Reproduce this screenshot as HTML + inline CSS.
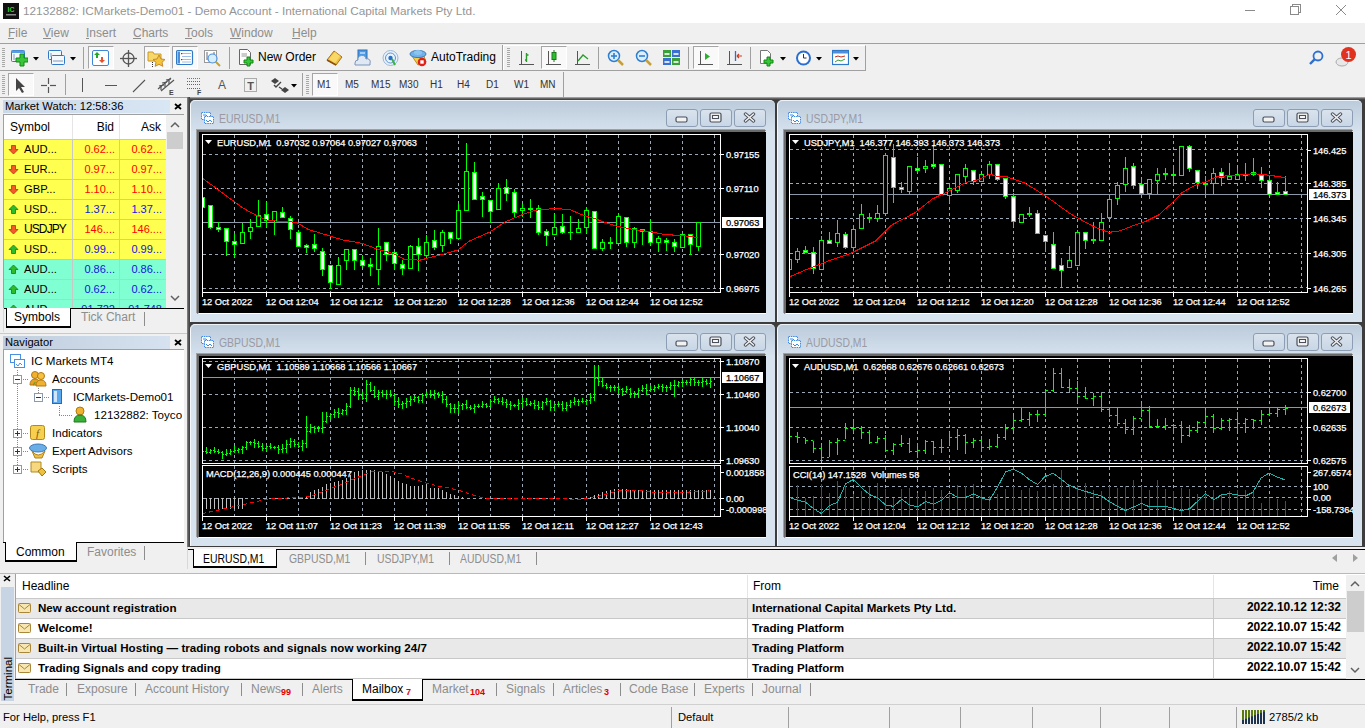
<!DOCTYPE html><html><head><meta charset="utf-8"><style>
html,body{margin:0;padding:0;width:1365px;height:728px;overflow:hidden;background:#f0f0f0;position:relative;font-family:"Liberation Sans",sans-serif}
div{position:absolute;box-sizing:border-box}
.t{white-space:pre}
</style></head><body><div style="left:0px;top:0px;width:1365px;height:23px;background:#fff"></div><svg style="position:absolute;left:3px;top:3px;" width="16" height="16" viewBox="0 0 16 16"><rect width="16" height="16" fill="#111"/><text x="8" y="9" font-size="7" font-family="Liberation Sans" font-weight="bold" fill="#2fd12f" text-anchor="middle">IC</text><rect x="3" y="11" width="10" height="1.5" fill="#888"/></svg><div class="t" style="left:23px;top:2px;height:18px;line-height:18px;font-size:11.8px;color:#959595;font-weight:normal;">12132882: ICMarkets-Demo01 - Demo Account - International Capital Markets Pty Ltd.</div><svg style="position:absolute;left:1240px;top:0px;" width="120" height="22" viewBox="0 0 120 22"><g stroke="#8a8a8a" stroke-width="1" fill="none" shape-rendering="crispEdges"><line x1="5" y1="10.5" x2="15" y2="10.5"/><rect x="50.5" y="6.5" width="8" height="8"/><polyline points="52.5,6.5 52.5,4.5 60.5,4.5 60.5,12.5 58.5,12.5"/></g><g stroke="#8a8a8a" stroke-width="1" fill="none"><line x1="96" y1="5" x2="106" y2="15"/><line x1="106" y1="5" x2="96" y2="15"/></g></svg><div style="left:0px;top:23px;width:1365px;height:20px;background:#f0f0f0"></div><div style="left:0px;top:43px;width:1365px;height:1px;background:#a0a0a0"></div><div class="t" style="left:8px;top:24px;height:18px;line-height:18px;font-size:12px;color:#8d8d8d;font-weight:normal;">File</div><div style="left:8px;top:38px;width:6px;height:1px;background:#8d8d8d"></div><div class="t" style="left:43px;top:24px;height:18px;line-height:18px;font-size:12px;color:#8d8d8d;font-weight:normal;">View</div><div style="left:43px;top:38px;width:8px;height:1px;background:#8d8d8d"></div><div class="t" style="left:86px;top:24px;height:18px;line-height:18px;font-size:12px;color:#8d8d8d;font-weight:normal;">Insert</div><div style="left:86px;top:38px;width:3px;height:1px;background:#8d8d8d"></div><div class="t" style="left:133px;top:24px;height:18px;line-height:18px;font-size:12px;color:#8d8d8d;font-weight:normal;">Charts</div><div style="left:133px;top:38px;width:8px;height:1px;background:#8d8d8d"></div><div class="t" style="left:185px;top:24px;height:18px;line-height:18px;font-size:12px;color:#8d8d8d;font-weight:normal;">Tools</div><div style="left:185px;top:38px;width:7px;height:1px;background:#8d8d8d"></div><div class="t" style="left:230px;top:24px;height:18px;line-height:18px;font-size:12px;color:#8d8d8d;font-weight:normal;">Window</div><div style="left:230px;top:38px;width:11px;height:1px;background:#8d8d8d"></div><div class="t" style="left:292px;top:24px;height:18px;line-height:18px;font-size:12px;color:#8d8d8d;font-weight:normal;">Help</div><div style="left:292px;top:38px;width:8px;height:1px;background:#8d8d8d"></div><div style="left:0px;top:44px;width:1365px;height:26px;background:#f0f0f0"></div><div style="left:0px;top:70px;width:866px;height:1px;background:#a0a0a0"></div><div style="left:0px;top:71px;width:1365px;height:26px;background:#f0f0f0"></div><div style="left:0px;top:97px;width:188px;height:1px;background:#a0a0a0"></div><div style="left:503px;top:45px;width:1px;height:25px;background:#fff;box-shadow:-1px 0 0 #a0a0a0"></div><div style="left:504px;top:45px;width:362px;height:25px;border-top:1px solid #fff;border-right:1px solid #a0a0a0"></div><div style="left:563px;top:72px;width:1px;height:25px;background:#a0a0a0"></div><svg style="position:absolute;left:2px;top:48px;" width="3" height="20" viewBox="0 0 3 20"><rect x="0" y="0" width="3" height="1" fill="#a8a8a8"/><rect x="0" y="2" width="3" height="1" fill="#a8a8a8"/><rect x="0" y="4" width="3" height="1" fill="#a8a8a8"/><rect x="0" y="6" width="3" height="1" fill="#a8a8a8"/><rect x="0" y="8" width="3" height="1" fill="#a8a8a8"/><rect x="0" y="10" width="3" height="1" fill="#a8a8a8"/><rect x="0" y="12" width="3" height="1" fill="#a8a8a8"/><rect x="0" y="14" width="3" height="1" fill="#a8a8a8"/><rect x="0" y="16" width="3" height="1" fill="#a8a8a8"/><rect x="0" y="18" width="3" height="1" fill="#a8a8a8"/></svg><svg style="position:absolute;left:10px;top:49px;" width="18" height="18" viewBox="0 0 18 18"><rect x="1.5" y="1.5" width="13" height="11" rx="1" fill="#f4f8fd" stroke="#2f78c8"/><rect x="1.5" y="1.5" width="13" height="2.5" fill="#5b9be0"/><line x1="4" y1="5" x2="4" y2="11" stroke="#7a9ab8"/><path d="M10 5h4v4h4v4h-4v4h-4v-4h-4v-4h4z" fill="#39c53a" stroke="#0e8a10" stroke-width="1"/></svg><svg style="position:absolute;left:33px;top:57px;" width="6" height="4" viewBox="0 0 6 4"><polygon points="0,0 6,0 3,3.5" fill="#000"/></svg><svg style="position:absolute;left:47px;top:49px;" width="18" height="18" viewBox="0 0 18 18"><rect x="1.5" y="1.5" width="13" height="9" rx="1" fill="#f4f8fd" stroke="#2f78c8"/><rect x="4.5" y="6.5" width="13" height="9" rx="1" fill="#f4f8fd" stroke="#2f78c8"/><line x1="6" y1="12" x2="16" y2="12" stroke="#7a9ab8"/><line x1="4" y1="4" x2="4" y2="8" stroke="#7a9ab8"/></svg><svg style="position:absolute;left:70px;top:57px;" width="6" height="4" viewBox="0 0 6 4"><polygon points="0,0 6,0 3,3.5" fill="#000"/></svg><div style="left:83px;top:47px;width:1px;height:22px;background:#a0a0a0"></div><div style="left:88px;top:46px;width:26px;height:23px;background:#f9f9f9;border-top:1px solid #a5a5a5;border-left:1px solid #a5a5a5;border-right:1px solid #fff;border-bottom:1px solid #fff"></div><svg style="position:absolute;left:92px;top:49px;" width="18" height="18" viewBox="0 0 18 18"><rect x="0.5" y="1.5" width="16" height="15" rx="1.5" fill="#fff" stroke="#3f86d6"/><path d="M5 3l3 3h-2v3h-2v-3h-2z" fill="#22a822"/><path d="M10 14l3-3h-2v-3h-2v3h-2z" fill="#e8502a"/></svg><svg style="position:absolute;left:120px;top:49px;" width="18" height="18" viewBox="0 0 18 18"><circle cx="8.5" cy="9.5" r="5.5" fill="none" stroke="#555" stroke-width="1.3"/><line x1="8.5" y1="1" x2="8.5" y2="18" stroke="#555" stroke-width="1.3"/><line x1="0" y1="9.5" x2="17" y2="9.5" stroke="#555" stroke-width="1.3"/></svg><div style="left:144px;top:46px;width:26px;height:23px;background:#f9f9f9;border-top:1px solid #a5a5a5;border-left:1px solid #a5a5a5;border-right:1px solid #fff;border-bottom:1px solid #fff"></div><svg style="position:absolute;left:147px;top:49px;" width="19" height="19" viewBox="0 0 19 19"><path d="M1 3h5l1 2h7v7h-13z" fill="#f7d66a" stroke="#c89a2a"/><path d="M12 6l2 4 4 .5-3 2.8 .8 4-3.8-2-3.8 2 .8-4-3-2.8 4-.5z" fill="#f3c63a" stroke="#c8882a"/><rect x="5" y="13" width="1" height="1" fill="#333"/><rect x="5" y="15" width="1" height="1" fill="#333"/><rect x="5" y="17" width="1" height="1" fill="#333"/></svg><div style="left:172px;top:46px;width:26px;height:23px;background:#f9f9f9;border-top:1px solid #a5a5a5;border-left:1px solid #a5a5a5;border-right:1px solid #fff;border-bottom:1px solid #fff"></div><svg style="position:absolute;left:176px;top:49px;" width="18" height="18" viewBox="0 0 18 18"><rect x="0.5" y="1.5" width="16" height="14" rx="1.5" fill="#fff" stroke="#2f78c8" stroke-width="1.2"/><rect x="1.5" y="2.5" width="2.5" height="12" fill="#4d8fd8"/><g stroke="#9cc0e8"><line x1="6" y1="4.5" x2="15" y2="4.5"/><line x1="6" y1="7.5" x2="15" y2="7.5"/><line x1="6" y1="10.5" x2="15" y2="10.5"/><line x1="6" y1="13" x2="15" y2="13"/></g><rect x="5" y="4" width="1.2" height="1.2" fill="#e00"/><rect x="5" y="10" width="1.2" height="1.2" fill="#e00"/></svg><svg style="position:absolute;left:203px;top:49px;" width="18" height="18" viewBox="0 0 18 18"><rect x="1.5" y="1.5" width="12" height="12" fill="#fff" stroke="#999"/><path d="M4 3v8M11 3v8" stroke="#667" /><circle cx="9.5" cy="9.5" r="4.5" fill="#d8ecfb" stroke="#4a90d9" stroke-width="1.2"/><line x1="12.5" y1="12.5" x2="17" y2="17" stroke="#c8a030" stroke-width="2"/></svg><div style="left:229px;top:47px;width:1px;height:22px;background:#a0a0a0"></div><svg style="position:absolute;left:238px;top:48px;" width="18" height="19" viewBox="0 0 18 19"><path d="M1.5 1.5h8l3 3v12h-11z" fill="#fff" stroke="#666"/><line x1="3.5" y1="6" x2="9" y2="6" stroke="#999"/><line x1="3.5" y1="8" x2="9" y2="8" stroke="#999"/><path d="M9 9h3v3h3v3h-3v3h-3v-3h-3v-3h3z" fill="#39c53a" stroke="#0e8a10"/></svg><div class="t" style="left:258px;top:48px;height:18px;line-height:18px;font-size:12px;color:#000;font-weight:normal;">New Order</div><svg style="position:absolute;left:326px;top:49px;" width="18" height="18" viewBox="0 0 18 18"><path d="M1 11l7-9 8 6-6 8z" fill="#f0c040" stroke="#a8701a"/><path d="M3 10l6-7 5 4-5 7z" fill="#f7d868"/><path d="M1 11l9 5" stroke="#8a5010" stroke-width="1.5"/></svg><svg style="position:absolute;left:354px;top:49px;" width="18" height="18" viewBox="0 0 18 18"><rect x="4" y="1" width="9" height="11" fill="#4a9be8" stroke="#2a6fb8"/><line x1="6" y1="4" x2="11" y2="4" stroke="#fff"/><path d="M1 14a3 3 0 0 1 3-3a4 4 0 0 1 8-1a3 3 0 0 1 4 4v2h-15z" fill="#dfe8f3" stroke="#7a96b8"/></svg><svg style="position:absolute;left:382px;top:49px;" width="18" height="18" viewBox="0 0 18 18"><circle cx="8.5" cy="9" r="7.5" fill="#eaf2fb" stroke="#9ab8d8"/><circle cx="8.5" cy="9" r="5" fill="none" stroke="#5a94d4"/><circle cx="8.5" cy="9" r="2.2" fill="#2a70c8"/><path d="M10 10l3 6" stroke="#3cb03c" stroke-width="2"/></svg><svg style="position:absolute;left:409px;top:48px;" width="18" height="19" viewBox="0 0 18 19"><path d="M3 8l6 9 8-3-2-6z" fill="#f2cf4a" stroke="#b8901a"/><ellipse cx="9" cy="6" rx="8" ry="3.6" fill="#6fb2ea" stroke="#3a7ab8"/><ellipse cx="9" cy="4.5" rx="4" ry="2.5" fill="#8cc4f0"/><circle cx="13" cy="14" r="4.3" fill="#e0201a"/><rect x="11.3" y="12.3" width="3.4" height="3.4" fill="#fff"/></svg><div class="t" style="left:431px;top:48px;height:18px;line-height:18px;font-size:12px;color:#000;font-weight:normal;">AutoTrading</div><svg style="position:absolute;left:507px;top:48px;" width="3" height="20" viewBox="0 0 3 20"><rect x="0" y="0" width="3" height="1" fill="#a8a8a8"/><rect x="0" y="2" width="3" height="1" fill="#a8a8a8"/><rect x="0" y="4" width="3" height="1" fill="#a8a8a8"/><rect x="0" y="6" width="3" height="1" fill="#a8a8a8"/><rect x="0" y="8" width="3" height="1" fill="#a8a8a8"/><rect x="0" y="10" width="3" height="1" fill="#a8a8a8"/><rect x="0" y="12" width="3" height="1" fill="#a8a8a8"/><rect x="0" y="14" width="3" height="1" fill="#a8a8a8"/><rect x="0" y="16" width="3" height="1" fill="#a8a8a8"/><rect x="0" y="18" width="3" height="1" fill="#a8a8a8"/></svg><svg style="position:absolute;left:518px;top:49px;" width="18" height="18" viewBox="0 0 18 18"><g stroke="#555" fill="none"><line x1="3.5" y1="2" x2="3.5" y2="16"/><line x1="1" y1="15.5" x2="16" y2="15.5"/></g><path d="M8.5 4v9M7 11h1.5M8.5 6h2" stroke="#2a9a2a" stroke-width="1.4" fill="none"/></svg><div style="left:541px;top:46px;width:26px;height:23px;background:#f9f9f9;border-top:1px solid #a5a5a5;border-left:1px solid #a5a5a5;border-right:1px solid #fff;border-bottom:1px solid #fff"></div><svg style="position:absolute;left:545px;top:49px;" width="18" height="18" viewBox="0 0 18 18"><g stroke="#555" fill="none"><line x1="3.5" y1="2" x2="3.5" y2="16"/><line x1="1" y1="15.5" x2="16" y2="15.5"/></g><line x1="9" y1="1" x2="9" y2="13" stroke="#1a7a1a"/><rect x="7" y="3.5" width="4" height="7" fill="#2cc02c" stroke="#1a7a1a"/></svg><svg style="position:absolute;left:574px;top:49px;" width="18" height="18" viewBox="0 0 18 18"><g stroke="#555" fill="none"><line x1="3.5" y1="2" x2="3.5" y2="16"/><line x1="1" y1="15.5" x2="16" y2="15.5"/></g><path d="M4 12l5-6 5 4" stroke="#2a9a2a" stroke-width="1.3" fill="none"/></svg><div style="left:598px;top:47px;width:1px;height:22px;background:#a0a0a0"></div><svg style="position:absolute;left:607px;top:49px;" width="18" height="18" viewBox="0 0 18 18"><circle cx="7" cy="7" r="5.5" fill="#dcefff" stroke="#2f7fd0" stroke-width="1.5"/><line x1="11" y1="11" x2="16" y2="16" stroke="#c8a030" stroke-width="2.5"/><line x1="4" y1="7" x2="10" y2="7" stroke="#2f7fd0" stroke-width="1.6"/><line x1="7" y1="4" x2="7" y2="10" stroke="#2f7fd0" stroke-width="1.6"/></svg><svg style="position:absolute;left:635px;top:49px;" width="18" height="18" viewBox="0 0 18 18"><circle cx="7" cy="7" r="5.5" fill="#dcefff" stroke="#2f7fd0" stroke-width="1.5"/><line x1="11" y1="11" x2="16" y2="16" stroke="#c8a030" stroke-width="2.5"/><line x1="4" y1="7" x2="10" y2="7" stroke="#2f7fd0" stroke-width="1.6"/></svg><svg style="position:absolute;left:662px;top:49px;" width="19" height="18" viewBox="0 0 19 18"><rect x="1" y="1" width="8" height="7" fill="#3aa03a"/><rect x="10" y="1" width="8" height="7" fill="#3a70d0"/><rect x="1" y="9" width="8" height="7" fill="#3a70d0"/><rect x="10" y="9" width="8" height="7" fill="#3aa03a"/><g fill="#fff" opacity=".8"><rect x="2.5" y="4" width="5" height="2"/><rect x="11.5" y="4" width="5" height="2"/><rect x="2.5" y="12" width="5" height="2"/><rect x="11.5" y="12" width="5" height="2"/></g></svg><div style="left:688px;top:47px;width:1px;height:22px;background:#a0a0a0"></div><div style="left:693px;top:46px;width:26px;height:23px;background:#f9f9f9;border-top:1px solid #a5a5a5;border-left:1px solid #a5a5a5;border-right:1px solid #fff;border-bottom:1px solid #fff"></div><svg style="position:absolute;left:697px;top:49px;" width="18" height="18" viewBox="0 0 18 18"><g stroke="#555" fill="none"><line x1="3.5" y1="2" x2="3.5" y2="16"/><line x1="1" y1="15.5" x2="16" y2="15.5"/></g><path d="M8 4v7l5-3.5z" fill="#2cb02c"/></svg><svg style="position:absolute;left:726px;top:49px;" width="18" height="18" viewBox="0 0 18 18"><g stroke="#555" fill="none"><line x1="3.5" y1="2" x2="3.5" y2="16"/><line x1="1" y1="15.5" x2="16" y2="15.5"/></g><line x1="9.5" y1="2" x2="9.5" y2="12" stroke="#2a6fc8" stroke-width="1.3"/><path d="M11 7h5M11 7l2-2M11 7l2 2" stroke="#d03a1a" stroke-width="1.2" fill="none"/></svg><div style="left:750px;top:47px;width:1px;height:22px;background:#a0a0a0"></div><svg style="position:absolute;left:759px;top:49px;" width="17" height="19" viewBox="0 0 17 19"><path d="M1.5 1.5h7l3 3v10h-10z" fill="#fff" stroke="#777"/><path d="M8 8h3v3h3v3h-3v3h-3v-3h-3v-3h3z" fill="#39c53a" stroke="#0e8a10"/></svg><svg style="position:absolute;left:780px;top:57px;" width="6" height="4" viewBox="0 0 6 4"><polygon points="0,0 6,0 3,3.5" fill="#000"/></svg><svg style="position:absolute;left:795px;top:49px;" width="18" height="18" viewBox="0 0 18 18"><circle cx="8.5" cy="9" r="7.5" fill="#2a6fd0"/><circle cx="8.5" cy="9" r="5.5" fill="#fff"/><path d="M8.5 5v4h3" stroke="#333" fill="none"/></svg><svg style="position:absolute;left:816px;top:57px;" width="6" height="4" viewBox="0 0 6 4"><polygon points="0,0 6,0 3,3.5" fill="#000"/></svg><svg style="position:absolute;left:832px;top:49px;" width="17" height="17" viewBox="0 0 17 17"><rect x="0.5" y="1.5" width="16" height="14" fill="#fff" stroke="#2f78c8" stroke-width="1.2"/><rect x="1" y="2" width="15" height="2.5" fill="#4d8fd8"/><path d="M3 8l3-1 3 1 4-1" stroke="#c03020" fill="none"/><path d="M3 13l3-2 3 1 4-2" stroke="#30a030" fill="none"/></svg><svg style="position:absolute;left:853px;top:57px;" width="6" height="4" viewBox="0 0 6 4"><polygon points="0,0 6,0 3,3.5" fill="#000"/></svg><svg style="position:absolute;left:1308px;top:50px;" width="17" height="17" viewBox="0 0 17 17"><circle cx="10" cy="6" r="4.5" fill="none" stroke="#2f6fd0" stroke-width="1.8"/><line x1="6.8" y1="9.2" x2="2" y2="14" stroke="#2f6fd0" stroke-width="2.4"/></svg><svg style="position:absolute;left:1334px;top:45px;" width="24" height="23" viewBox="0 0 24 23"><ellipse cx="8" cy="17" rx="6" ry="4" fill="#e8e8e8" stroke="#aaa"/><circle cx="14.5" cy="9.5" r="7.5" fill="#e0321e"/><text x="14.5" y="13.5" font-size="11" font-family="Liberation Sans" fill="#fff" text-anchor="middle">1</text></svg><svg style="position:absolute;left:2px;top:75px;" width="3" height="19" viewBox="0 0 3 19"><rect x="0" y="0" width="3" height="1" fill="#a8a8a8"/><rect x="0" y="2" width="3" height="1" fill="#a8a8a8"/><rect x="0" y="4" width="3" height="1" fill="#a8a8a8"/><rect x="0" y="6" width="3" height="1" fill="#a8a8a8"/><rect x="0" y="8" width="3" height="1" fill="#a8a8a8"/><rect x="0" y="10" width="3" height="1" fill="#a8a8a8"/><rect x="0" y="12" width="3" height="1" fill="#a8a8a8"/><rect x="0" y="14" width="3" height="1" fill="#a8a8a8"/><rect x="0" y="16" width="3" height="1" fill="#a8a8a8"/><rect x="0" y="18" width="3" height="1" fill="#a8a8a8"/></svg><div style="left:8px;top:73px;width:26px;height:23px;background:#f9f9f9;border-top:1px solid #a5a5a5;border-left:1px solid #a5a5a5;border-right:1px solid #fff;border-bottom:1px solid #fff"></div><svg style="position:absolute;left:14px;top:77px;" width="14" height="17" viewBox="0 0 14 17"><path d="M2 1v13l3-3 3 5 2-1-3-5h4z" fill="#444"/></svg><svg style="position:absolute;left:40px;top:77px;" width="17" height="17" viewBox="0 0 17 17"><g stroke="#555" stroke-width="1.2"><line x1="8.5" y1="1" x2="8.5" y2="7"/><line x1="8.5" y1="10" x2="8.5" y2="16"/><line x1="1" y1="8.5" x2="7" y2="8.5"/><line x1="10" y1="8.5" x2="16" y2="8.5"/></g></svg><div style="left:65px;top:74px;width:1px;height:21px;background:#a0a0a0"></div><div style="left:82px;top:78px;width:1px;height:14px;background:#555"></div><div style="left:105px;top:85px;width:12px;height:1px;background:#555"></div><svg style="position:absolute;left:132px;top:79px;" width="14" height="14" viewBox="0 0 14 14"><line x1="13" y1="1" x2="1" y2="13" stroke="#555" stroke-width="1.1"/></svg><svg style="position:absolute;left:157px;top:76px;" width="19" height="20" viewBox="0 0 19 20"><g stroke="#555" stroke-width="1.2" fill="none"><path d="M1 13l13-11"/><path d="M4 15l13-11"/><path d="M4 9v5M8 6v5M12 3v5"/><path d="M2 10l5-1M5 7l5-1M9 4l5-1"/></g><text x="12" y="19" font-size="7" font-weight="bold" font-family="Liberation Sans" fill="#444">E</text></svg><svg style="position:absolute;left:187px;top:77px;" width="18" height="19" viewBox="0 0 18 19"><g fill="#666"><rect x="0" y="1" width="13" height="1" style="opacity:.9"/><rect x="0" y="4" width="13" height="1"/><rect x="0" y="7" width="13" height="1"/><rect x="0" y="11" width="13" height="1"/></g><g fill="#f0f0f0"><rect x="1" y="0" width="1" height="13"/><rect x="3" y="0" width="1" height="13"/><rect x="5" y="0" width="1" height="13"/><rect x="7" y="0" width="1" height="13"/><rect x="9" y="0" width="1" height="13"/><rect x="11" y="0" width="1" height="13"/></g><text x="10" y="18" font-size="7" font-weight="bold" font-family="Liberation Sans" fill="#444">F</text></svg><div class="t" style="left:218px;top:77px;height:17px;line-height:17px;font-size:12px;color:#555;font-weight:normal;">A</div><svg style="position:absolute;left:243px;top:77px;" width="16" height="17" viewBox="0 0 16 17"><rect x="1.5" y="1.5" width="12" height="13" fill="none" stroke="#666" stroke-dasharray="1,1"/><text x="7.5" y="12.5" font-size="11" font-weight="bold" font-family="Liberation Sans" fill="#555" text-anchor="middle">T</text></svg><svg style="position:absolute;left:271px;top:78px;" width="19" height="16" viewBox="0 0 19 16"><path d="M4 0l4 3-4 3-4-3z" fill="#444"/><path d="M14 9l4 3-4 3-4-3z" fill="#444"/><path d="M3 7l2 2 5-5" stroke="#444" stroke-width="1.4" fill="none"/><path d="M8 9l3 2" stroke="#444" stroke-width="1.4"/></svg><svg style="position:absolute;left:291px;top:84px;" width="6" height="4" viewBox="0 0 6 4"><polygon points="0,0 6,0 3,3.5" fill="#000"/></svg><div style="left:302px;top:73px;width:1px;height:23px;background:#a0a0a0"></div><svg style="position:absolute;left:306px;top:75px;" width="3" height="19" viewBox="0 0 3 19"><rect x="0" y="0" width="3" height="1" fill="#a8a8a8"/><rect x="0" y="2" width="3" height="1" fill="#a8a8a8"/><rect x="0" y="4" width="3" height="1" fill="#a8a8a8"/><rect x="0" y="6" width="3" height="1" fill="#a8a8a8"/><rect x="0" y="8" width="3" height="1" fill="#a8a8a8"/><rect x="0" y="10" width="3" height="1" fill="#a8a8a8"/><rect x="0" y="12" width="3" height="1" fill="#a8a8a8"/><rect x="0" y="14" width="3" height="1" fill="#a8a8a8"/><rect x="0" y="16" width="3" height="1" fill="#a8a8a8"/><rect x="0" y="18" width="3" height="1" fill="#a8a8a8"/></svg><div style="left:312px;top:73px;width:26px;height:23px;background:#f9f9f9;border-top:1px solid #a5a5a5;border-left:1px solid #a5a5a5;border-right:1px solid #fff;border-bottom:1px solid #fff"></div><div class="t" style="left:317px;top:76px;height:17px;line-height:17px;font-size:10px;color:#333;font-weight:normal;">M1</div><div class="t" style="left:345px;top:76px;height:17px;line-height:17px;font-size:10px;color:#333;font-weight:normal;">M5</div><div class="t" style="left:371px;top:76px;height:17px;line-height:17px;font-size:10px;color:#333;font-weight:normal;">M15</div><div class="t" style="left:399px;top:76px;height:17px;line-height:17px;font-size:10px;color:#333;font-weight:normal;">M30</div><div class="t" style="left:430px;top:76px;height:17px;line-height:17px;font-size:10px;color:#333;font-weight:normal;">H1</div><div class="t" style="left:457px;top:76px;height:17px;line-height:17px;font-size:10px;color:#333;font-weight:normal;">H4</div><div class="t" style="left:486px;top:76px;height:17px;line-height:17px;font-size:10px;color:#333;font-weight:normal;">D1</div><div class="t" style="left:514px;top:76px;height:17px;line-height:17px;font-size:10px;color:#333;font-weight:normal;">W1</div><div class="t" style="left:540px;top:76px;height:17px;line-height:17px;font-size:10px;color:#333;font-weight:normal;">MN</div><div style="left:0px;top:98px;width:187px;height:471px;background:#f0f0f0"></div><div style="left:187px;top:98px;width:1px;height:471px;background:#d8d8d8"></div><div style="left:3px;top:100px;width:167px;height:13px;background:linear-gradient(90deg,#cbd8e8,#d9e6f4)"></div><div class="t" style="left:5px;top:99px;height:15px;line-height:15px;font-size:11.2px;color:#000;font-weight:normal;">Market Watch: 12:58:36</div><svg style="position:absolute;left:174px;top:103px;" width="8" height="7" viewBox="0 0 8 7"><path d="M1 1l6 5M7 1l-6 5" stroke="#000" stroke-width="1.8"/></svg><div style="left:3px;top:114px;width:181px;height:194px;background:#fff;border-top:1px solid #a0a0a0;border-left:1px solid #a0a0a0"></div><div style="left:4px;top:115px;width:162px;height:24px;background:#fff"></div><div style="left:72px;top:115px;width:1px;height:24px;background:#e5e5e5"></div><div style="left:119px;top:115px;width:1px;height:24px;background:#e5e5e5"></div><div class="t" style="left:10px;top:119px;height:16px;line-height:16px;font-size:12px;color:#000;font-weight:normal;">Symbol</div><div class="t" style="right:1251px;top:119px;height:16px;line-height:16px;font-size:12px;color:#000;font-weight:normal;text-align:right;">Bid</div><div class="t" style="right:1204px;top:119px;height:16px;line-height:16px;font-size:12px;color:#000;font-weight:normal;text-align:right;">Ask</div><div style="left:4px;top:139px;width:162px;height:20px;background:#ffff50;overflow:hidden"><div style="left:0px;top:0px;width:162px;height:1px;background:#c8c8c8"></div><div style="left:68px;top:0px;width:1px;height:20px;background:#c8c8c8"></div><div style="left:115px;top:0px;width:1px;height:20px;background:#c8c8c8"></div><svg style="position:absolute;left:4px;top:5px;" width="11" height="11" viewBox="0 0 11 11"><path d="M5.5 10l4.5-4.5h-2.5v-4h-4v4h-2.5z" fill="#f25a2a" stroke="#b8300a" stroke-width=".8"/></svg><div class="t" style="left:20px;top:1px;height:18px;line-height:18px;font-size:11.2px;color:#000;font-weight:normal;">AUD...</div></div><div style="left:73px;top:140px;width:46px;height:19px;overflow:hidden"><div class="t" style="right:4px;top:0px;height:18px;line-height:18px;font-size:11px;color:#ff0000">0.62...</div></div><div style="left:120px;top:140px;width:46px;height:19px;overflow:hidden"><div class="t" style="right:4px;top:0px;height:18px;line-height:18px;font-size:11px;color:#ff0000">0.62...</div></div><div style="left:4px;top:159px;width:162px;height:20px;background:#ffff50;overflow:hidden"><div style="left:0px;top:0px;width:162px;height:1px;background:#c8c8c8"></div><div style="left:68px;top:0px;width:1px;height:20px;background:#c8c8c8"></div><div style="left:115px;top:0px;width:1px;height:20px;background:#c8c8c8"></div><svg style="position:absolute;left:4px;top:5px;" width="11" height="11" viewBox="0 0 11 11"><path d="M5.5 10l4.5-4.5h-2.5v-4h-4v4h-2.5z" fill="#f25a2a" stroke="#b8300a" stroke-width=".8"/></svg><div class="t" style="left:20px;top:1px;height:18px;line-height:18px;font-size:11.2px;color:#000;font-weight:normal;">EUR...</div></div><div style="left:73px;top:160px;width:46px;height:19px;overflow:hidden"><div class="t" style="right:4px;top:0px;height:18px;line-height:18px;font-size:11px;color:#ff0000">0.97...</div></div><div style="left:120px;top:160px;width:46px;height:19px;overflow:hidden"><div class="t" style="right:4px;top:0px;height:18px;line-height:18px;font-size:11px;color:#ff0000">0.97...</div></div><div style="left:4px;top:179px;width:162px;height:20px;background:#ffff50;overflow:hidden"><div style="left:0px;top:0px;width:162px;height:1px;background:#c8c8c8"></div><div style="left:68px;top:0px;width:1px;height:20px;background:#c8c8c8"></div><div style="left:115px;top:0px;width:1px;height:20px;background:#c8c8c8"></div><svg style="position:absolute;left:4px;top:5px;" width="11" height="11" viewBox="0 0 11 11"><path d="M5.5 10l4.5-4.5h-2.5v-4h-4v4h-2.5z" fill="#f25a2a" stroke="#b8300a" stroke-width=".8"/></svg><div class="t" style="left:20px;top:1px;height:18px;line-height:18px;font-size:11.2px;color:#000;font-weight:normal;">GBP...</div></div><div style="left:73px;top:180px;width:46px;height:19px;overflow:hidden"><div class="t" style="right:4px;top:0px;height:18px;line-height:18px;font-size:11px;color:#ff0000">1.10...</div></div><div style="left:120px;top:180px;width:46px;height:19px;overflow:hidden"><div class="t" style="right:4px;top:0px;height:18px;line-height:18px;font-size:11px;color:#ff0000">1.10...</div></div><div style="left:4px;top:199px;width:162px;height:20px;background:#ffff50;overflow:hidden"><div style="left:0px;top:0px;width:162px;height:1px;background:#c8c8c8"></div><div style="left:68px;top:0px;width:1px;height:20px;background:#c8c8c8"></div><div style="left:115px;top:0px;width:1px;height:20px;background:#c8c8c8"></div><svg style="position:absolute;left:4px;top:5px;" width="11" height="11" viewBox="0 0 11 11"><path d="M5.5 1l4.5 4.5h-2.5v4h-4v-4h-2.5z" fill="#2dbb2d" stroke="#137a13" stroke-width=".8"/></svg><div class="t" style="left:20px;top:1px;height:18px;line-height:18px;font-size:11.2px;color:#000;font-weight:normal;">USD...</div></div><div style="left:73px;top:200px;width:46px;height:19px;overflow:hidden"><div class="t" style="right:4px;top:0px;height:18px;line-height:18px;font-size:11px;color:#1414e0">1.37...</div></div><div style="left:120px;top:200px;width:46px;height:19px;overflow:hidden"><div class="t" style="right:4px;top:0px;height:18px;line-height:18px;font-size:11px;color:#1414e0">1.37...</div></div><div style="left:4px;top:219px;width:162px;height:20px;background:#ffff50;overflow:hidden"><div style="left:0px;top:0px;width:162px;height:1px;background:#c8c8c8"></div><div style="left:68px;top:0px;width:1px;height:20px;background:#c8c8c8"></div><div style="left:115px;top:0px;width:1px;height:20px;background:#c8c8c8"></div><svg style="position:absolute;left:4px;top:5px;" width="11" height="11" viewBox="0 0 11 11"><path d="M5.5 10l4.5-4.5h-2.5v-4h-4v4h-2.5z" fill="#f25a2a" stroke="#b8300a" stroke-width=".8"/></svg><div class="t" style="left:20px;top:1px;height:18px;line-height:18px;font-size:12px;color:#000;font-weight:normal;letter-spacing:-0.9px;">USDJPY</div></div><div style="left:73px;top:220px;width:46px;height:19px;overflow:hidden"><div class="t" style="right:4px;top:0px;height:18px;line-height:18px;font-size:11px;color:#ff0000">146....</div></div><div style="left:120px;top:220px;width:46px;height:19px;overflow:hidden"><div class="t" style="right:4px;top:0px;height:18px;line-height:18px;font-size:11px;color:#ff0000">146....</div></div><div style="left:4px;top:239px;width:162px;height:20px;background:#ffff50;overflow:hidden"><div style="left:0px;top:0px;width:162px;height:1px;background:#c8c8c8"></div><div style="left:68px;top:0px;width:1px;height:20px;background:#c8c8c8"></div><div style="left:115px;top:0px;width:1px;height:20px;background:#c8c8c8"></div><svg style="position:absolute;left:4px;top:5px;" width="11" height="11" viewBox="0 0 11 11"><path d="M5.5 1l4.5 4.5h-2.5v4h-4v-4h-2.5z" fill="#2dbb2d" stroke="#137a13" stroke-width=".8"/></svg><div class="t" style="left:20px;top:1px;height:18px;line-height:18px;font-size:11.2px;color:#000;font-weight:normal;">USD...</div></div><div style="left:73px;top:240px;width:46px;height:19px;overflow:hidden"><div class="t" style="right:4px;top:0px;height:18px;line-height:18px;font-size:11px;color:#1414e0">0.99...</div></div><div style="left:120px;top:240px;width:46px;height:19px;overflow:hidden"><div class="t" style="right:4px;top:0px;height:18px;line-height:18px;font-size:11px;color:#1414e0">0.99...</div></div><div style="left:4px;top:259px;width:162px;height:20px;background:#80ffd2;overflow:hidden"><div style="left:0px;top:0px;width:162px;height:1px;background:#c8c8c8"></div><div style="left:68px;top:0px;width:1px;height:20px;background:#c8c8c8"></div><div style="left:115px;top:0px;width:1px;height:20px;background:#c8c8c8"></div><svg style="position:absolute;left:4px;top:5px;" width="11" height="11" viewBox="0 0 11 11"><path d="M5.5 1l4.5 4.5h-2.5v4h-4v-4h-2.5z" fill="#2dbb2d" stroke="#137a13" stroke-width=".8"/></svg><div class="t" style="left:20px;top:1px;height:18px;line-height:18px;font-size:11.2px;color:#000;font-weight:normal;">AUD...</div></div><div style="left:73px;top:260px;width:46px;height:19px;overflow:hidden"><div class="t" style="right:4px;top:0px;height:18px;line-height:18px;font-size:11px;color:#1414e0">0.86...</div></div><div style="left:120px;top:260px;width:46px;height:19px;overflow:hidden"><div class="t" style="right:4px;top:0px;height:18px;line-height:18px;font-size:11px;color:#1414e0">0.86...</div></div><div style="left:4px;top:279px;width:162px;height:20px;background:#80ffd2;overflow:hidden"><div style="left:0px;top:0px;width:162px;height:1px;background:#c8c8c8"></div><div style="left:68px;top:0px;width:1px;height:20px;background:#c8c8c8"></div><div style="left:115px;top:0px;width:1px;height:20px;background:#c8c8c8"></div><svg style="position:absolute;left:4px;top:5px;" width="11" height="11" viewBox="0 0 11 11"><path d="M5.5 1l4.5 4.5h-2.5v4h-4v-4h-2.5z" fill="#2dbb2d" stroke="#137a13" stroke-width=".8"/></svg><div class="t" style="left:20px;top:1px;height:18px;line-height:18px;font-size:11.2px;color:#000;font-weight:normal;">AUD...</div></div><div style="left:73px;top:280px;width:46px;height:19px;overflow:hidden"><div class="t" style="right:4px;top:0px;height:18px;line-height:18px;font-size:11px;color:#1414e0">0.62...</div></div><div style="left:120px;top:280px;width:46px;height:19px;overflow:hidden"><div class="t" style="right:4px;top:0px;height:18px;line-height:18px;font-size:11px;color:#1414e0">0.62...</div></div><div style="left:4px;top:299px;width:162px;height:9px;background:#80ffd2;overflow:hidden"><div style="left:0px;top:0px;width:162px;height:1px;background:#c8c8c8"></div><div style="left:68px;top:0px;width:1px;height:20px;background:#c8c8c8"></div><div style="left:115px;top:0px;width:1px;height:20px;background:#c8c8c8"></div><svg style="position:absolute;left:4px;top:5px;" width="11" height="11" viewBox="0 0 11 11"><path d="M5.5 1l4.5 4.5h-2.5v4h-4v-4h-2.5z" fill="#2dbb2d" stroke="#137a13" stroke-width=".8"/></svg><div class="t" style="left:20px;top:1px;height:18px;line-height:18px;font-size:11.2px;color:#000;font-weight:normal;">AUD...</div></div><div style="left:73px;top:300px;width:46px;height:8px;overflow:hidden"><div class="t" style="right:4px;top:0px;height:18px;line-height:18px;font-size:11px;color:#1414e0">91.722</div></div><div style="left:120px;top:300px;width:46px;height:8px;overflow:hidden"><div class="t" style="right:4px;top:0px;height:18px;line-height:18px;font-size:11px;color:#1414e0">91.748</div></div><div style="left:166px;top:115px;width:18px;height:193px;background:#f0f0f0"></div><svg style="position:absolute;left:170px;top:121px;" width="10" height="7" viewBox="0 0 10 7"><path d="M1 6l4-4 4 4" stroke="#606060" stroke-width="1.5" fill="none"/></svg><div style="left:167px;top:132px;width:16px;height:17px;background:#cdcdcd"></div><svg style="position:absolute;left:170px;top:295px;" width="10" height="7" viewBox="0 0 10 7"><path d="M1 1l4 4 4-4" stroke="#606060" stroke-width="1.5" fill="none"/></svg><div style="left:3px;top:308px;width:181px;height:1px;background:#000"></div><div style="left:6px;top:308px;width:65px;height:20px;background:#fff;border:1px solid #000;border-top:none;border-bottom-width:2px"></div><div class="t" style="left:14px;top:309px;height:17px;line-height:17px;font-size:12px;color:#000;font-weight:normal;">Symbols</div><div class="t" style="left:81px;top:309px;height:17px;line-height:17px;font-size:12px;color:#8d8d8d;font-weight:normal;">Tick Chart</div><div style="left:144px;top:312px;width:1px;height:14px;background:#8d8d8d"></div><div style="left:3px;top:308px;width:1px;height:24px;background:#d8d8d8"></div><div style="left:0px;top:333px;width:187px;height:1px;background:#c9c9c9"></div><div style="left:3px;top:336px;width:167px;height:13px;background:linear-gradient(90deg,#bfcddd,#d6e2ef)"></div><div class="t" style="left:5px;top:335px;height:15px;line-height:15px;font-size:11.2px;color:#000;font-weight:normal;">Navigator</div><svg style="position:absolute;left:174px;top:339px;" width="8" height="7" viewBox="0 0 8 7"><path d="M1 1l6 5M7 1l-6 5" stroke="#000" stroke-width="1.8"/></svg><div style="left:3px;top:349px;width:181px;height:193px;background:#fff;border-top:1px solid #a0a0a0;border-left:1px solid #a0a0a0"></div><div style="left:17px;top:370px;width:1px;height:100px;background-image:linear-gradient(#888 50%,transparent 50%);background-size:1px 2px"></div><div style="left:38px;top:388px;width:1px;height:9px;background-image:linear-gradient(#888 50%,transparent 50%);background-size:1px 2px"></div><div style="left:59px;top:406px;width:1px;height:9px;background-image:linear-gradient(#888 50%,transparent 50%);background-size:1px 2px"></div><div style="left:17px;top:379px;width:12px;height:1px;background-image:linear-gradient(90deg,#888 50%,transparent 50%);background-size:2px 1px"></div><div style="left:17px;top:433px;width:12px;height:1px;background-image:linear-gradient(90deg,#888 50%,transparent 50%);background-size:2px 1px"></div><div style="left:17px;top:451px;width:12px;height:1px;background-image:linear-gradient(90deg,#888 50%,transparent 50%);background-size:2px 1px"></div><div style="left:17px;top:469px;width:12px;height:1px;background-image:linear-gradient(90deg,#888 50%,transparent 50%);background-size:2px 1px"></div><div style="left:38px;top:397px;width:12px;height:1px;background-image:linear-gradient(90deg,#888 50%,transparent 50%);background-size:2px 1px"></div><div style="left:59px;top:415px;width:13px;height:1px;background-image:linear-gradient(90deg,#888 50%,transparent 50%);background-size:2px 1px"></div><svg style="position:absolute;left:13px;top:375px;" width="9" height="9" viewBox="0 0 9 9"><rect x="0.5" y="0.5" width="8" height="8" fill="#fff" stroke="#8a9bb0"/><line x1="2" y1="4.5" x2="7" y2="4.5" stroke="#333"/></svg><svg style="position:absolute;left:34px;top:393px;" width="9" height="9" viewBox="0 0 9 9"><rect x="0.5" y="0.5" width="8" height="8" fill="#fff" stroke="#8a9bb0"/><line x1="2" y1="4.5" x2="7" y2="4.5" stroke="#333"/></svg><svg style="position:absolute;left:13px;top:429px;" width="9" height="9" viewBox="0 0 9 9"><rect x="0.5" y="0.5" width="8" height="8" fill="#fff" stroke="#8a9bb0"/><line x1="2" y1="4.5" x2="7" y2="4.5" stroke="#333"/><line x1="4.5" y1="2" x2="4.5" y2="7" stroke="#333"/></svg><svg style="position:absolute;left:13px;top:447px;" width="9" height="9" viewBox="0 0 9 9"><rect x="0.5" y="0.5" width="8" height="8" fill="#fff" stroke="#8a9bb0"/><line x1="2" y1="4.5" x2="7" y2="4.5" stroke="#333"/><line x1="4.5" y1="2" x2="4.5" y2="7" stroke="#333"/></svg><svg style="position:absolute;left:13px;top:465px;" width="9" height="9" viewBox="0 0 9 9"><rect x="0.5" y="0.5" width="8" height="8" fill="#fff" stroke="#8a9bb0"/><line x1="2" y1="4.5" x2="7" y2="4.5" stroke="#333"/><line x1="4.5" y1="2" x2="4.5" y2="7" stroke="#333"/></svg><svg style="position:absolute;left:9px;top:353px;" width="17" height="16" viewBox="0 0 17 16"><rect x="1.5" y="1.5" width="10" height="8" fill="#fff" stroke="#4a90e0"/><rect x="5.5" y="6.5" width="10" height="8" fill="#fff" stroke="#4a90e0"/><path d="M7 11l2 2 2-3 2 2" stroke="#4a90e0" fill="none"/></svg><div class="t" style="left:31px;top:353px;height:16px;line-height:16px;font-size:11.6px;color:#000;font-weight:normal;">IC Markets MT4</div><svg style="position:absolute;left:29px;top:370px;" width="18" height="17" viewBox="0 0 18 17"><circle cx="6" cy="5" r="3.5" fill="#f0b030" stroke="#b07a10"/><path d="M1 15q0-6 5-6q5 0 5 6z" fill="#e8a020" stroke="#b07a10"/><circle cx="12" cy="6" r="3.5" fill="#f7c040" stroke="#b07a10"/><path d="M7 16q0-6 5-6q5 0 5 6z" fill="#f0b030" stroke="#b07a10"/><path d="M4 16q0-4 3-4" fill="#3aa83a"/></svg><div class="t" style="left:52px;top:371px;height:16px;line-height:16px;font-size:11.6px;color:#000;font-weight:normal;">Accounts</div><svg style="position:absolute;left:51px;top:388px;" width="12" height="17" viewBox="0 0 12 17"><rect x="1.5" y="1.5" width="9" height="14" fill="#5aa8ee" stroke="#2a6ab8"/><rect x="3" y="3" width="3" height="11" fill="#cfe6fb"/></svg><div class="t" style="left:73px;top:389px;height:16px;line-height:16px;font-size:11.6px;color:#000;font-weight:normal;">ICMarkets-Demo01</div><svg style="position:absolute;left:72px;top:406px;" width="16" height="17" viewBox="0 0 16 17"><circle cx="8" cy="5" r="4" fill="#f0b030" stroke="#b07a10"/><path d="M2 16q0-7 6-7q6 0 6 7z" fill="#3ab03a" stroke="#1a7a1a"/></svg><div class="t" style="left:94px;top:407px;height:16px;line-height:16px;font-size:11.6px;color:#000;font-weight:normal;">12132882: Toyco</div><svg style="position:absolute;left:29px;top:424px;" width="17" height="17" viewBox="0 0 17 17"><rect x="1.5" y="1.5" width="14" height="14" rx="2" fill="#f7d050" stroke="#b08a20"/><text x="8.5" y="13" font-size="11" font-style="italic" font-family="Liberation Serif" fill="#7a5a10" text-anchor="middle">f</text></svg><div class="t" style="left:52px;top:425px;height:16px;line-height:16px;font-size:11.6px;color:#000;font-weight:normal;">Indicators</div><svg style="position:absolute;left:29px;top:442px;" width="20" height="17" viewBox="0 0 20 17"><ellipse cx="9" cy="6" rx="8.5" ry="4" fill="#6aaee8" stroke="#3a7ab8"/><path d="M3 9q6 8 13 0l-3 7h-7z" fill="#f0c040" stroke="#b08020"/></svg><div class="t" style="left:52px;top:443px;height:16px;line-height:16px;font-size:11.6px;color:#000;font-weight:normal;">Expert Advisors</div><svg style="position:absolute;left:29px;top:460px;" width="18" height="17" viewBox="0 0 18 17"><path d="M2 2h10v10h-10z" fill="#f7d880" stroke="#b08a20"/><path d="M9 11l4-3 4 4-4 4z" fill="#f0c040" stroke="#a07a10"/></svg><div class="t" style="left:52px;top:461px;height:16px;line-height:16px;font-size:11.6px;color:#000;font-weight:normal;">Scripts</div><div style="left:3px;top:542px;width:181px;height:1px;background:#000"></div><div style="left:5px;top:542px;width:72px;height:20px;background:#fff;border:1px solid #000;border-top:none;border-bottom-width:2px"></div><div class="t" style="left:16px;top:544px;height:17px;line-height:17px;font-size:12px;color:#000;font-weight:normal;">Common</div><div class="t" style="left:87px;top:544px;height:17px;line-height:17px;font-size:12px;color:#8d8d8d;font-weight:normal;">Favorites</div><div style="left:144px;top:546px;width:1px;height:14px;background:#8d8d8d"></div><div style="left:188px;top:97px;width:1177px;height:450px;background:#3d3d3d"></div><div style="left:188px;top:97px;width:1177px;height:3px;background:linear-gradient(#b8b8b8,#555 60%,#3d3d3d)"></div><div style="left:187px;top:97px;width:3px;height:450px;background:linear-gradient(90deg,#8a8a8a,#505050 60%,#3d3d3d)"></div><div style="left:190px;top:100px;width:585px;height:222px;background:#d7e3ef;border-top:1px solid #eef3f9;border-left:1px solid #f4f8fc;border-radius:5px 5px 0 0"></div><div style="left:191px;top:101px;width:584px;height:30px;background:linear-gradient(#bccbdb,#d5e1ed);border-radius:5px 5px 0 0"></div><div style="left:197px;top:130px;width:569px;height:184px;background:#000;border-top:2px solid #6a6a6a;border-left:2px solid #6a6a6a;border-right:1px solid #fff;border-bottom:1px solid #fff;box-shadow:-1px -1px 0 #a0a0a0"></div><svg style="position:absolute;left:200px;top:111px;" width="15" height="14" viewBox="0 0 15 14"><rect x="1.5" y="1.5" width="9" height="7" fill="#fff" stroke="#3a8ae8" stroke-dasharray="1.5,.8"/><rect x="4.5" y="5.5" width="9" height="7" fill="#fff" stroke="#3a8ae8" stroke-dasharray="1.5,.8"/><path d="M6 9l2 2 2-2 2 2" stroke="#3a8ae8" fill="none"/><path d="M3 4h3l2 2" stroke="#3a8ae8" fill="none"/></svg><div class="t" style="left:219px;top:110px;height:18px;line-height:18px;font-size:12.4px;color:#9a9aa4;font-weight:normal;transform:scaleX(0.84);transform-origin:0 0">EURUSD,M1</div><div style="left:666px;top:109px;width:32px;height:18px;border:1px solid #8d9db3;border-radius:3px;background:linear-gradient(#d9e3ee,#c9d6e5)"></div><div style="left:700px;top:109px;width:32px;height:18px;border:1px solid #8d9db3;border-radius:3px;background:linear-gradient(#d9e3ee,#c9d6e5)"></div><div style="left:734px;top:109px;width:32px;height:18px;border:1px solid #8d9db3;border-radius:3px;background:linear-gradient(#d9e3ee,#c9d6e5)"></div><svg style="position:absolute;left:675px;top:116px;" width="13" height="7" viewBox="0 0 13 7"><rect x="1" y="1" width="11" height="5" rx="1.5" fill="#f2f2f2" stroke="#4a4f5a" stroke-width="1.2"/></svg><svg style="position:absolute;left:709px;top:112px;" width="13" height="11" viewBox="0 0 13 11"><rect x="1" y="1" width="11" height="9" rx="1.5" fill="#f2f2f2" stroke="#4a4f5a" stroke-width="1.2"/><rect x="3.5" y="3.5" width="6" height="3" fill="#fff" stroke="#4a4f5a" stroke-width="1.1"/></svg><svg style="position:absolute;left:743px;top:112px;" width="13" height="11" viewBox="0 0 13 11"><path d="M2.5 2l8 7M10.5 2l-8 7" stroke="#4a4f5a" stroke-width="3.4" stroke-linecap="round"/><path d="M2.5 2l8 7M10.5 2l-8 7" stroke="#f2f2f2" stroke-width="1.6" stroke-linecap="round"/></svg><div style="left:777px;top:100px;width:585px;height:222px;background:#d7e3ef;border-top:1px solid #eef3f9;border-left:1px solid #f4f8fc;border-radius:5px 5px 0 0"></div><div style="left:778px;top:101px;width:584px;height:30px;background:linear-gradient(#bccbdb,#d5e1ed);border-radius:5px 5px 0 0"></div><div style="left:784px;top:130px;width:569px;height:184px;background:#000;border-top:2px solid #6a6a6a;border-left:2px solid #6a6a6a;border-right:1px solid #fff;border-bottom:1px solid #fff;box-shadow:-1px -1px 0 #a0a0a0"></div><svg style="position:absolute;left:787px;top:111px;" width="15" height="14" viewBox="0 0 15 14"><rect x="1.5" y="1.5" width="9" height="7" fill="#fff" stroke="#3a8ae8" stroke-dasharray="1.5,.8"/><rect x="4.5" y="5.5" width="9" height="7" fill="#fff" stroke="#3a8ae8" stroke-dasharray="1.5,.8"/><path d="M6 9l2 2 2-2 2 2" stroke="#3a8ae8" fill="none"/><path d="M3 4h3l2 2" stroke="#3a8ae8" fill="none"/></svg><div class="t" style="left:806px;top:110px;height:18px;line-height:18px;font-size:12.4px;color:#9a9aa4;font-weight:normal;transform:scaleX(0.84);transform-origin:0 0">USDJPY,M1</div><div style="left:1253px;top:109px;width:32px;height:18px;border:1px solid #8d9db3;border-radius:3px;background:linear-gradient(#d9e3ee,#c9d6e5)"></div><div style="left:1287px;top:109px;width:32px;height:18px;border:1px solid #8d9db3;border-radius:3px;background:linear-gradient(#d9e3ee,#c9d6e5)"></div><div style="left:1321px;top:109px;width:32px;height:18px;border:1px solid #8d9db3;border-radius:3px;background:linear-gradient(#d9e3ee,#c9d6e5)"></div><svg style="position:absolute;left:1262px;top:116px;" width="13" height="7" viewBox="0 0 13 7"><rect x="1" y="1" width="11" height="5" rx="1.5" fill="#f2f2f2" stroke="#4a4f5a" stroke-width="1.2"/></svg><svg style="position:absolute;left:1296px;top:112px;" width="13" height="11" viewBox="0 0 13 11"><rect x="1" y="1" width="11" height="9" rx="1.5" fill="#f2f2f2" stroke="#4a4f5a" stroke-width="1.2"/><rect x="3.5" y="3.5" width="6" height="3" fill="#fff" stroke="#4a4f5a" stroke-width="1.1"/></svg><svg style="position:absolute;left:1330px;top:112px;" width="13" height="11" viewBox="0 0 13 11"><path d="M2.5 2l8 7M10.5 2l-8 7" stroke="#4a4f5a" stroke-width="3.4" stroke-linecap="round"/><path d="M2.5 2l8 7M10.5 2l-8 7" stroke="#f2f2f2" stroke-width="1.6" stroke-linecap="round"/></svg><div style="left:190px;top:324px;width:585px;height:222px;background:#d7e3ef;border-top:1px solid #eef3f9;border-left:1px solid #f4f8fc;border-radius:5px 5px 0 0"></div><div style="left:191px;top:325px;width:584px;height:30px;background:linear-gradient(#bccbdb,#d5e1ed);border-radius:5px 5px 0 0"></div><div style="left:197px;top:354px;width:569px;height:184px;background:#000;border-top:2px solid #6a6a6a;border-left:2px solid #6a6a6a;border-right:1px solid #fff;border-bottom:1px solid #fff;box-shadow:-1px -1px 0 #a0a0a0"></div><svg style="position:absolute;left:200px;top:335px;" width="15" height="14" viewBox="0 0 15 14"><rect x="1.5" y="1.5" width="9" height="7" fill="#fff" stroke="#3a8ae8" stroke-dasharray="1.5,.8"/><rect x="4.5" y="5.5" width="9" height="7" fill="#fff" stroke="#3a8ae8" stroke-dasharray="1.5,.8"/><path d="M6 9l2 2 2-2 2 2" stroke="#3a8ae8" fill="none"/><path d="M3 4h3l2 2" stroke="#3a8ae8" fill="none"/></svg><div class="t" style="left:219px;top:334px;height:18px;line-height:18px;font-size:12.4px;color:#9a9aa4;font-weight:normal;transform:scaleX(0.84);transform-origin:0 0">GBPUSD,M1</div><div style="left:666px;top:333px;width:32px;height:18px;border:1px solid #8d9db3;border-radius:3px;background:linear-gradient(#d9e3ee,#c9d6e5)"></div><div style="left:700px;top:333px;width:32px;height:18px;border:1px solid #8d9db3;border-radius:3px;background:linear-gradient(#d9e3ee,#c9d6e5)"></div><div style="left:734px;top:333px;width:32px;height:18px;border:1px solid #8d9db3;border-radius:3px;background:linear-gradient(#d9e3ee,#c9d6e5)"></div><svg style="position:absolute;left:675px;top:340px;" width="13" height="7" viewBox="0 0 13 7"><rect x="1" y="1" width="11" height="5" rx="1.5" fill="#f2f2f2" stroke="#4a4f5a" stroke-width="1.2"/></svg><svg style="position:absolute;left:709px;top:336px;" width="13" height="11" viewBox="0 0 13 11"><rect x="1" y="1" width="11" height="9" rx="1.5" fill="#f2f2f2" stroke="#4a4f5a" stroke-width="1.2"/><rect x="3.5" y="3.5" width="6" height="3" fill="#fff" stroke="#4a4f5a" stroke-width="1.1"/></svg><svg style="position:absolute;left:743px;top:336px;" width="13" height="11" viewBox="0 0 13 11"><path d="M2.5 2l8 7M10.5 2l-8 7" stroke="#4a4f5a" stroke-width="3.4" stroke-linecap="round"/><path d="M2.5 2l8 7M10.5 2l-8 7" stroke="#f2f2f2" stroke-width="1.6" stroke-linecap="round"/></svg><div style="left:777px;top:324px;width:585px;height:222px;background:#d7e3ef;border-top:1px solid #eef3f9;border-left:1px solid #f4f8fc;border-radius:5px 5px 0 0"></div><div style="left:778px;top:325px;width:584px;height:30px;background:linear-gradient(#bccbdb,#d5e1ed);border-radius:5px 5px 0 0"></div><div style="left:784px;top:354px;width:569px;height:184px;background:#000;border-top:2px solid #6a6a6a;border-left:2px solid #6a6a6a;border-right:1px solid #fff;border-bottom:1px solid #fff;box-shadow:-1px -1px 0 #a0a0a0"></div><svg style="position:absolute;left:787px;top:335px;" width="15" height="14" viewBox="0 0 15 14"><rect x="1.5" y="1.5" width="9" height="7" fill="#fff" stroke="#3a8ae8" stroke-dasharray="1.5,.8"/><rect x="4.5" y="5.5" width="9" height="7" fill="#fff" stroke="#3a8ae8" stroke-dasharray="1.5,.8"/><path d="M6 9l2 2 2-2 2 2" stroke="#3a8ae8" fill="none"/><path d="M3 4h3l2 2" stroke="#3a8ae8" fill="none"/></svg><div class="t" style="left:806px;top:334px;height:18px;line-height:18px;font-size:12.4px;color:#9a9aa4;font-weight:normal;transform:scaleX(0.84);transform-origin:0 0">AUDUSD,M1</div><div style="left:1253px;top:333px;width:32px;height:18px;border:1px solid #8d9db3;border-radius:3px;background:linear-gradient(#d9e3ee,#c9d6e5)"></div><div style="left:1287px;top:333px;width:32px;height:18px;border:1px solid #8d9db3;border-radius:3px;background:linear-gradient(#d9e3ee,#c9d6e5)"></div><div style="left:1321px;top:333px;width:32px;height:18px;border:1px solid #8d9db3;border-radius:3px;background:linear-gradient(#d9e3ee,#c9d6e5)"></div><svg style="position:absolute;left:1262px;top:340px;" width="13" height="7" viewBox="0 0 13 7"><rect x="1" y="1" width="11" height="5" rx="1.5" fill="#f2f2f2" stroke="#4a4f5a" stroke-width="1.2"/></svg><svg style="position:absolute;left:1296px;top:336px;" width="13" height="11" viewBox="0 0 13 11"><rect x="1" y="1" width="11" height="9" rx="1.5" fill="#f2f2f2" stroke="#4a4f5a" stroke-width="1.2"/><rect x="3.5" y="3.5" width="6" height="3" fill="#fff" stroke="#4a4f5a" stroke-width="1.1"/></svg><svg style="position:absolute;left:1330px;top:336px;" width="13" height="11" viewBox="0 0 13 11"><path d="M2.5 2l8 7M10.5 2l-8 7" stroke="#4a4f5a" stroke-width="3.4" stroke-linecap="round"/><path d="M2.5 2l8 7M10.5 2l-8 7" stroke="#f2f2f2" stroke-width="1.6" stroke-linecap="round"/></svg><svg style="position:absolute;left:199px;top:132px" width="567" height="181" viewBox="199 132 567 181"><defs><clipPath id="cp190_100"><rect x="203" y="135" width="517" height="156"/></clipPath></defs><rect x="199" y="132" width="567" height="181" fill="#000"/><line x1="234.5" y1="135" x2="234.5" y2="292" stroke="#9aa7b5" stroke-width="1" stroke-dasharray="3,3"/><line x1="266.5" y1="135" x2="266.5" y2="292" stroke="#9aa7b5" stroke-width="1" stroke-dasharray="3,3"/><line x1="298.5" y1="135" x2="298.5" y2="292" stroke="#9aa7b5" stroke-width="1" stroke-dasharray="3,3"/><line x1="330.5" y1="135" x2="330.5" y2="292" stroke="#9aa7b5" stroke-width="1" stroke-dasharray="3,3"/><line x1="362.5" y1="135" x2="362.5" y2="292" stroke="#9aa7b5" stroke-width="1" stroke-dasharray="3,3"/><line x1="394.5" y1="135" x2="394.5" y2="292" stroke="#9aa7b5" stroke-width="1" stroke-dasharray="3,3"/><line x1="426.5" y1="135" x2="426.5" y2="292" stroke="#9aa7b5" stroke-width="1" stroke-dasharray="3,3"/><line x1="458.5" y1="135" x2="458.5" y2="292" stroke="#9aa7b5" stroke-width="1" stroke-dasharray="3,3"/><line x1="490.5" y1="135" x2="490.5" y2="292" stroke="#9aa7b5" stroke-width="1" stroke-dasharray="3,3"/><line x1="522.5" y1="135" x2="522.5" y2="292" stroke="#9aa7b5" stroke-width="1" stroke-dasharray="3,3"/><line x1="554.5" y1="135" x2="554.5" y2="292" stroke="#9aa7b5" stroke-width="1" stroke-dasharray="3,3"/><line x1="586.5" y1="135" x2="586.5" y2="292" stroke="#9aa7b5" stroke-width="1" stroke-dasharray="3,3"/><line x1="618.5" y1="135" x2="618.5" y2="292" stroke="#9aa7b5" stroke-width="1" stroke-dasharray="3,3"/><line x1="650.5" y1="135" x2="650.5" y2="292" stroke="#9aa7b5" stroke-width="1" stroke-dasharray="3,3"/><line x1="682.5" y1="135" x2="682.5" y2="292" stroke="#9aa7b5" stroke-width="1" stroke-dasharray="3,3"/><line x1="714.5" y1="135" x2="714.5" y2="292" stroke="#9aa7b5" stroke-width="1" stroke-dasharray="3,3"/><line x1="203" y1="154.5" x2="720" y2="154.5" stroke="#9aa7b5" stroke-dasharray="3,3"/><line x1="203" y1="188.5" x2="720" y2="188.5" stroke="#9aa7b5" stroke-dasharray="3,3"/><line x1="203" y1="254.5" x2="720" y2="254.5" stroke="#9aa7b5" stroke-dasharray="3,3"/><line x1="203" y1="288.5" x2="720" y2="288.5" stroke="#9aa7b5" stroke-dasharray="3,3"/><line x1="203" y1="222.5" x2="720" y2="222.5" stroke="#8a98a8"/><g clip-path="url(#cp190_100)"><line x1="202.5" y1="197" x2="202.5" y2="208" stroke="#00ff00"/><rect x="200.5" y="197.5" width="4" height="10" fill="#fff" stroke="#00ff00"/><line x1="210.5" y1="205" x2="210.5" y2="229" stroke="#00ff00"/><rect x="208.5" y="205.5" width="4" height="22" fill="#fff" stroke="#00ff00"/><line x1="218.5" y1="222" x2="218.5" y2="232" stroke="#00ff00"/><rect x="216.5" y="227.5" width="4" height="2" fill="#fff" stroke="#00ff00"/><line x1="226.5" y1="228" x2="226.5" y2="256" stroke="#00ff00"/><rect x="224.5" y="228.5" width="4" height="13" fill="#fff" stroke="#00ff00"/><line x1="234.5" y1="233" x2="234.5" y2="257" stroke="#00ff00"/><rect x="232.5" y="241.5" width="4" height="3" fill="#fff" stroke="#00ff00"/><line x1="242.5" y1="223" x2="242.5" y2="244" stroke="#00ff00"/><rect x="240.5" y="232.5" width="4" height="11" fill="#000" stroke="#00ff00"/><line x1="250.5" y1="219" x2="250.5" y2="239" stroke="#00ff00"/><rect x="248.5" y="227.5" width="4" height="4" fill="#000" stroke="#00ff00"/><line x1="258.5" y1="200" x2="258.5" y2="227" stroke="#00ff00"/><rect x="256.5" y="215.5" width="4" height="11" fill="#000" stroke="#00ff00"/><line x1="266.5" y1="202" x2="266.5" y2="227" stroke="#00ff00"/><rect x="264.5" y="214.5" width="4" height="6" fill="#fff" stroke="#00ff00"/><line x1="274.5" y1="211" x2="274.5" y2="235" stroke="#00ff00"/><rect x="272.5" y="211.5" width="4" height="9" fill="#000" stroke="#00ff00"/><line x1="282.5" y1="207" x2="282.5" y2="218" stroke="#00ff00"/><rect x="280.5" y="212.5" width="4" height="5" fill="#fff" stroke="#00ff00"/><line x1="290.5" y1="216" x2="290.5" y2="239" stroke="#00ff00"/><rect x="288.5" y="218.5" width="4" height="11" fill="#fff" stroke="#00ff00"/><line x1="298.5" y1="230" x2="298.5" y2="247" stroke="#00ff00"/><rect x="296.5" y="232.5" width="4" height="14" fill="#fff" stroke="#00ff00"/><line x1="306.5" y1="244" x2="306.5" y2="253" stroke="#00ff00"/><rect x="304.5" y="245.5" width="4" height="2" fill="#fff" stroke="#00ff00"/><line x1="314.5" y1="234" x2="314.5" y2="252" stroke="#00ff00"/><rect x="312.5" y="244.5" width="4" height="4" fill="#fff" stroke="#00ff00"/><line x1="322.5" y1="248" x2="322.5" y2="276" stroke="#00ff00"/><rect x="320.5" y="251.5" width="4" height="18" fill="#fff" stroke="#00ff00"/><line x1="330.5" y1="265" x2="330.5" y2="289" stroke="#00ff00"/><rect x="328.5" y="265.5" width="4" height="17" fill="#fff" stroke="#00ff00"/><line x1="338.5" y1="257" x2="338.5" y2="285" stroke="#00ff00"/><rect x="336.5" y="265.5" width="4" height="19" fill="#000" stroke="#00ff00"/><line x1="346.5" y1="249" x2="346.5" y2="270" stroke="#00ff00"/><rect x="344.5" y="249.5" width="4" height="11" fill="#000" stroke="#00ff00"/><line x1="354.5" y1="249" x2="354.5" y2="270" stroke="#00ff00"/><rect x="352.5" y="249.5" width="4" height="11" fill="#fff" stroke="#00ff00"/><line x1="362.5" y1="255" x2="362.5" y2="267" stroke="#00ff00"/><rect x="360.5" y="260.5" width="4" height="5" fill="#fff" stroke="#00ff00"/><line x1="370.5" y1="258" x2="370.5" y2="276" stroke="#00ff00"/><rect x="368.5" y="264.5" width="4" height="2" fill="#fff" stroke="#00ff00"/><line x1="378.5" y1="228" x2="378.5" y2="285" stroke="#00ff00"/><rect x="376.5" y="246.5" width="4" height="23" fill="#000" stroke="#00ff00"/><line x1="386.5" y1="242" x2="386.5" y2="261" stroke="#00ff00"/><rect x="384.5" y="242.5" width="4" height="12" fill="#fff" stroke="#00ff00"/><line x1="394.5" y1="252" x2="394.5" y2="270" stroke="#00ff00"/><rect x="392.5" y="252.5" width="4" height="11" fill="#fff" stroke="#00ff00"/><line x1="402.5" y1="260" x2="402.5" y2="275" stroke="#00ff00"/><rect x="400.5" y="264.5" width="4" height="4" fill="#fff" stroke="#00ff00"/><line x1="410.5" y1="245" x2="410.5" y2="269" stroke="#00ff00"/><rect x="408.5" y="246.5" width="4" height="22" fill="#000" stroke="#00ff00"/><line x1="418.5" y1="238" x2="418.5" y2="271" stroke="#00ff00"/><rect x="416.5" y="246.5" width="4" height="8" fill="#fff" stroke="#00ff00"/><line x1="426.5" y1="235" x2="426.5" y2="257" stroke="#00ff00"/><rect x="424.5" y="242.5" width="4" height="13" fill="#000" stroke="#00ff00"/><line x1="434.5" y1="230" x2="434.5" y2="250" stroke="#00ff00"/><rect x="432.5" y="240.5" width="4" height="7" fill="#fff" stroke="#00ff00"/><line x1="442.5" y1="230" x2="442.5" y2="252" stroke="#00ff00"/><rect x="440.5" y="232.5" width="4" height="13" fill="#000" stroke="#00ff00"/><line x1="450.5" y1="232" x2="450.5" y2="244" stroke="#00ff00"/><rect x="448.5" y="232.5" width="4" height="6" fill="#fff" stroke="#00ff00"/><line x1="458.5" y1="203" x2="458.5" y2="240" stroke="#00ff00"/><rect x="456.5" y="210.5" width="4" height="28" fill="#000" stroke="#00ff00"/><line x1="466.5" y1="143" x2="466.5" y2="211" stroke="#00ff00"/><rect x="464.5" y="171.5" width="4" height="39" fill="#000" stroke="#00ff00"/><line x1="474.5" y1="162" x2="474.5" y2="200" stroke="#00ff00"/><rect x="472.5" y="172.5" width="4" height="27" fill="#fff" stroke="#00ff00"/><line x1="482.5" y1="192" x2="482.5" y2="217" stroke="#00ff00"/><rect x="480.5" y="196.5" width="4" height="3" fill="#fff" stroke="#00ff00"/><line x1="490.5" y1="200" x2="490.5" y2="223" stroke="#00ff00"/><rect x="488.5" y="200.5" width="4" height="11" fill="#fff" stroke="#00ff00"/><line x1="498.5" y1="183" x2="498.5" y2="210" stroke="#00ff00"/><rect x="496.5" y="188.5" width="4" height="21" fill="#000" stroke="#00ff00"/><line x1="506.5" y1="179" x2="506.5" y2="201" stroke="#00ff00"/><rect x="504.5" y="187.5" width="4" height="6" fill="#fff" stroke="#00ff00"/><line x1="514.5" y1="189" x2="514.5" y2="218" stroke="#00ff00"/><rect x="512.5" y="192.5" width="4" height="20" fill="#fff" stroke="#00ff00"/><line x1="522.5" y1="204" x2="522.5" y2="217" stroke="#00ff00"/><rect x="520.5" y="208.5" width="4" height="2" fill="#000" stroke="#00ff00"/><line x1="530.5" y1="199" x2="530.5" y2="218" stroke="#00ff00"/><rect x="528.5" y="208.5" width="4" height="1" fill="#fff" stroke="#00ff00"/><line x1="538.5" y1="205" x2="538.5" y2="235" stroke="#00ff00"/><rect x="536.5" y="208.5" width="4" height="24" fill="#fff" stroke="#00ff00"/><line x1="546.5" y1="229" x2="546.5" y2="246" stroke="#00ff00"/><rect x="544.5" y="231.5" width="4" height="4" fill="#fff" stroke="#00ff00"/><line x1="554.5" y1="214" x2="554.5" y2="235" stroke="#00ff00"/><rect x="552.5" y="227.5" width="4" height="7" fill="#000" stroke="#00ff00"/><line x1="562.5" y1="214" x2="562.5" y2="234" stroke="#00ff00"/><rect x="560.5" y="226.5" width="4" height="6" fill="#fff" stroke="#00ff00"/><line x1="570.5" y1="216" x2="570.5" y2="240" stroke="#00ff00"/><line x1="568" y1="232.5" x2="573" y2="232.5" stroke="#00ff00"/><line x1="578.5" y1="219" x2="578.5" y2="233" stroke="#00ff00"/><rect x="576.5" y="228.5" width="4" height="4" fill="#000" stroke="#00ff00"/><line x1="586.5" y1="207" x2="586.5" y2="233" stroke="#00ff00"/><rect x="584.5" y="210.5" width="4" height="17" fill="#000" stroke="#00ff00"/><line x1="594.5" y1="211" x2="594.5" y2="249" stroke="#00ff00"/><rect x="592.5" y="211.5" width="4" height="37" fill="#fff" stroke="#00ff00"/><line x1="602.5" y1="239" x2="602.5" y2="251" stroke="#00ff00"/><rect x="600.5" y="242.5" width="4" height="6" fill="#000" stroke="#00ff00"/><line x1="610.5" y1="237" x2="610.5" y2="249" stroke="#00ff00"/><rect x="608.5" y="242.5" width="4" height="1" fill="#fff" stroke="#00ff00"/><line x1="618.5" y1="213" x2="618.5" y2="244" stroke="#00ff00"/><rect x="616.5" y="216.5" width="4" height="27" fill="#000" stroke="#00ff00"/><line x1="626.5" y1="217" x2="626.5" y2="247" stroke="#00ff00"/><rect x="624.5" y="217.5" width="4" height="25" fill="#fff" stroke="#00ff00"/><line x1="634.5" y1="227" x2="634.5" y2="248" stroke="#00ff00"/><rect x="632.5" y="228.5" width="4" height="14" fill="#000" stroke="#00ff00"/><line x1="642.5" y1="229" x2="642.5" y2="245" stroke="#00ff00"/><rect x="640.5" y="229.5" width="4" height="2" fill="#fff" stroke="#00ff00"/><line x1="650.5" y1="220" x2="650.5" y2="245" stroke="#00ff00"/><rect x="648.5" y="231.5" width="4" height="11" fill="#fff" stroke="#00ff00"/><line x1="658.5" y1="236" x2="658.5" y2="252" stroke="#00ff00"/><rect x="656.5" y="238.5" width="4" height="4" fill="#000" stroke="#00ff00"/><line x1="666.5" y1="238" x2="666.5" y2="251" stroke="#00ff00"/><rect x="664.5" y="240.5" width="4" height="2" fill="#fff" stroke="#00ff00"/><line x1="674.5" y1="239" x2="674.5" y2="252" stroke="#00ff00"/><rect x="672.5" y="242.5" width="4" height="4" fill="#fff" stroke="#00ff00"/><line x1="682.5" y1="233" x2="682.5" y2="248" stroke="#00ff00"/><rect x="680.5" y="234.5" width="4" height="13" fill="#000" stroke="#00ff00"/><line x1="690.5" y1="234" x2="690.5" y2="255" stroke="#00ff00"/><rect x="688.5" y="234.5" width="4" height="10" fill="#fff" stroke="#00ff00"/><line x1="698.5" y1="222" x2="698.5" y2="251" stroke="#00ff00"/><rect x="696.5" y="222.5" width="4" height="24" fill="#000" stroke="#00ff00"/><polyline points="200.0,176.4 243.0,208.1 256.6,215.6 268.0,220.6 290.6,221.7 297.4,222.9 308.7,229.7 320.0,233.0 342.6,239.9 361.9,243.3 376.6,248.9 392.5,253.4 403.8,259.1 419.7,260.2 433.2,256.8 450.0,252.3 458.0,250.0 469.4,241.0 489.8,232.0 505.7,221.7 521.5,215.0 535.0,210.4 542.0,209.3 557.8,208.6 570.0,209.7 582.7,215.0 594.0,218.4 605.3,222.5 616.7,226.3 634.8,229.7 650.7,232.0 666.5,234.7 680.0,235.4 691.4,236.5 698.0,237.6" fill="none" stroke="#ff0000" stroke-width="1" shape-rendering="crispEdges"/></g><rect x="202.5" y="134.5" width="518" height="158" fill="none" stroke="#fff"/><line x1="202.5" y1="293" x2="202.5" y2="297" stroke="#fff" stroke-width="1"/><text x="202" y="305" fill="#fff" stroke="#fff" stroke-width="0.25" font-family="Liberation Sans" font-size="9.3" letter-spacing="-0.05" style="white-space:pre" text-anchor="start" >12 Oct 2022</text><line x1="266.5" y1="293" x2="266.5" y2="297" stroke="#fff" stroke-width="1"/><text x="266" y="305" fill="#fff" stroke="#fff" stroke-width="0.25" font-family="Liberation Sans" font-size="9.3" letter-spacing="-0.05" style="white-space:pre" text-anchor="start" >12 Oct 12:04</text><line x1="330.5" y1="293" x2="330.5" y2="297" stroke="#fff" stroke-width="1"/><text x="330" y="305" fill="#fff" stroke="#fff" stroke-width="0.25" font-family="Liberation Sans" font-size="9.3" letter-spacing="-0.05" style="white-space:pre" text-anchor="start" >12 Oct 12:12</text><line x1="394.5" y1="293" x2="394.5" y2="297" stroke="#fff" stroke-width="1"/><text x="394" y="305" fill="#fff" stroke="#fff" stroke-width="0.25" font-family="Liberation Sans" font-size="9.3" letter-spacing="-0.05" style="white-space:pre" text-anchor="start" >12 Oct 12:20</text><line x1="458.5" y1="293" x2="458.5" y2="297" stroke="#fff" stroke-width="1"/><text x="458" y="305" fill="#fff" stroke="#fff" stroke-width="0.25" font-family="Liberation Sans" font-size="9.3" letter-spacing="-0.05" style="white-space:pre" text-anchor="start" >12 Oct 12:28</text><line x1="522.5" y1="293" x2="522.5" y2="297" stroke="#fff" stroke-width="1"/><text x="522" y="305" fill="#fff" stroke="#fff" stroke-width="0.25" font-family="Liberation Sans" font-size="9.3" letter-spacing="-0.05" style="white-space:pre" text-anchor="start" >12 Oct 12:36</text><line x1="586.5" y1="293" x2="586.5" y2="297" stroke="#fff" stroke-width="1"/><text x="586" y="305" fill="#fff" stroke="#fff" stroke-width="0.25" font-family="Liberation Sans" font-size="9.3" letter-spacing="-0.05" style="white-space:pre" text-anchor="start" >12 Oct 12:44</text><line x1="650.5" y1="293" x2="650.5" y2="297" stroke="#fff" stroke-width="1"/><text x="650" y="305" fill="#fff" stroke="#fff" stroke-width="0.25" font-family="Liberation Sans" font-size="9.3" letter-spacing="-0.05" style="white-space:pre" text-anchor="start" >12 Oct 12:52</text><line x1="721" y1="154.5" x2="724" y2="154.5" stroke="#fff"/><text x="726" y="158" fill="#fff" stroke="#fff" stroke-width="0.25" font-family="Liberation Sans" font-size="9.3" letter-spacing="-0.05" style="white-space:pre" text-anchor="start" >0.97155</text><line x1="721" y1="188.5" x2="724" y2="188.5" stroke="#fff"/><text x="726" y="192" fill="#fff" stroke="#fff" stroke-width="0.25" font-family="Liberation Sans" font-size="9.3" letter-spacing="-0.05" style="white-space:pre" text-anchor="start" >0.97110</text><line x1="721" y1="254.5" x2="724" y2="254.5" stroke="#fff"/><text x="726" y="258" fill="#fff" stroke="#fff" stroke-width="0.25" font-family="Liberation Sans" font-size="9.3" letter-spacing="-0.05" style="white-space:pre" text-anchor="start" >0.97020</text><line x1="721" y1="288.5" x2="724" y2="288.5" stroke="#fff"/><text x="726" y="292" fill="#fff" stroke="#fff" stroke-width="0.25" font-family="Liberation Sans" font-size="9.3" letter-spacing="-0.05" style="white-space:pre" text-anchor="start" >0.96975</text><rect x="722" y="217" width="41" height="11" fill="#fff"/><text x="726" y="226" fill="#000" stroke="#000" stroke-width="0.25" font-family="Liberation Sans" font-size="9.3" letter-spacing="-0.05" style="white-space:pre" text-anchor="start" >0.97063</text><path d="M205 140h7l-3.5 4z" fill="#fff"/><text x="217" y="146" fill="#fff" stroke="#fff" stroke-width="0.25" font-family="Liberation Sans" font-size="9.3" letter-spacing="-0.05" style="white-space:pre" text-anchor="start" >EURUSD,M1  0.97032 0.97064 0.97027 0.97063</text></svg><svg style="position:absolute;left:786px;top:132px" width="567" height="181" viewBox="786 132 567 181"><defs><clipPath id="cp777_100"><rect x="790" y="135" width="517" height="156"/></clipPath></defs><rect x="786" y="132" width="567" height="181" fill="#000"/><line x1="821.5" y1="135" x2="821.5" y2="292" stroke="#9aa7b5" stroke-width="1" stroke-dasharray="3,3"/><line x1="853.5" y1="135" x2="853.5" y2="292" stroke="#9aa7b5" stroke-width="1" stroke-dasharray="3,3"/><line x1="885.5" y1="135" x2="885.5" y2="292" stroke="#9aa7b5" stroke-width="1" stroke-dasharray="3,3"/><line x1="917.5" y1="135" x2="917.5" y2="292" stroke="#9aa7b5" stroke-width="1" stroke-dasharray="3,3"/><line x1="949.5" y1="135" x2="949.5" y2="292" stroke="#9aa7b5" stroke-width="1" stroke-dasharray="3,3"/><line x1="981.5" y1="135" x2="981.5" y2="292" stroke="#9aa7b5" stroke-width="1" stroke-dasharray="3,3"/><line x1="1013.5" y1="135" x2="1013.5" y2="292" stroke="#9aa7b5" stroke-width="1" stroke-dasharray="3,3"/><line x1="1045.5" y1="135" x2="1045.5" y2="292" stroke="#9aa7b5" stroke-width="1" stroke-dasharray="3,3"/><line x1="1077.5" y1="135" x2="1077.5" y2="292" stroke="#9aa7b5" stroke-width="1" stroke-dasharray="3,3"/><line x1="1109.5" y1="135" x2="1109.5" y2="292" stroke="#9aa7b5" stroke-width="1" stroke-dasharray="3,3"/><line x1="1141.5" y1="135" x2="1141.5" y2="292" stroke="#9aa7b5" stroke-width="1" stroke-dasharray="3,3"/><line x1="1173.5" y1="135" x2="1173.5" y2="292" stroke="#9aa7b5" stroke-width="1" stroke-dasharray="3,3"/><line x1="1205.5" y1="135" x2="1205.5" y2="292" stroke="#9aa7b5" stroke-width="1" stroke-dasharray="3,3"/><line x1="1237.5" y1="135" x2="1237.5" y2="292" stroke="#9aa7b5" stroke-width="1" stroke-dasharray="3,3"/><line x1="1269.5" y1="135" x2="1269.5" y2="292" stroke="#9aa7b5" stroke-width="1" stroke-dasharray="3,3"/><line x1="1301.5" y1="135" x2="1301.5" y2="292" stroke="#9aa7b5" stroke-width="1" stroke-dasharray="3,3"/><line x1="790" y1="149.5" x2="1307" y2="149.5" stroke="#9aa7b5" stroke-dasharray="3,3"/><line x1="790" y1="183.5" x2="1307" y2="183.5" stroke="#9aa7b5" stroke-dasharray="3,3"/><line x1="790" y1="218.5" x2="1307" y2="218.5" stroke="#9aa7b5" stroke-dasharray="3,3"/><line x1="790" y1="253.5" x2="1307" y2="253.5" stroke="#9aa7b5" stroke-dasharray="3,3"/><line x1="790" y1="287.5" x2="1307" y2="287.5" stroke="#9aa7b5" stroke-dasharray="3,3"/><line x1="790" y1="194.5" x2="1307" y2="194.5" stroke="#8a98a8"/><g clip-path="url(#cp777_100)"><line x1="789.5" y1="259" x2="789.5" y2="279" stroke="#00ff00"/><rect x="787.5" y="259.5" width="4" height="10" fill="#000" stroke="#00ff00"/><line x1="797.5" y1="248" x2="797.5" y2="263" stroke="#00ff00"/><rect x="795.5" y="251.5" width="4" height="8" fill="#000" stroke="#00ff00"/><line x1="805.5" y1="246" x2="805.5" y2="253" stroke="#00ff00"/><rect x="803.5" y="250.5" width="4" height="2" fill="#fff" stroke="#00ff00"/><line x1="813.5" y1="247" x2="813.5" y2="274" stroke="#00ff00"/><rect x="811.5" y="252.5" width="4" height="16" fill="#fff" stroke="#00ff00"/><line x1="821.5" y1="236" x2="821.5" y2="270" stroke="#00ff00"/><rect x="819.5" y="240.5" width="4" height="29" fill="#000" stroke="#00ff00"/><line x1="829.5" y1="232" x2="829.5" y2="244" stroke="#00ff00"/><rect x="827.5" y="240.5" width="4" height="3" fill="#fff" stroke="#00ff00"/><line x1="837.5" y1="220" x2="837.5" y2="247" stroke="#00ff00"/><rect x="835.5" y="233.5" width="4" height="9" fill="#000" stroke="#00ff00"/><line x1="845.5" y1="232" x2="845.5" y2="249" stroke="#00ff00"/><rect x="843.5" y="234.5" width="4" height="13" fill="#fff" stroke="#00ff00"/><line x1="853.5" y1="225" x2="853.5" y2="252" stroke="#00ff00"/><rect x="851.5" y="229.5" width="4" height="18" fill="#000" stroke="#00ff00"/><line x1="861.5" y1="204" x2="861.5" y2="229" stroke="#00ff00"/><rect x="859.5" y="214.5" width="4" height="14" fill="#000" stroke="#00ff00"/><line x1="869.5" y1="213" x2="869.5" y2="223" stroke="#00ff00"/><rect x="867.5" y="217.5" width="4" height="1" fill="#fff" stroke="#00ff00"/><line x1="877.5" y1="205" x2="877.5" y2="222" stroke="#00ff00"/><rect x="875.5" y="213.5" width="4" height="5" fill="#000" stroke="#00ff00"/><line x1="885.5" y1="153" x2="885.5" y2="214" stroke="#00ff00"/><rect x="883.5" y="155.5" width="4" height="58" fill="#000" stroke="#00ff00"/><line x1="893.5" y1="144" x2="893.5" y2="203" stroke="#00ff00"/><rect x="891.5" y="157.5" width="4" height="30" fill="#fff" stroke="#00ff00"/><line x1="901.5" y1="182" x2="901.5" y2="193" stroke="#00ff00"/><rect x="899.5" y="187.5" width="4" height="2" fill="#fff" stroke="#00ff00"/><line x1="909.5" y1="166" x2="909.5" y2="195" stroke="#00ff00"/><rect x="907.5" y="166.5" width="4" height="25" fill="#000" stroke="#00ff00"/><line x1="917.5" y1="157" x2="917.5" y2="173" stroke="#00ff00"/><rect x="915.5" y="168.5" width="4" height="2" fill="#fff" stroke="#00ff00"/><line x1="925.5" y1="160" x2="925.5" y2="173" stroke="#00ff00"/><rect x="923.5" y="166.5" width="4" height="2" fill="#000" stroke="#00ff00"/><line x1="933.5" y1="145" x2="933.5" y2="169" stroke="#00ff00"/><rect x="931.5" y="164.5" width="4" height="2" fill="#fff" stroke="#00ff00"/><line x1="941.5" y1="164" x2="941.5" y2="195" stroke="#00ff00"/><rect x="939.5" y="164.5" width="4" height="30" fill="#fff" stroke="#00ff00"/><line x1="949.5" y1="183" x2="949.5" y2="203" stroke="#00ff00"/><rect x="947.5" y="188.5" width="4" height="7" fill="#000" stroke="#00ff00"/><line x1="957.5" y1="174" x2="957.5" y2="193" stroke="#00ff00"/><rect x="955.5" y="174.5" width="4" height="16" fill="#000" stroke="#00ff00"/><line x1="965.5" y1="164" x2="965.5" y2="184" stroke="#00ff00"/><rect x="963.5" y="168.5" width="4" height="8" fill="#000" stroke="#00ff00"/><line x1="973.5" y1="170" x2="973.5" y2="185" stroke="#00ff00"/><rect x="971.5" y="170.5" width="4" height="11" fill="#fff" stroke="#00ff00"/><line x1="981.5" y1="174" x2="981.5" y2="182" stroke="#00ff00"/><rect x="979.5" y="174.5" width="4" height="7" fill="#000" stroke="#00ff00"/><line x1="989.5" y1="161" x2="989.5" y2="179" stroke="#00ff00"/><rect x="987.5" y="164.5" width="4" height="10" fill="#000" stroke="#00ff00"/><line x1="997.5" y1="164" x2="997.5" y2="181" stroke="#00ff00"/><rect x="995.5" y="164.5" width="4" height="15" fill="#fff" stroke="#00ff00"/><line x1="1005.5" y1="178" x2="1005.5" y2="199" stroke="#00ff00"/><rect x="1003.5" y="178.5" width="4" height="18" fill="#fff" stroke="#00ff00"/><line x1="1013.5" y1="193" x2="1013.5" y2="227" stroke="#00ff00"/><rect x="1011.5" y="196.5" width="4" height="25" fill="#fff" stroke="#00ff00"/><line x1="1021.5" y1="214" x2="1021.5" y2="223" stroke="#00ff00"/><rect x="1019.5" y="214.5" width="4" height="8" fill="#000" stroke="#00ff00"/><line x1="1029.5" y1="207" x2="1029.5" y2="217" stroke="#00ff00"/><rect x="1027.5" y="213.5" width="4" height="1" fill="#fff" stroke="#00ff00"/><line x1="1037.5" y1="210" x2="1037.5" y2="234" stroke="#00ff00"/><rect x="1035.5" y="213.5" width="4" height="20" fill="#fff" stroke="#00ff00"/><line x1="1045.5" y1="235" x2="1045.5" y2="251" stroke="#00ff00"/><rect x="1043.5" y="235.5" width="4" height="6" fill="#fff" stroke="#00ff00"/><line x1="1053.5" y1="232" x2="1053.5" y2="269" stroke="#00ff00"/><rect x="1051.5" y="244.5" width="4" height="24" fill="#fff" stroke="#00ff00"/><line x1="1061.5" y1="258" x2="1061.5" y2="287" stroke="#00ff00"/><rect x="1059.5" y="265.5" width="4" height="5" fill="#fff" stroke="#00ff00"/><line x1="1069.5" y1="246" x2="1069.5" y2="268" stroke="#00ff00"/><rect x="1067.5" y="260.5" width="4" height="7" fill="#000" stroke="#00ff00"/><line x1="1077.5" y1="230" x2="1077.5" y2="266" stroke="#00ff00"/><rect x="1075.5" y="232.5" width="4" height="33" fill="#000" stroke="#00ff00"/><line x1="1085.5" y1="232" x2="1085.5" y2="249" stroke="#00ff00"/><rect x="1083.5" y="232.5" width="4" height="8" fill="#fff" stroke="#00ff00"/><line x1="1093.5" y1="222" x2="1093.5" y2="244" stroke="#00ff00"/><rect x="1091.5" y="239.5" width="4" height="1" fill="#fff" stroke="#00ff00"/><line x1="1101.5" y1="213" x2="1101.5" y2="241" stroke="#00ff00"/><rect x="1099.5" y="222.5" width="4" height="18" fill="#000" stroke="#00ff00"/><line x1="1109.5" y1="196" x2="1109.5" y2="219" stroke="#00ff00"/><rect x="1107.5" y="199.5" width="4" height="18" fill="#000" stroke="#00ff00"/><line x1="1117.5" y1="182" x2="1117.5" y2="205" stroke="#00ff00"/><rect x="1115.5" y="185.5" width="4" height="13" fill="#000" stroke="#00ff00"/><line x1="1125.5" y1="157" x2="1125.5" y2="192" stroke="#00ff00"/><rect x="1123.5" y="168.5" width="4" height="16" fill="#000" stroke="#00ff00"/><line x1="1133.5" y1="163" x2="1133.5" y2="189" stroke="#00ff00"/><rect x="1131.5" y="166.5" width="4" height="19" fill="#fff" stroke="#00ff00"/><line x1="1141.5" y1="179" x2="1141.5" y2="194" stroke="#00ff00"/><rect x="1139.5" y="184.5" width="4" height="9" fill="#fff" stroke="#00ff00"/><line x1="1149.5" y1="179" x2="1149.5" y2="199" stroke="#00ff00"/><rect x="1147.5" y="179.5" width="4" height="14" fill="#000" stroke="#00ff00"/><line x1="1157.5" y1="168" x2="1157.5" y2="194" stroke="#00ff00"/><rect x="1155.5" y="174.5" width="4" height="6" fill="#000" stroke="#00ff00"/><line x1="1165.5" y1="168" x2="1165.5" y2="180" stroke="#00ff00"/><rect x="1163.5" y="173.5" width="4" height="1" fill="#fff" stroke="#00ff00"/><line x1="1173.5" y1="165" x2="1173.5" y2="185" stroke="#00ff00"/><rect x="1171.5" y="174.5" width="4" height="1" fill="#fff" stroke="#00ff00"/><line x1="1181.5" y1="146" x2="1181.5" y2="176" stroke="#00ff00"/><rect x="1179.5" y="146.5" width="4" height="29" fill="#000" stroke="#00ff00"/><line x1="1189.5" y1="145" x2="1189.5" y2="172" stroke="#00ff00"/><rect x="1187.5" y="146.5" width="4" height="22" fill="#fff" stroke="#00ff00"/><line x1="1197.5" y1="170" x2="1197.5" y2="189" stroke="#00ff00"/><rect x="1195.5" y="170.5" width="4" height="12" fill="#fff" stroke="#00ff00"/><line x1="1205.5" y1="176" x2="1205.5" y2="194" stroke="#00ff00"/><rect x="1203.5" y="183.5" width="4" height="1" fill="#fff" stroke="#00ff00"/><line x1="1213.5" y1="168" x2="1213.5" y2="195" stroke="#00ff00"/><rect x="1211.5" y="173.5" width="4" height="10" fill="#000" stroke="#00ff00"/><line x1="1221.5" y1="168" x2="1221.5" y2="186" stroke="#00ff00"/><rect x="1219.5" y="172.5" width="4" height="5" fill="#fff" stroke="#00ff00"/><line x1="1229.5" y1="163" x2="1229.5" y2="180" stroke="#00ff00"/><rect x="1227.5" y="176.5" width="4" height="3" fill="#000" stroke="#00ff00"/><line x1="1237.5" y1="168" x2="1237.5" y2="180" stroke="#00ff00"/><rect x="1235.5" y="174.5" width="4" height="5" fill="#000" stroke="#00ff00"/><line x1="1245.5" y1="163" x2="1245.5" y2="181" stroke="#00ff00"/><rect x="1243.5" y="174.5" width="4" height="1" fill="#fff" stroke="#00ff00"/><line x1="1253.5" y1="158" x2="1253.5" y2="176" stroke="#00ff00"/><rect x="1251.5" y="172.5" width="4" height="2" fill="#000" stroke="#00ff00"/><line x1="1261.5" y1="167" x2="1261.5" y2="188" stroke="#00ff00"/><rect x="1259.5" y="175.5" width="4" height="5" fill="#fff" stroke="#00ff00"/><line x1="1269.5" y1="175" x2="1269.5" y2="195" stroke="#00ff00"/><rect x="1267.5" y="180.5" width="4" height="14" fill="#fff" stroke="#00ff00"/><line x1="1277.5" y1="182" x2="1277.5" y2="195" stroke="#00ff00"/><rect x="1275.5" y="192.5" width="4" height="2" fill="#fff" stroke="#00ff00"/><line x1="1285.5" y1="176" x2="1285.5" y2="195" stroke="#00ff00"/><rect x="1283.5" y="191.5" width="4" height="3" fill="#fff" stroke="#00ff00"/><polyline points="787.0,278.0 805.4,270.0 830.3,260.2 850.7,253.4 875.6,241.0 891.5,225.1 915.0,212.7 932.2,199.1 966.2,182.5 979.7,179.4 989.3,174.2 997.9,176.4 1005.8,176.4 1025.0,183.2 1045.4,195.7 1070.3,213.8 1093.0,226.3 1108.8,232.4 1120.1,230.8 1131.5,226.3 1145.0,221.8 1158.6,215.0 1170.0,204.8 1182.4,192.3 1194.9,185.5 1206.2,181.7 1217.5,176.5 1235.7,175.3 1253.8,173.7 1269.7,175.3 1285.5,177.6" fill="none" stroke="#ff0000" stroke-width="1" shape-rendering="crispEdges"/></g><rect x="789.5" y="134.5" width="518" height="158" fill="none" stroke="#fff"/><line x1="789.5" y1="293" x2="789.5" y2="297" stroke="#fff" stroke-width="1"/><text x="789" y="305" fill="#fff" stroke="#fff" stroke-width="0.25" font-family="Liberation Sans" font-size="9.3" letter-spacing="-0.05" style="white-space:pre" text-anchor="start" >12 Oct 2022</text><line x1="853.5" y1="293" x2="853.5" y2="297" stroke="#fff" stroke-width="1"/><text x="853" y="305" fill="#fff" stroke="#fff" stroke-width="0.25" font-family="Liberation Sans" font-size="9.3" letter-spacing="-0.05" style="white-space:pre" text-anchor="start" >12 Oct 12:04</text><line x1="917.5" y1="293" x2="917.5" y2="297" stroke="#fff" stroke-width="1"/><text x="917" y="305" fill="#fff" stroke="#fff" stroke-width="0.25" font-family="Liberation Sans" font-size="9.3" letter-spacing="-0.05" style="white-space:pre" text-anchor="start" >12 Oct 12:12</text><line x1="981.5" y1="293" x2="981.5" y2="297" stroke="#fff" stroke-width="1"/><text x="981" y="305" fill="#fff" stroke="#fff" stroke-width="0.25" font-family="Liberation Sans" font-size="9.3" letter-spacing="-0.05" style="white-space:pre" text-anchor="start" >12 Oct 12:20</text><line x1="1045.5" y1="293" x2="1045.5" y2="297" stroke="#fff" stroke-width="1"/><text x="1045" y="305" fill="#fff" stroke="#fff" stroke-width="0.25" font-family="Liberation Sans" font-size="9.3" letter-spacing="-0.05" style="white-space:pre" text-anchor="start" >12 Oct 12:28</text><line x1="1109.5" y1="293" x2="1109.5" y2="297" stroke="#fff" stroke-width="1"/><text x="1109" y="305" fill="#fff" stroke="#fff" stroke-width="0.25" font-family="Liberation Sans" font-size="9.3" letter-spacing="-0.05" style="white-space:pre" text-anchor="start" >12 Oct 12:36</text><line x1="1173.5" y1="293" x2="1173.5" y2="297" stroke="#fff" stroke-width="1"/><text x="1173" y="305" fill="#fff" stroke="#fff" stroke-width="0.25" font-family="Liberation Sans" font-size="9.3" letter-spacing="-0.05" style="white-space:pre" text-anchor="start" >12 Oct 12:44</text><line x1="1237.5" y1="293" x2="1237.5" y2="297" stroke="#fff" stroke-width="1"/><text x="1237" y="305" fill="#fff" stroke="#fff" stroke-width="0.25" font-family="Liberation Sans" font-size="9.3" letter-spacing="-0.05" style="white-space:pre" text-anchor="start" >12 Oct 12:52</text><line x1="1308" y1="150.5" x2="1311" y2="150.5" stroke="#fff"/><text x="1313" y="154" fill="#fff" stroke="#fff" stroke-width="0.25" font-family="Liberation Sans" font-size="9.3" letter-spacing="-0.05" style="white-space:pre" text-anchor="start" >146.425</text><line x1="1308" y1="183.5" x2="1311" y2="183.5" stroke="#fff"/><text x="1313" y="187" fill="#fff" stroke="#fff" stroke-width="0.25" font-family="Liberation Sans" font-size="9.3" letter-spacing="-0.05" style="white-space:pre" text-anchor="start" >146.385</text><line x1="1308" y1="218.5" x2="1311" y2="218.5" stroke="#fff"/><text x="1313" y="222" fill="#fff" stroke="#fff" stroke-width="0.25" font-family="Liberation Sans" font-size="9.3" letter-spacing="-0.05" style="white-space:pre" text-anchor="start" >146.345</text><line x1="1308" y1="253.5" x2="1311" y2="253.5" stroke="#fff"/><text x="1313" y="257" fill="#fff" stroke="#fff" stroke-width="0.25" font-family="Liberation Sans" font-size="9.3" letter-spacing="-0.05" style="white-space:pre" text-anchor="start" >146.305</text><line x1="1308" y1="288.5" x2="1311" y2="288.5" stroke="#fff"/><text x="1313" y="292" fill="#fff" stroke="#fff" stroke-width="0.25" font-family="Liberation Sans" font-size="9.3" letter-spacing="-0.05" style="white-space:pre" text-anchor="start" >146.265</text><rect x="1309" y="189" width="41" height="11" fill="#fff"/><text x="1313" y="198" fill="#000" stroke="#000" stroke-width="0.25" font-family="Liberation Sans" font-size="9.3" letter-spacing="-0.05" style="white-space:pre" text-anchor="start" >146.373</text><path d="M792 140h7l-3.5 4z" fill="#fff"/><text x="804" y="146" fill="#fff" stroke="#fff" stroke-width="0.25" font-family="Liberation Sans" font-size="9.3" letter-spacing="-0.05" style="white-space:pre" text-anchor="start" >USDJPY,M1  146.377 146.393 146.373 146.373</text></svg><svg style="position:absolute;left:199px;top:356px" width="567" height="181" viewBox="199 356 567 181"><defs><clipPath id="cp190_324"><rect x="203" y="359" width="517" height="156"/></clipPath></defs><rect x="199" y="356" width="567" height="181" fill="#000"/><line x1="234.5" y1="359" x2="234.5" y2="463" stroke="#9aa7b5" stroke-width="1" stroke-dasharray="3,3"/><line x1="234.5" y1="466" x2="234.5" y2="516" stroke="#9aa7b5" stroke-width="1" stroke-dasharray="3,3"/><line x1="266.5" y1="359" x2="266.5" y2="463" stroke="#9aa7b5" stroke-width="1" stroke-dasharray="3,3"/><line x1="266.5" y1="466" x2="266.5" y2="516" stroke="#9aa7b5" stroke-width="1" stroke-dasharray="3,3"/><line x1="298.5" y1="359" x2="298.5" y2="463" stroke="#9aa7b5" stroke-width="1" stroke-dasharray="3,3"/><line x1="298.5" y1="466" x2="298.5" y2="516" stroke="#9aa7b5" stroke-width="1" stroke-dasharray="3,3"/><line x1="330.5" y1="359" x2="330.5" y2="463" stroke="#9aa7b5" stroke-width="1" stroke-dasharray="3,3"/><line x1="330.5" y1="466" x2="330.5" y2="516" stroke="#9aa7b5" stroke-width="1" stroke-dasharray="3,3"/><line x1="362.5" y1="359" x2="362.5" y2="463" stroke="#9aa7b5" stroke-width="1" stroke-dasharray="3,3"/><line x1="362.5" y1="466" x2="362.5" y2="516" stroke="#9aa7b5" stroke-width="1" stroke-dasharray="3,3"/><line x1="394.5" y1="359" x2="394.5" y2="463" stroke="#9aa7b5" stroke-width="1" stroke-dasharray="3,3"/><line x1="394.5" y1="466" x2="394.5" y2="516" stroke="#9aa7b5" stroke-width="1" stroke-dasharray="3,3"/><line x1="426.5" y1="359" x2="426.5" y2="463" stroke="#9aa7b5" stroke-width="1" stroke-dasharray="3,3"/><line x1="426.5" y1="466" x2="426.5" y2="516" stroke="#9aa7b5" stroke-width="1" stroke-dasharray="3,3"/><line x1="458.5" y1="359" x2="458.5" y2="463" stroke="#9aa7b5" stroke-width="1" stroke-dasharray="3,3"/><line x1="458.5" y1="466" x2="458.5" y2="516" stroke="#9aa7b5" stroke-width="1" stroke-dasharray="3,3"/><line x1="490.5" y1="359" x2="490.5" y2="463" stroke="#9aa7b5" stroke-width="1" stroke-dasharray="3,3"/><line x1="490.5" y1="466" x2="490.5" y2="516" stroke="#9aa7b5" stroke-width="1" stroke-dasharray="3,3"/><line x1="522.5" y1="359" x2="522.5" y2="463" stroke="#9aa7b5" stroke-width="1" stroke-dasharray="3,3"/><line x1="522.5" y1="466" x2="522.5" y2="516" stroke="#9aa7b5" stroke-width="1" stroke-dasharray="3,3"/><line x1="554.5" y1="359" x2="554.5" y2="463" stroke="#9aa7b5" stroke-width="1" stroke-dasharray="3,3"/><line x1="554.5" y1="466" x2="554.5" y2="516" stroke="#9aa7b5" stroke-width="1" stroke-dasharray="3,3"/><line x1="586.5" y1="359" x2="586.5" y2="463" stroke="#9aa7b5" stroke-width="1" stroke-dasharray="3,3"/><line x1="586.5" y1="466" x2="586.5" y2="516" stroke="#9aa7b5" stroke-width="1" stroke-dasharray="3,3"/><line x1="618.5" y1="359" x2="618.5" y2="463" stroke="#9aa7b5" stroke-width="1" stroke-dasharray="3,3"/><line x1="618.5" y1="466" x2="618.5" y2="516" stroke="#9aa7b5" stroke-width="1" stroke-dasharray="3,3"/><line x1="650.5" y1="359" x2="650.5" y2="463" stroke="#9aa7b5" stroke-width="1" stroke-dasharray="3,3"/><line x1="650.5" y1="466" x2="650.5" y2="516" stroke="#9aa7b5" stroke-width="1" stroke-dasharray="3,3"/><line x1="682.5" y1="359" x2="682.5" y2="463" stroke="#9aa7b5" stroke-width="1" stroke-dasharray="3,3"/><line x1="682.5" y1="466" x2="682.5" y2="516" stroke="#9aa7b5" stroke-width="1" stroke-dasharray="3,3"/><line x1="714.5" y1="359" x2="714.5" y2="463" stroke="#9aa7b5" stroke-width="1" stroke-dasharray="3,3"/><line x1="714.5" y1="466" x2="714.5" y2="516" stroke="#9aa7b5" stroke-width="1" stroke-dasharray="3,3"/><line x1="203" y1="361.5" x2="720" y2="361.5" stroke="#9aa7b5" stroke-dasharray="3,3"/><line x1="203" y1="394.5" x2="720" y2="394.5" stroke="#9aa7b5" stroke-dasharray="3,3"/><line x1="203" y1="427.5" x2="720" y2="427.5" stroke="#9aa7b5" stroke-dasharray="3,3"/><line x1="203" y1="460.5" x2="720" y2="460.5" stroke="#9aa7b5" stroke-dasharray="3,3"/><line x1="203" y1="498.5" x2="720" y2="498.5" stroke="#9aa7b5" stroke-dasharray="3,3"/><line x1="203" y1="377.5" x2="720" y2="377.5" stroke="#8a98a8"/><g clip-path="url(#cp190_324)"><line x1="202.5" y1="448" x2="202.5" y2="454" stroke="#00ff00"/><line x1="201" y1="451.5" x2="202" y2="451.5" stroke="#00ff00"/><line x1="203" y1="451.5" x2="204" y2="451.5" stroke="#00ff00"/><line x1="206.5" y1="447" x2="206.5" y2="454" stroke="#00ff00"/><line x1="205" y1="451.5" x2="206" y2="451.5" stroke="#00ff00"/><line x1="207" y1="452.5" x2="208" y2="452.5" stroke="#00ff00"/><line x1="210.5" y1="449" x2="210.5" y2="454" stroke="#00ff00"/><line x1="209" y1="452.5" x2="210" y2="452.5" stroke="#00ff00"/><line x1="211" y1="450.5" x2="212" y2="450.5" stroke="#00ff00"/><line x1="214.5" y1="447" x2="214.5" y2="453" stroke="#00ff00"/><line x1="213" y1="450.5" x2="214" y2="450.5" stroke="#00ff00"/><line x1="215" y1="451.5" x2="216" y2="451.5" stroke="#00ff00"/><line x1="218.5" y1="449" x2="218.5" y2="454" stroke="#00ff00"/><line x1="217" y1="451.5" x2="218" y2="451.5" stroke="#00ff00"/><line x1="219" y1="452.5" x2="220" y2="452.5" stroke="#00ff00"/><line x1="222.5" y1="451" x2="222.5" y2="459" stroke="#00ff00"/><line x1="221" y1="452.5" x2="222" y2="452.5" stroke="#00ff00"/><line x1="223" y1="454.5" x2="224" y2="454.5" stroke="#00ff00"/><line x1="226.5" y1="449" x2="226.5" y2="456" stroke="#00ff00"/><line x1="225" y1="454.5" x2="226" y2="454.5" stroke="#00ff00"/><line x1="227" y1="453.5" x2="228" y2="453.5" stroke="#00ff00"/><line x1="230.5" y1="449" x2="230.5" y2="455" stroke="#00ff00"/><line x1="229" y1="453.5" x2="230" y2="453.5" stroke="#00ff00"/><line x1="231" y1="451.5" x2="232" y2="451.5" stroke="#00ff00"/><line x1="234.5" y1="446" x2="234.5" y2="453" stroke="#00ff00"/><line x1="233" y1="451.5" x2="234" y2="451.5" stroke="#00ff00"/><line x1="235" y1="450.5" x2="236" y2="450.5" stroke="#00ff00"/><line x1="238.5" y1="448" x2="238.5" y2="453" stroke="#00ff00"/><line x1="237" y1="450.5" x2="238" y2="450.5" stroke="#00ff00"/><line x1="239" y1="449.5" x2="240" y2="449.5" stroke="#00ff00"/><line x1="242.5" y1="446" x2="242.5" y2="454" stroke="#00ff00"/><line x1="241" y1="449.5" x2="242" y2="449.5" stroke="#00ff00"/><line x1="243" y1="447.5" x2="244" y2="447.5" stroke="#00ff00"/><line x1="246.5" y1="441" x2="246.5" y2="450" stroke="#00ff00"/><line x1="245" y1="447.5" x2="246" y2="447.5" stroke="#00ff00"/><line x1="247" y1="442.5" x2="248" y2="442.5" stroke="#00ff00"/><line x1="250.5" y1="441" x2="250.5" y2="445" stroke="#00ff00"/><line x1="249" y1="442.5" x2="250" y2="442.5" stroke="#00ff00"/><line x1="251" y1="442.5" x2="252" y2="442.5" stroke="#00ff00"/><line x1="254.5" y1="439" x2="254.5" y2="448" stroke="#00ff00"/><line x1="253" y1="442.5" x2="254" y2="442.5" stroke="#00ff00"/><line x1="255" y1="443.5" x2="256" y2="443.5" stroke="#00ff00"/><line x1="258.5" y1="441" x2="258.5" y2="448" stroke="#00ff00"/><line x1="257" y1="443.5" x2="258" y2="443.5" stroke="#00ff00"/><line x1="259" y1="446.5" x2="260" y2="446.5" stroke="#00ff00"/><line x1="262.5" y1="443" x2="262.5" y2="451" stroke="#00ff00"/><line x1="261" y1="446.5" x2="262" y2="446.5" stroke="#00ff00"/><line x1="263" y1="448.5" x2="264" y2="448.5" stroke="#00ff00"/><line x1="266.5" y1="445" x2="266.5" y2="451" stroke="#00ff00"/><line x1="265" y1="448.5" x2="266" y2="448.5" stroke="#00ff00"/><line x1="267" y1="446.5" x2="268" y2="446.5" stroke="#00ff00"/><line x1="270.5" y1="443" x2="270.5" y2="449" stroke="#00ff00"/><line x1="269" y1="446.5" x2="270" y2="446.5" stroke="#00ff00"/><line x1="271" y1="447.5" x2="272" y2="447.5" stroke="#00ff00"/><line x1="274.5" y1="446" x2="274.5" y2="449" stroke="#00ff00"/><line x1="273" y1="447.5" x2="274" y2="447.5" stroke="#00ff00"/><line x1="275" y1="447.5" x2="276" y2="447.5" stroke="#00ff00"/><line x1="278.5" y1="445" x2="278.5" y2="454" stroke="#00ff00"/><line x1="277" y1="447.5" x2="278" y2="447.5" stroke="#00ff00"/><line x1="279" y1="449.5" x2="280" y2="449.5" stroke="#00ff00"/><line x1="282.5" y1="444" x2="282.5" y2="453" stroke="#00ff00"/><line x1="281" y1="449.5" x2="282" y2="449.5" stroke="#00ff00"/><line x1="283" y1="448.5" x2="284" y2="448.5" stroke="#00ff00"/><line x1="286.5" y1="440" x2="286.5" y2="453" stroke="#00ff00"/><line x1="285" y1="448.5" x2="286" y2="448.5" stroke="#00ff00"/><line x1="287" y1="444.5" x2="288" y2="444.5" stroke="#00ff00"/><line x1="290.5" y1="438" x2="290.5" y2="448" stroke="#00ff00"/><line x1="289" y1="444.5" x2="290" y2="444.5" stroke="#00ff00"/><line x1="291" y1="441.5" x2="292" y2="441.5" stroke="#00ff00"/><line x1="294.5" y1="439" x2="294.5" y2="447" stroke="#00ff00"/><line x1="293" y1="441.5" x2="294" y2="441.5" stroke="#00ff00"/><line x1="295" y1="444.5" x2="296" y2="444.5" stroke="#00ff00"/><line x1="298.5" y1="442" x2="298.5" y2="448" stroke="#00ff00"/><line x1="297" y1="444.5" x2="298" y2="444.5" stroke="#00ff00"/><line x1="299" y1="446.5" x2="300" y2="446.5" stroke="#00ff00"/><line x1="302.5" y1="440" x2="302.5" y2="451" stroke="#00ff00"/><line x1="301" y1="446.5" x2="302" y2="446.5" stroke="#00ff00"/><line x1="303" y1="443.5" x2="304" y2="443.5" stroke="#00ff00"/><line x1="306.5" y1="416" x2="306.5" y2="448" stroke="#00ff00"/><line x1="305" y1="443.5" x2="306" y2="443.5" stroke="#00ff00"/><line x1="307" y1="431.5" x2="308" y2="431.5" stroke="#00ff00"/><line x1="310.5" y1="424" x2="310.5" y2="433" stroke="#00ff00"/><line x1="309" y1="431.5" x2="310" y2="431.5" stroke="#00ff00"/><line x1="311" y1="427.5" x2="312" y2="427.5" stroke="#00ff00"/><line x1="314.5" y1="426" x2="314.5" y2="433" stroke="#00ff00"/><line x1="313" y1="427.5" x2="314" y2="427.5" stroke="#00ff00"/><line x1="315" y1="428.5" x2="316" y2="428.5" stroke="#00ff00"/><line x1="318.5" y1="426" x2="318.5" y2="432" stroke="#00ff00"/><line x1="317" y1="428.5" x2="318" y2="428.5" stroke="#00ff00"/><line x1="319" y1="428.5" x2="320" y2="428.5" stroke="#00ff00"/><line x1="322.5" y1="412" x2="322.5" y2="433" stroke="#00ff00"/><line x1="321" y1="428.5" x2="322" y2="428.5" stroke="#00ff00"/><line x1="323" y1="421.5" x2="324" y2="421.5" stroke="#00ff00"/><line x1="326.5" y1="412" x2="326.5" y2="423" stroke="#00ff00"/><line x1="325" y1="421.5" x2="326" y2="421.5" stroke="#00ff00"/><line x1="327" y1="416.5" x2="328" y2="416.5" stroke="#00ff00"/><line x1="330.5" y1="413" x2="330.5" y2="420" stroke="#00ff00"/><line x1="329" y1="416.5" x2="330" y2="416.5" stroke="#00ff00"/><line x1="331" y1="414.5" x2="332" y2="414.5" stroke="#00ff00"/><line x1="334.5" y1="409" x2="334.5" y2="418" stroke="#00ff00"/><line x1="333" y1="414.5" x2="334" y2="414.5" stroke="#00ff00"/><line x1="335" y1="412.5" x2="336" y2="412.5" stroke="#00ff00"/><line x1="338.5" y1="408" x2="338.5" y2="418" stroke="#00ff00"/><line x1="337" y1="412.5" x2="338" y2="412.5" stroke="#00ff00"/><line x1="339" y1="413.5" x2="340" y2="413.5" stroke="#00ff00"/><line x1="342.5" y1="409" x2="342.5" y2="415" stroke="#00ff00"/><line x1="341" y1="413.5" x2="342" y2="413.5" stroke="#00ff00"/><line x1="343" y1="410.5" x2="344" y2="410.5" stroke="#00ff00"/><line x1="346.5" y1="403" x2="346.5" y2="415" stroke="#00ff00"/><line x1="345" y1="410.5" x2="346" y2="410.5" stroke="#00ff00"/><line x1="347" y1="406.5" x2="348" y2="406.5" stroke="#00ff00"/><line x1="350.5" y1="387" x2="350.5" y2="408" stroke="#00ff00"/><line x1="349" y1="406.5" x2="350" y2="406.5" stroke="#00ff00"/><line x1="351" y1="390.5" x2="352" y2="390.5" stroke="#00ff00"/><line x1="354.5" y1="387" x2="354.5" y2="396" stroke="#00ff00"/><line x1="353" y1="390.5" x2="354" y2="390.5" stroke="#00ff00"/><line x1="355" y1="391.5" x2="356" y2="391.5" stroke="#00ff00"/><line x1="358.5" y1="388" x2="358.5" y2="400" stroke="#00ff00"/><line x1="357" y1="391.5" x2="358" y2="391.5" stroke="#00ff00"/><line x1="359" y1="395.5" x2="360" y2="395.5" stroke="#00ff00"/><line x1="362.5" y1="392" x2="362.5" y2="400" stroke="#00ff00"/><line x1="361" y1="395.5" x2="362" y2="395.5" stroke="#00ff00"/><line x1="363" y1="398.5" x2="364" y2="398.5" stroke="#00ff00"/><line x1="366.5" y1="380" x2="366.5" y2="402" stroke="#00ff00"/><line x1="365" y1="398.5" x2="366" y2="398.5" stroke="#00ff00"/><line x1="367" y1="384.5" x2="368" y2="384.5" stroke="#00ff00"/><line x1="370.5" y1="382" x2="370.5" y2="392" stroke="#00ff00"/><line x1="369" y1="384.5" x2="370" y2="384.5" stroke="#00ff00"/><line x1="371" y1="390.5" x2="372" y2="390.5" stroke="#00ff00"/><line x1="374.5" y1="386" x2="374.5" y2="398" stroke="#00ff00"/><line x1="373" y1="390.5" x2="374" y2="390.5" stroke="#00ff00"/><line x1="375" y1="396.5" x2="376" y2="396.5" stroke="#00ff00"/><line x1="378.5" y1="390" x2="378.5" y2="400" stroke="#00ff00"/><line x1="377" y1="396.5" x2="378" y2="396.5" stroke="#00ff00"/><line x1="379" y1="392.5" x2="380" y2="392.5" stroke="#00ff00"/><line x1="382.5" y1="390" x2="382.5" y2="397" stroke="#00ff00"/><line x1="381" y1="392.5" x2="382" y2="392.5" stroke="#00ff00"/><line x1="383" y1="394.5" x2="384" y2="394.5" stroke="#00ff00"/><line x1="386.5" y1="390" x2="386.5" y2="399" stroke="#00ff00"/><line x1="385" y1="394.5" x2="386" y2="394.5" stroke="#00ff00"/><line x1="387" y1="394.5" x2="388" y2="394.5" stroke="#00ff00"/><line x1="390.5" y1="390" x2="390.5" y2="397" stroke="#00ff00"/><line x1="389" y1="394.5" x2="390" y2="394.5" stroke="#00ff00"/><line x1="391" y1="395.5" x2="392" y2="395.5" stroke="#00ff00"/><line x1="394.5" y1="393" x2="394.5" y2="406" stroke="#00ff00"/><line x1="393" y1="395.5" x2="394" y2="395.5" stroke="#00ff00"/><line x1="395" y1="401.5" x2="396" y2="401.5" stroke="#00ff00"/><line x1="398.5" y1="397" x2="398.5" y2="408" stroke="#00ff00"/><line x1="397" y1="401.5" x2="398" y2="401.5" stroke="#00ff00"/><line x1="399" y1="404.5" x2="400" y2="404.5" stroke="#00ff00"/><line x1="402.5" y1="401" x2="402.5" y2="409" stroke="#00ff00"/><line x1="401" y1="404.5" x2="402" y2="404.5" stroke="#00ff00"/><line x1="403" y1="403.5" x2="404" y2="403.5" stroke="#00ff00"/><line x1="406.5" y1="398" x2="406.5" y2="408" stroke="#00ff00"/><line x1="405" y1="403.5" x2="406" y2="403.5" stroke="#00ff00"/><line x1="407" y1="401.5" x2="408" y2="401.5" stroke="#00ff00"/><line x1="410.5" y1="396" x2="410.5" y2="406" stroke="#00ff00"/><line x1="409" y1="401.5" x2="410" y2="401.5" stroke="#00ff00"/><line x1="411" y1="399.5" x2="412" y2="399.5" stroke="#00ff00"/><line x1="414.5" y1="395" x2="414.5" y2="402" stroke="#00ff00"/><line x1="413" y1="399.5" x2="414" y2="399.5" stroke="#00ff00"/><line x1="415" y1="397.5" x2="416" y2="397.5" stroke="#00ff00"/><line x1="418.5" y1="396" x2="418.5" y2="403" stroke="#00ff00"/><line x1="417" y1="397.5" x2="418" y2="397.5" stroke="#00ff00"/><line x1="419" y1="400.5" x2="420" y2="400.5" stroke="#00ff00"/><line x1="422.5" y1="393" x2="422.5" y2="403" stroke="#00ff00"/><line x1="421" y1="400.5" x2="422" y2="400.5" stroke="#00ff00"/><line x1="423" y1="395.5" x2="424" y2="395.5" stroke="#00ff00"/><line x1="426.5" y1="392" x2="426.5" y2="397" stroke="#00ff00"/><line x1="425" y1="395.5" x2="426" y2="395.5" stroke="#00ff00"/><line x1="427" y1="394.5" x2="428" y2="394.5" stroke="#00ff00"/><line x1="430.5" y1="390" x2="430.5" y2="398" stroke="#00ff00"/><line x1="429" y1="394.5" x2="430" y2="394.5" stroke="#00ff00"/><line x1="431" y1="395.5" x2="432" y2="395.5" stroke="#00ff00"/><line x1="434.5" y1="390" x2="434.5" y2="399" stroke="#00ff00"/><line x1="433" y1="395.5" x2="434" y2="395.5" stroke="#00ff00"/><line x1="435" y1="393.5" x2="436" y2="393.5" stroke="#00ff00"/><line x1="438.5" y1="392" x2="438.5" y2="398" stroke="#00ff00"/><line x1="437" y1="393.5" x2="438" y2="393.5" stroke="#00ff00"/><line x1="439" y1="395.5" x2="440" y2="395.5" stroke="#00ff00"/><line x1="442.5" y1="391" x2="442.5" y2="403" stroke="#00ff00"/><line x1="441" y1="395.5" x2="442" y2="395.5" stroke="#00ff00"/><line x1="443" y1="399.5" x2="444" y2="399.5" stroke="#00ff00"/><line x1="446.5" y1="396" x2="446.5" y2="407" stroke="#00ff00"/><line x1="445" y1="399.5" x2="446" y2="399.5" stroke="#00ff00"/><line x1="447" y1="404.5" x2="448" y2="404.5" stroke="#00ff00"/><line x1="450.5" y1="403" x2="450.5" y2="413" stroke="#00ff00"/><line x1="449" y1="404.5" x2="450" y2="404.5" stroke="#00ff00"/><line x1="451" y1="408.5" x2="452" y2="408.5" stroke="#00ff00"/><line x1="454.5" y1="404" x2="454.5" y2="413" stroke="#00ff00"/><line x1="453" y1="408.5" x2="454" y2="408.5" stroke="#00ff00"/><line x1="455" y1="408.5" x2="456" y2="408.5" stroke="#00ff00"/><line x1="458.5" y1="401" x2="458.5" y2="413" stroke="#00ff00"/><line x1="457" y1="408.5" x2="458" y2="408.5" stroke="#00ff00"/><line x1="459" y1="405.5" x2="460" y2="405.5" stroke="#00ff00"/><line x1="462.5" y1="403" x2="462.5" y2="410" stroke="#00ff00"/><line x1="461" y1="405.5" x2="462" y2="405.5" stroke="#00ff00"/><line x1="463" y1="404.5" x2="464" y2="404.5" stroke="#00ff00"/><line x1="466.5" y1="400" x2="466.5" y2="409" stroke="#00ff00"/><line x1="465" y1="404.5" x2="466" y2="404.5" stroke="#00ff00"/><line x1="467" y1="407.5" x2="468" y2="407.5" stroke="#00ff00"/><line x1="470.5" y1="405" x2="470.5" y2="410" stroke="#00ff00"/><line x1="469" y1="407.5" x2="470" y2="407.5" stroke="#00ff00"/><line x1="471" y1="408.5" x2="472" y2="408.5" stroke="#00ff00"/><line x1="474.5" y1="404" x2="474.5" y2="413" stroke="#00ff00"/><line x1="473" y1="408.5" x2="474" y2="408.5" stroke="#00ff00"/><line x1="475" y1="406.5" x2="476" y2="406.5" stroke="#00ff00"/><line x1="478.5" y1="404" x2="478.5" y2="408" stroke="#00ff00"/><line x1="477" y1="406.5" x2="478" y2="406.5" stroke="#00ff00"/><line x1="479" y1="406.5" x2="480" y2="406.5" stroke="#00ff00"/><line x1="482.5" y1="401" x2="482.5" y2="408" stroke="#00ff00"/><line x1="481" y1="406.5" x2="482" y2="406.5" stroke="#00ff00"/><line x1="483" y1="404.5" x2="484" y2="404.5" stroke="#00ff00"/><line x1="486.5" y1="403" x2="486.5" y2="408" stroke="#00ff00"/><line x1="485" y1="404.5" x2="486" y2="404.5" stroke="#00ff00"/><line x1="487" y1="406.5" x2="488" y2="406.5" stroke="#00ff00"/><line x1="490.5" y1="399" x2="490.5" y2="408" stroke="#00ff00"/><line x1="489" y1="406.5" x2="490" y2="406.5" stroke="#00ff00"/><line x1="491" y1="401.5" x2="492" y2="401.5" stroke="#00ff00"/><line x1="494.5" y1="396" x2="494.5" y2="403" stroke="#00ff00"/><line x1="493" y1="401.5" x2="494" y2="401.5" stroke="#00ff00"/><line x1="495" y1="399.5" x2="496" y2="399.5" stroke="#00ff00"/><line x1="498.5" y1="398" x2="498.5" y2="404" stroke="#00ff00"/><line x1="497" y1="399.5" x2="498" y2="399.5" stroke="#00ff00"/><line x1="499" y1="401.5" x2="500" y2="401.5" stroke="#00ff00"/><line x1="502.5" y1="397" x2="502.5" y2="405" stroke="#00ff00"/><line x1="501" y1="401.5" x2="502" y2="401.5" stroke="#00ff00"/><line x1="503" y1="402.5" x2="504" y2="402.5" stroke="#00ff00"/><line x1="506.5" y1="399" x2="506.5" y2="408" stroke="#00ff00"/><line x1="505" y1="402.5" x2="506" y2="402.5" stroke="#00ff00"/><line x1="507" y1="404.5" x2="508" y2="404.5" stroke="#00ff00"/><line x1="510.5" y1="401" x2="510.5" y2="410" stroke="#00ff00"/><line x1="509" y1="404.5" x2="510" y2="404.5" stroke="#00ff00"/><line x1="511" y1="405.5" x2="512" y2="405.5" stroke="#00ff00"/><line x1="514.5" y1="404" x2="514.5" y2="407" stroke="#00ff00"/><line x1="513" y1="405.5" x2="514" y2="405.5" stroke="#00ff00"/><line x1="515" y1="405.5" x2="516" y2="405.5" stroke="#00ff00"/><line x1="518.5" y1="399" x2="518.5" y2="410" stroke="#00ff00"/><line x1="517" y1="405.5" x2="518" y2="405.5" stroke="#00ff00"/><line x1="519" y1="403.5" x2="520" y2="403.5" stroke="#00ff00"/><line x1="522.5" y1="397" x2="522.5" y2="408" stroke="#00ff00"/><line x1="521" y1="403.5" x2="522" y2="403.5" stroke="#00ff00"/><line x1="523" y1="401.5" x2="524" y2="401.5" stroke="#00ff00"/><line x1="526.5" y1="398" x2="526.5" y2="406" stroke="#00ff00"/><line x1="525" y1="401.5" x2="526" y2="401.5" stroke="#00ff00"/><line x1="527" y1="404.5" x2="528" y2="404.5" stroke="#00ff00"/><line x1="530.5" y1="401" x2="530.5" y2="406" stroke="#00ff00"/><line x1="529" y1="404.5" x2="530" y2="404.5" stroke="#00ff00"/><line x1="531" y1="403.5" x2="532" y2="403.5" stroke="#00ff00"/><line x1="534.5" y1="400" x2="534.5" y2="409" stroke="#00ff00"/><line x1="533" y1="403.5" x2="534" y2="403.5" stroke="#00ff00"/><line x1="535" y1="405.5" x2="536" y2="405.5" stroke="#00ff00"/><line x1="538.5" y1="401" x2="538.5" y2="410" stroke="#00ff00"/><line x1="537" y1="405.5" x2="538" y2="405.5" stroke="#00ff00"/><line x1="539" y1="407.5" x2="540" y2="407.5" stroke="#00ff00"/><line x1="542.5" y1="401" x2="542.5" y2="410" stroke="#00ff00"/><line x1="541" y1="407.5" x2="542" y2="407.5" stroke="#00ff00"/><line x1="543" y1="402.5" x2="544" y2="402.5" stroke="#00ff00"/><line x1="546.5" y1="398" x2="546.5" y2="405" stroke="#00ff00"/><line x1="545" y1="402.5" x2="546" y2="402.5" stroke="#00ff00"/><line x1="547" y1="401.5" x2="548" y2="401.5" stroke="#00ff00"/><line x1="550.5" y1="400" x2="550.5" y2="411" stroke="#00ff00"/><line x1="549" y1="401.5" x2="550" y2="401.5" stroke="#00ff00"/><line x1="551" y1="407.5" x2="552" y2="407.5" stroke="#00ff00"/><line x1="554.5" y1="403" x2="554.5" y2="411" stroke="#00ff00"/><line x1="553" y1="407.5" x2="554" y2="407.5" stroke="#00ff00"/><line x1="555" y1="404.5" x2="556" y2="404.5" stroke="#00ff00"/><line x1="558.5" y1="401" x2="558.5" y2="407" stroke="#00ff00"/><line x1="557" y1="404.5" x2="558" y2="404.5" stroke="#00ff00"/><line x1="559" y1="404.5" x2="560" y2="404.5" stroke="#00ff00"/><line x1="562.5" y1="401" x2="562.5" y2="411" stroke="#00ff00"/><line x1="561" y1="404.5" x2="562" y2="404.5" stroke="#00ff00"/><line x1="563" y1="408.5" x2="564" y2="408.5" stroke="#00ff00"/><line x1="566.5" y1="402" x2="566.5" y2="411" stroke="#00ff00"/><line x1="565" y1="408.5" x2="566" y2="408.5" stroke="#00ff00"/><line x1="567" y1="405.5" x2="568" y2="405.5" stroke="#00ff00"/><line x1="570.5" y1="400" x2="570.5" y2="408" stroke="#00ff00"/><line x1="569" y1="405.5" x2="570" y2="405.5" stroke="#00ff00"/><line x1="571" y1="402.5" x2="572" y2="402.5" stroke="#00ff00"/><line x1="574.5" y1="397" x2="574.5" y2="405" stroke="#00ff00"/><line x1="573" y1="402.5" x2="574" y2="402.5" stroke="#00ff00"/><line x1="575" y1="401.5" x2="576" y2="401.5" stroke="#00ff00"/><line x1="578.5" y1="399" x2="578.5" y2="406" stroke="#00ff00"/><line x1="577" y1="401.5" x2="578" y2="401.5" stroke="#00ff00"/><line x1="579" y1="401.5" x2="580" y2="401.5" stroke="#00ff00"/><line x1="582.5" y1="398" x2="582.5" y2="403" stroke="#00ff00"/><line x1="581" y1="401.5" x2="582" y2="401.5" stroke="#00ff00"/><line x1="583" y1="401.5" x2="584" y2="401.5" stroke="#00ff00"/><line x1="586.5" y1="399" x2="586.5" y2="405" stroke="#00ff00"/><line x1="585" y1="401.5" x2="586" y2="401.5" stroke="#00ff00"/><line x1="587" y1="400.5" x2="588" y2="400.5" stroke="#00ff00"/><line x1="590.5" y1="393" x2="590.5" y2="404" stroke="#00ff00"/><line x1="589" y1="400.5" x2="590" y2="400.5" stroke="#00ff00"/><line x1="591" y1="397.5" x2="592" y2="397.5" stroke="#00ff00"/><line x1="594.5" y1="365" x2="594.5" y2="401" stroke="#00ff00"/><line x1="593" y1="397.5" x2="594" y2="397.5" stroke="#00ff00"/><line x1="595" y1="378.5" x2="596" y2="378.5" stroke="#00ff00"/><line x1="598.5" y1="365" x2="598.5" y2="386" stroke="#00ff00"/><line x1="597" y1="378.5" x2="598" y2="378.5" stroke="#00ff00"/><line x1="599" y1="381.5" x2="600" y2="381.5" stroke="#00ff00"/><line x1="602.5" y1="378" x2="602.5" y2="387" stroke="#00ff00"/><line x1="601" y1="381.5" x2="602" y2="381.5" stroke="#00ff00"/><line x1="603" y1="385.5" x2="604" y2="385.5" stroke="#00ff00"/><line x1="606.5" y1="383" x2="606.5" y2="389" stroke="#00ff00"/><line x1="605" y1="385.5" x2="606" y2="385.5" stroke="#00ff00"/><line x1="607" y1="387.5" x2="608" y2="387.5" stroke="#00ff00"/><line x1="610.5" y1="385" x2="610.5" y2="392" stroke="#00ff00"/><line x1="609" y1="387.5" x2="610" y2="387.5" stroke="#00ff00"/><line x1="611" y1="387.5" x2="612" y2="387.5" stroke="#00ff00"/><line x1="614.5" y1="385" x2="614.5" y2="391" stroke="#00ff00"/><line x1="613" y1="387.5" x2="614" y2="387.5" stroke="#00ff00"/><line x1="615" y1="387.5" x2="616" y2="387.5" stroke="#00ff00"/><line x1="618.5" y1="385" x2="618.5" y2="394" stroke="#00ff00"/><line x1="617" y1="387.5" x2="618" y2="387.5" stroke="#00ff00"/><line x1="619" y1="389.5" x2="620" y2="389.5" stroke="#00ff00"/><line x1="622.5" y1="388" x2="622.5" y2="396" stroke="#00ff00"/><line x1="621" y1="389.5" x2="622" y2="389.5" stroke="#00ff00"/><line x1="623" y1="391.5" x2="624" y2="391.5" stroke="#00ff00"/><line x1="626.5" y1="386" x2="626.5" y2="393" stroke="#00ff00"/><line x1="625" y1="391.5" x2="626" y2="391.5" stroke="#00ff00"/><line x1="627" y1="389.5" x2="628" y2="389.5" stroke="#00ff00"/><line x1="630.5" y1="388" x2="630.5" y2="398" stroke="#00ff00"/><line x1="629" y1="389.5" x2="630" y2="389.5" stroke="#00ff00"/><line x1="631" y1="393.5" x2="632" y2="393.5" stroke="#00ff00"/><line x1="634.5" y1="391" x2="634.5" y2="398" stroke="#00ff00"/><line x1="633" y1="393.5" x2="634" y2="393.5" stroke="#00ff00"/><line x1="635" y1="393.5" x2="636" y2="393.5" stroke="#00ff00"/><line x1="638.5" y1="388" x2="638.5" y2="398" stroke="#00ff00"/><line x1="637" y1="393.5" x2="638" y2="393.5" stroke="#00ff00"/><line x1="639" y1="390.5" x2="640" y2="390.5" stroke="#00ff00"/><line x1="642.5" y1="385" x2="642.5" y2="392" stroke="#00ff00"/><line x1="641" y1="390.5" x2="642" y2="390.5" stroke="#00ff00"/><line x1="643" y1="388.5" x2="644" y2="388.5" stroke="#00ff00"/><line x1="646.5" y1="384" x2="646.5" y2="395" stroke="#00ff00"/><line x1="645" y1="388.5" x2="646" y2="388.5" stroke="#00ff00"/><line x1="647" y1="390.5" x2="648" y2="390.5" stroke="#00ff00"/><line x1="650.5" y1="385" x2="650.5" y2="392" stroke="#00ff00"/><line x1="649" y1="390.5" x2="650" y2="390.5" stroke="#00ff00"/><line x1="651" y1="389.5" x2="652" y2="389.5" stroke="#00ff00"/><line x1="654.5" y1="385" x2="654.5" y2="392" stroke="#00ff00"/><line x1="653" y1="389.5" x2="654" y2="389.5" stroke="#00ff00"/><line x1="655" y1="387.5" x2="656" y2="387.5" stroke="#00ff00"/><line x1="658.5" y1="384" x2="658.5" y2="389" stroke="#00ff00"/><line x1="657" y1="387.5" x2="658" y2="387.5" stroke="#00ff00"/><line x1="659" y1="386.5" x2="660" y2="386.5" stroke="#00ff00"/><line x1="662.5" y1="384" x2="662.5" y2="392" stroke="#00ff00"/><line x1="661" y1="386.5" x2="662" y2="386.5" stroke="#00ff00"/><line x1="663" y1="387.5" x2="664" y2="387.5" stroke="#00ff00"/><line x1="666.5" y1="385" x2="666.5" y2="392" stroke="#00ff00"/><line x1="665" y1="387.5" x2="666" y2="387.5" stroke="#00ff00"/><line x1="667" y1="387.5" x2="668" y2="387.5" stroke="#00ff00"/><line x1="670.5" y1="382" x2="670.5" y2="390" stroke="#00ff00"/><line x1="669" y1="387.5" x2="670" y2="387.5" stroke="#00ff00"/><line x1="671" y1="385.5" x2="672" y2="385.5" stroke="#00ff00"/><line x1="674.5" y1="380" x2="674.5" y2="397" stroke="#00ff00"/><line x1="673" y1="385.5" x2="674" y2="385.5" stroke="#00ff00"/><line x1="675" y1="385.5" x2="676" y2="385.5" stroke="#00ff00"/><line x1="678.5" y1="381" x2="678.5" y2="387" stroke="#00ff00"/><line x1="677" y1="385.5" x2="678" y2="385.5" stroke="#00ff00"/><line x1="679" y1="382.5" x2="680" y2="382.5" stroke="#00ff00"/><line x1="682.5" y1="380" x2="682.5" y2="387" stroke="#00ff00"/><line x1="681" y1="382.5" x2="682" y2="382.5" stroke="#00ff00"/><line x1="683" y1="382.5" x2="684" y2="382.5" stroke="#00ff00"/><line x1="686.5" y1="380" x2="686.5" y2="385" stroke="#00ff00"/><line x1="685" y1="382.5" x2="686" y2="382.5" stroke="#00ff00"/><line x1="687" y1="382.5" x2="688" y2="382.5" stroke="#00ff00"/><line x1="690.5" y1="378" x2="690.5" y2="386" stroke="#00ff00"/><line x1="689" y1="382.5" x2="690" y2="382.5" stroke="#00ff00"/><line x1="691" y1="379.5" x2="692" y2="379.5" stroke="#00ff00"/><line x1="694.5" y1="377" x2="694.5" y2="386" stroke="#00ff00"/><line x1="693" y1="379.5" x2="694" y2="379.5" stroke="#00ff00"/><line x1="695" y1="382.5" x2="696" y2="382.5" stroke="#00ff00"/><line x1="698.5" y1="380" x2="698.5" y2="386" stroke="#00ff00"/><line x1="697" y1="382.5" x2="698" y2="382.5" stroke="#00ff00"/><line x1="699" y1="382.5" x2="700" y2="382.5" stroke="#00ff00"/><line x1="702.5" y1="378" x2="702.5" y2="387" stroke="#00ff00"/><line x1="701" y1="382.5" x2="702" y2="382.5" stroke="#00ff00"/><line x1="703" y1="381.5" x2="704" y2="381.5" stroke="#00ff00"/><line x1="706.5" y1="379" x2="706.5" y2="385" stroke="#00ff00"/><line x1="705" y1="381.5" x2="706" y2="381.5" stroke="#00ff00"/><line x1="707" y1="383.5" x2="708" y2="383.5" stroke="#00ff00"/><line x1="710.5" y1="378" x2="710.5" y2="388" stroke="#00ff00"/><line x1="709" y1="383.5" x2="710" y2="383.5" stroke="#00ff00"/><line x1="711" y1="381.5" x2="712" y2="381.5" stroke="#00ff00"/></g><line x1="202.5" y1="498" x2="202.5" y2="509" stroke="#c0c0c0"/><line x1="206.5" y1="498" x2="206.5" y2="509" stroke="#c0c0c0"/><line x1="210.5" y1="498" x2="210.5" y2="509" stroke="#c0c0c0"/><line x1="214.5" y1="498" x2="214.5" y2="509" stroke="#c0c0c0"/><line x1="218.5" y1="498" x2="218.5" y2="509" stroke="#c0c0c0"/><line x1="222.5" y1="498" x2="222.5" y2="509" stroke="#c0c0c0"/><line x1="226.5" y1="498" x2="226.5" y2="509" stroke="#c0c0c0"/><line x1="230.5" y1="498" x2="230.5" y2="509" stroke="#c0c0c0"/><line x1="234.5" y1="498" x2="234.5" y2="509" stroke="#c0c0c0"/><line x1="238.5" y1="498" x2="238.5" y2="509" stroke="#c0c0c0"/><line x1="242.5" y1="498" x2="242.5" y2="509" stroke="#c0c0c0"/><line x1="298.5" y1="497" x2="298.5" y2="499" stroke="#c0c0c0"/><line x1="302.5" y1="497" x2="302.5" y2="499" stroke="#c0c0c0"/><line x1="306.5" y1="496" x2="306.5" y2="499" stroke="#c0c0c0"/><line x1="310.5" y1="492" x2="310.5" y2="499" stroke="#c0c0c0"/><line x1="314.5" y1="490" x2="314.5" y2="499" stroke="#c0c0c0"/><line x1="318.5" y1="489" x2="318.5" y2="499" stroke="#c0c0c0"/><line x1="322.5" y1="487" x2="322.5" y2="499" stroke="#c0c0c0"/><line x1="326.5" y1="484" x2="326.5" y2="499" stroke="#c0c0c0"/><line x1="330.5" y1="483" x2="330.5" y2="499" stroke="#c0c0c0"/><line x1="334.5" y1="482" x2="334.5" y2="499" stroke="#c0c0c0"/><line x1="338.5" y1="481" x2="338.5" y2="499" stroke="#c0c0c0"/><line x1="342.5" y1="480" x2="342.5" y2="499" stroke="#c0c0c0"/><line x1="346.5" y1="478" x2="346.5" y2="499" stroke="#c0c0c0"/><line x1="350.5" y1="475" x2="350.5" y2="499" stroke="#c0c0c0"/><line x1="354.5" y1="472" x2="354.5" y2="499" stroke="#c0c0c0"/><line x1="358.5" y1="471" x2="358.5" y2="499" stroke="#c0c0c0"/><line x1="362.5" y1="470" x2="362.5" y2="499" stroke="#c0c0c0"/><line x1="366.5" y1="470" x2="366.5" y2="499" stroke="#c0c0c0"/><line x1="370.5" y1="470" x2="370.5" y2="499" stroke="#c0c0c0"/><line x1="374.5" y1="470" x2="374.5" y2="499" stroke="#c0c0c0"/><line x1="378.5" y1="471" x2="378.5" y2="499" stroke="#c0c0c0"/><line x1="382.5" y1="472" x2="382.5" y2="499" stroke="#c0c0c0"/><line x1="386.5" y1="474" x2="386.5" y2="499" stroke="#c0c0c0"/><line x1="390.5" y1="476" x2="390.5" y2="499" stroke="#c0c0c0"/><line x1="394.5" y1="478" x2="394.5" y2="499" stroke="#c0c0c0"/><line x1="398.5" y1="481" x2="398.5" y2="499" stroke="#c0c0c0"/><line x1="402.5" y1="483" x2="402.5" y2="499" stroke="#c0c0c0"/><line x1="406.5" y1="484" x2="406.5" y2="499" stroke="#c0c0c0"/><line x1="410.5" y1="486" x2="410.5" y2="499" stroke="#c0c0c0"/><line x1="414.5" y1="486" x2="414.5" y2="499" stroke="#c0c0c0"/><line x1="418.5" y1="486" x2="418.5" y2="499" stroke="#c0c0c0"/><line x1="422.5" y1="485" x2="422.5" y2="499" stroke="#c0c0c0"/><line x1="426.5" y1="484" x2="426.5" y2="499" stroke="#c0c0c0"/><line x1="430.5" y1="488" x2="430.5" y2="499" stroke="#c0c0c0"/><line x1="434.5" y1="488" x2="434.5" y2="499" stroke="#c0c0c0"/><line x1="438.5" y1="488" x2="438.5" y2="499" stroke="#c0c0c0"/><line x1="442.5" y1="490" x2="442.5" y2="499" stroke="#c0c0c0"/><line x1="446.5" y1="492" x2="446.5" y2="499" stroke="#c0c0c0"/><line x1="450.5" y1="494" x2="450.5" y2="499" stroke="#c0c0c0"/><line x1="454.5" y1="495" x2="454.5" y2="499" stroke="#c0c0c0"/><line x1="458.5" y1="496" x2="458.5" y2="499" stroke="#c0c0c0"/><line x1="462.5" y1="497" x2="462.5" y2="499" stroke="#c0c0c0"/><line x1="590.5" y1="497" x2="590.5" y2="499" stroke="#c0c0c0"/><line x1="594.5" y1="495" x2="594.5" y2="499" stroke="#c0c0c0"/><line x1="598.5" y1="494" x2="598.5" y2="499" stroke="#c0c0c0"/><line x1="602.5" y1="492" x2="602.5" y2="499" stroke="#c0c0c0"/><line x1="606.5" y1="491" x2="606.5" y2="499" stroke="#c0c0c0"/><line x1="610.5" y1="490" x2="610.5" y2="499" stroke="#c0c0c0"/><line x1="614.5" y1="489" x2="614.5" y2="499" stroke="#c0c0c0"/><line x1="618.5" y1="489" x2="618.5" y2="499" stroke="#c0c0c0"/><line x1="622.5" y1="489" x2="622.5" y2="499" stroke="#c0c0c0"/><line x1="626.5" y1="489" x2="626.5" y2="499" stroke="#c0c0c0"/><line x1="630.5" y1="490" x2="630.5" y2="499" stroke="#c0c0c0"/><line x1="634.5" y1="490" x2="634.5" y2="499" stroke="#c0c0c0"/><line x1="638.5" y1="490" x2="638.5" y2="499" stroke="#c0c0c0"/><line x1="642.5" y1="490" x2="642.5" y2="499" stroke="#c0c0c0"/><line x1="646.5" y1="490" x2="646.5" y2="499" stroke="#c0c0c0"/><line x1="650.5" y1="490" x2="650.5" y2="499" stroke="#c0c0c0"/><line x1="654.5" y1="490" x2="654.5" y2="499" stroke="#c0c0c0"/><line x1="658.5" y1="490" x2="658.5" y2="499" stroke="#c0c0c0"/><line x1="662.5" y1="490" x2="662.5" y2="499" stroke="#c0c0c0"/><line x1="666.5" y1="490" x2="666.5" y2="499" stroke="#c0c0c0"/><line x1="670.5" y1="490" x2="670.5" y2="499" stroke="#c0c0c0"/><line x1="674.5" y1="490" x2="674.5" y2="499" stroke="#c0c0c0"/><line x1="678.5" y1="490" x2="678.5" y2="499" stroke="#c0c0c0"/><line x1="682.5" y1="490" x2="682.5" y2="499" stroke="#c0c0c0"/><line x1="686.5" y1="490" x2="686.5" y2="499" stroke="#c0c0c0"/><line x1="690.5" y1="490" x2="690.5" y2="499" stroke="#c0c0c0"/><line x1="694.5" y1="490" x2="694.5" y2="499" stroke="#c0c0c0"/><line x1="698.5" y1="490" x2="698.5" y2="499" stroke="#c0c0c0"/><line x1="702.5" y1="490" x2="702.5" y2="499" stroke="#c0c0c0"/><line x1="706.5" y1="490" x2="706.5" y2="499" stroke="#c0c0c0"/><line x1="710.5" y1="490" x2="710.5" y2="499" stroke="#c0c0c0"/><polyline points="202.3,513.6 268.3,499.0 309.3,496.8 341.5,484.3 370.8,471.8 390.0,471.1 401.7,474.0 412.0,478.4 425.2,482.8 436.9,485.8 448.6,488.0 460.3,490.9 472.0,494.6 483.8,498.2 554.0,498.5 580.0,499.4 599.0,496.0 621.0,490.2 638.6,490.2 653.3,492.4 682.6,492.4 709.0,490.9" fill="none" stroke="#ff0000" stroke-width="1" stroke-dasharray="4,3" shape-rendering="crispEdges"/><rect x="202.5" y="358.5" width="518" height="105" fill="none" stroke="#fff"/><rect x="202.5" y="465.5" width="518" height="51" fill="none" stroke="#fff"/><line x1="202.5" y1="517" x2="202.5" y2="521" stroke="#fff" stroke-width="1"/><text x="202" y="529" fill="#fff" stroke="#fff" stroke-width="0.25" font-family="Liberation Sans" font-size="9.3" letter-spacing="-0.05" style="white-space:pre" text-anchor="start" >12 Oct 2022</text><line x1="266.5" y1="517" x2="266.5" y2="521" stroke="#fff" stroke-width="1"/><text x="266" y="529" fill="#fff" stroke="#fff" stroke-width="0.25" font-family="Liberation Sans" font-size="9.3" letter-spacing="-0.05" style="white-space:pre" text-anchor="start" >12 Oct 11:07</text><line x1="330.5" y1="517" x2="330.5" y2="521" stroke="#fff" stroke-width="1"/><text x="330" y="529" fill="#fff" stroke="#fff" stroke-width="0.25" font-family="Liberation Sans" font-size="9.3" letter-spacing="-0.05" style="white-space:pre" text-anchor="start" >12 Oct 11:23</text><line x1="394.5" y1="517" x2="394.5" y2="521" stroke="#fff" stroke-width="1"/><text x="394" y="529" fill="#fff" stroke="#fff" stroke-width="0.25" font-family="Liberation Sans" font-size="9.3" letter-spacing="-0.05" style="white-space:pre" text-anchor="start" >12 Oct 11:39</text><line x1="458.5" y1="517" x2="458.5" y2="521" stroke="#fff" stroke-width="1"/><text x="458" y="529" fill="#fff" stroke="#fff" stroke-width="0.25" font-family="Liberation Sans" font-size="9.3" letter-spacing="-0.05" style="white-space:pre" text-anchor="start" >12 Oct 11:55</text><line x1="522.5" y1="517" x2="522.5" y2="521" stroke="#fff" stroke-width="1"/><text x="522" y="529" fill="#fff" stroke="#fff" stroke-width="0.25" font-family="Liberation Sans" font-size="9.3" letter-spacing="-0.05" style="white-space:pre" text-anchor="start" >12 Oct 12:11</text><line x1="586.5" y1="517" x2="586.5" y2="521" stroke="#fff" stroke-width="1"/><text x="586" y="529" fill="#fff" stroke="#fff" stroke-width="0.25" font-family="Liberation Sans" font-size="9.3" letter-spacing="-0.05" style="white-space:pre" text-anchor="start" >12 Oct 12:27</text><line x1="650.5" y1="517" x2="650.5" y2="521" stroke="#fff" stroke-width="1"/><text x="650" y="529" fill="#fff" stroke="#fff" stroke-width="0.25" font-family="Liberation Sans" font-size="9.3" letter-spacing="-0.05" style="white-space:pre" text-anchor="start" >12 Oct 12:43</text><line x1="721" y1="361.5" x2="724" y2="361.5" stroke="#fff"/><text x="726" y="365" fill="#fff" stroke="#fff" stroke-width="0.25" font-family="Liberation Sans" font-size="9.3" letter-spacing="-0.05" style="white-space:pre" text-anchor="start" >1.10870</text><line x1="721" y1="394.5" x2="724" y2="394.5" stroke="#fff"/><text x="726" y="398" fill="#fff" stroke="#fff" stroke-width="0.25" font-family="Liberation Sans" font-size="9.3" letter-spacing="-0.05" style="white-space:pre" text-anchor="start" >1.10460</text><line x1="721" y1="427.5" x2="724" y2="427.5" stroke="#fff"/><text x="726" y="431" fill="#fff" stroke="#fff" stroke-width="0.25" font-family="Liberation Sans" font-size="9.3" letter-spacing="-0.05" style="white-space:pre" text-anchor="start" >1.10040</text><line x1="721" y1="460.5" x2="724" y2="460.5" stroke="#fff"/><text x="726" y="464" fill="#fff" stroke="#fff" stroke-width="0.25" font-family="Liberation Sans" font-size="9.3" letter-spacing="-0.05" style="white-space:pre" text-anchor="start" >1.09630</text><line x1="721" y1="472.5" x2="724" y2="472.5" stroke="#fff"/><text x="726" y="476" fill="#fff" stroke="#fff" stroke-width="0.25" font-family="Liberation Sans" font-size="9.3" letter-spacing="-0.05" style="white-space:pre" text-anchor="start" >0.001858</text><line x1="721" y1="498.5" x2="724" y2="498.5" stroke="#fff"/><text x="726" y="502" fill="#fff" stroke="#fff" stroke-width="0.25" font-family="Liberation Sans" font-size="9.3" letter-spacing="-0.05" style="white-space:pre" text-anchor="start" >0.00</text><line x1="721" y1="509.5" x2="724" y2="509.5" stroke="#fff"/><text x="726" y="513" fill="#fff" stroke="#fff" stroke-width="0.25" font-family="Liberation Sans" font-size="9.3" letter-spacing="-0.05" style="white-space:pre" text-anchor="start" >-0.000998</text><rect x="722" y="372" width="41" height="11" fill="#fff"/><text x="726" y="381" fill="#000" stroke="#000" stroke-width="0.25" font-family="Liberation Sans" font-size="9.3" letter-spacing="-0.05" style="white-space:pre" text-anchor="start" >1.10667</text><path d="M205 364h7l-3.5 4z" fill="#fff"/><text x="217" y="370" fill="#fff" stroke="#fff" stroke-width="0.25" font-family="Liberation Sans" font-size="9.3" letter-spacing="-0.05" style="white-space:pre" text-anchor="start" >GBPUSD,M1  1.10589 1.10668 1.10566 1.10667</text><text x="206" y="477" fill="#fff" stroke="#fff" stroke-width="0.25" font-family="Liberation Sans" font-size="9.3" letter-spacing="-0.05" style="white-space:pre" text-anchor="start" >MACD(12,26,9) 0.000445 0.000447</text></svg><svg style="position:absolute;left:786px;top:356px" width="567" height="181" viewBox="786 356 567 181"><defs><clipPath id="cp777_324"><rect x="790" y="359" width="517" height="156"/></clipPath></defs><rect x="786" y="356" width="567" height="181" fill="#000"/><line x1="821.5" y1="359" x2="821.5" y2="463" stroke="#9aa7b5" stroke-width="1" stroke-dasharray="3,3"/><line x1="821.5" y1="467" x2="821.5" y2="516" stroke="#9aa7b5" stroke-width="1" stroke-dasharray="3,3"/><line x1="853.5" y1="359" x2="853.5" y2="463" stroke="#9aa7b5" stroke-width="1" stroke-dasharray="3,3"/><line x1="853.5" y1="467" x2="853.5" y2="516" stroke="#9aa7b5" stroke-width="1" stroke-dasharray="3,3"/><line x1="885.5" y1="359" x2="885.5" y2="463" stroke="#9aa7b5" stroke-width="1" stroke-dasharray="3,3"/><line x1="885.5" y1="467" x2="885.5" y2="516" stroke="#9aa7b5" stroke-width="1" stroke-dasharray="3,3"/><line x1="917.5" y1="359" x2="917.5" y2="463" stroke="#9aa7b5" stroke-width="1" stroke-dasharray="3,3"/><line x1="917.5" y1="467" x2="917.5" y2="516" stroke="#9aa7b5" stroke-width="1" stroke-dasharray="3,3"/><line x1="949.5" y1="359" x2="949.5" y2="463" stroke="#9aa7b5" stroke-width="1" stroke-dasharray="3,3"/><line x1="949.5" y1="467" x2="949.5" y2="516" stroke="#9aa7b5" stroke-width="1" stroke-dasharray="3,3"/><line x1="981.5" y1="359" x2="981.5" y2="463" stroke="#9aa7b5" stroke-width="1" stroke-dasharray="3,3"/><line x1="981.5" y1="467" x2="981.5" y2="516" stroke="#9aa7b5" stroke-width="1" stroke-dasharray="3,3"/><line x1="1013.5" y1="359" x2="1013.5" y2="463" stroke="#9aa7b5" stroke-width="1" stroke-dasharray="3,3"/><line x1="1013.5" y1="467" x2="1013.5" y2="516" stroke="#9aa7b5" stroke-width="1" stroke-dasharray="3,3"/><line x1="1045.5" y1="359" x2="1045.5" y2="463" stroke="#9aa7b5" stroke-width="1" stroke-dasharray="3,3"/><line x1="1045.5" y1="467" x2="1045.5" y2="516" stroke="#9aa7b5" stroke-width="1" stroke-dasharray="3,3"/><line x1="1077.5" y1="359" x2="1077.5" y2="463" stroke="#9aa7b5" stroke-width="1" stroke-dasharray="3,3"/><line x1="1077.5" y1="467" x2="1077.5" y2="516" stroke="#9aa7b5" stroke-width="1" stroke-dasharray="3,3"/><line x1="1109.5" y1="359" x2="1109.5" y2="463" stroke="#9aa7b5" stroke-width="1" stroke-dasharray="3,3"/><line x1="1109.5" y1="467" x2="1109.5" y2="516" stroke="#9aa7b5" stroke-width="1" stroke-dasharray="3,3"/><line x1="1141.5" y1="359" x2="1141.5" y2="463" stroke="#9aa7b5" stroke-width="1" stroke-dasharray="3,3"/><line x1="1141.5" y1="467" x2="1141.5" y2="516" stroke="#9aa7b5" stroke-width="1" stroke-dasharray="3,3"/><line x1="1173.5" y1="359" x2="1173.5" y2="463" stroke="#9aa7b5" stroke-width="1" stroke-dasharray="3,3"/><line x1="1173.5" y1="467" x2="1173.5" y2="516" stroke="#9aa7b5" stroke-width="1" stroke-dasharray="3,3"/><line x1="1205.5" y1="359" x2="1205.5" y2="463" stroke="#9aa7b5" stroke-width="1" stroke-dasharray="3,3"/><line x1="1205.5" y1="467" x2="1205.5" y2="516" stroke="#9aa7b5" stroke-width="1" stroke-dasharray="3,3"/><line x1="1237.5" y1="359" x2="1237.5" y2="463" stroke="#9aa7b5" stroke-width="1" stroke-dasharray="3,3"/><line x1="1237.5" y1="467" x2="1237.5" y2="516" stroke="#9aa7b5" stroke-width="1" stroke-dasharray="3,3"/><line x1="1269.5" y1="359" x2="1269.5" y2="463" stroke="#9aa7b5" stroke-width="1" stroke-dasharray="3,3"/><line x1="1269.5" y1="467" x2="1269.5" y2="516" stroke="#9aa7b5" stroke-width="1" stroke-dasharray="3,3"/><line x1="1301.5" y1="359" x2="1301.5" y2="463" stroke="#9aa7b5" stroke-width="1" stroke-dasharray="3,3"/><line x1="1301.5" y1="467" x2="1301.5" y2="516" stroke="#9aa7b5" stroke-width="1" stroke-dasharray="3,3"/><line x1="790" y1="392.5" x2="1307" y2="392.5" stroke="#9aa7b5" stroke-dasharray="3,3"/><line x1="790" y1="427.5" x2="1307" y2="427.5" stroke="#9aa7b5" stroke-dasharray="3,3"/><line x1="790" y1="460.5" x2="1307" y2="460.5" stroke="#9aa7b5" stroke-dasharray="3,3"/><line x1="790" y1="486.5" x2="1307" y2="486.5" stroke="#9aa7b5" stroke-dasharray="3,3"/><line x1="790" y1="497.5" x2="1307" y2="497.5" stroke="#9aa7b5" stroke-dasharray="3,3"/><line x1="790" y1="509.5" x2="1307" y2="509.5" stroke="#9aa7b5" stroke-dasharray="3,3"/><line x1="790" y1="407.5" x2="1307" y2="407.5" stroke="#8a98a8"/><g clip-path="url(#cp777_324)"><line x1="789.5" y1="429" x2="789.5" y2="440" stroke="#00ff00"/><line x1="787" y1="436.5" x2="789" y2="436.5" stroke="#00ff00"/><line x1="790" y1="436.5" x2="792" y2="436.5" stroke="#00ff00"/><line x1="797.5" y1="432" x2="797.5" y2="443" stroke="#00ff00"/><line x1="795" y1="436.5" x2="797" y2="436.5" stroke="#00ff00"/><line x1="798" y1="437.5" x2="800" y2="437.5" stroke="#00ff00"/><line x1="805.5" y1="438" x2="805.5" y2="444" stroke="#00ff00"/><line x1="803" y1="437.5" x2="805" y2="437.5" stroke="#00ff00"/><line x1="806" y1="440.5" x2="808" y2="440.5" stroke="#00ff00"/><line x1="813.5" y1="441" x2="813.5" y2="453" stroke="#00ff00"/><line x1="811" y1="440.5" x2="813" y2="440.5" stroke="#00ff00"/><line x1="814" y1="448.5" x2="816" y2="448.5" stroke="#00ff00"/><line x1="821.5" y1="445" x2="821.5" y2="460" stroke="#00ff00"/><line x1="819" y1="448.5" x2="821" y2="448.5" stroke="#00ff00"/><line x1="822" y1="457.5" x2="824" y2="457.5" stroke="#00ff00"/><line x1="829.5" y1="440" x2="829.5" y2="457" stroke="#00ff00"/><line x1="827" y1="457.5" x2="829" y2="457.5" stroke="#00ff00"/><line x1="830" y1="442.5" x2="832" y2="442.5" stroke="#00ff00"/><line x1="837.5" y1="438" x2="837.5" y2="455" stroke="#00ff00"/><line x1="835" y1="442.5" x2="837" y2="442.5" stroke="#00ff00"/><line x1="838" y1="440.5" x2="840" y2="440.5" stroke="#00ff00"/><line x1="845.5" y1="423" x2="845.5" y2="439" stroke="#00ff00"/><line x1="843" y1="440.5" x2="845" y2="440.5" stroke="#00ff00"/><line x1="846" y1="428.5" x2="848" y2="428.5" stroke="#00ff00"/><line x1="853.5" y1="420" x2="853.5" y2="433" stroke="#00ff00"/><line x1="851" y1="428.5" x2="853" y2="428.5" stroke="#00ff00"/><line x1="854" y1="428.5" x2="856" y2="428.5" stroke="#00ff00"/><line x1="861.5" y1="426" x2="861.5" y2="439" stroke="#00ff00"/><line x1="859" y1="428.5" x2="861" y2="428.5" stroke="#00ff00"/><line x1="862" y1="432.5" x2="864" y2="432.5" stroke="#00ff00"/><line x1="869.5" y1="430" x2="869.5" y2="444" stroke="#00ff00"/><line x1="867" y1="432.5" x2="869" y2="432.5" stroke="#00ff00"/><line x1="870" y1="442.5" x2="872" y2="442.5" stroke="#00ff00"/><line x1="877.5" y1="436" x2="877.5" y2="443" stroke="#00ff00"/><line x1="875" y1="442.5" x2="877" y2="442.5" stroke="#00ff00"/><line x1="878" y1="438.5" x2="880" y2="438.5" stroke="#00ff00"/><line x1="885.5" y1="435" x2="885.5" y2="452" stroke="#00ff00"/><line x1="883" y1="438.5" x2="885" y2="438.5" stroke="#00ff00"/><line x1="886" y1="450.5" x2="888" y2="450.5" stroke="#00ff00"/><line x1="893.5" y1="443" x2="893.5" y2="455" stroke="#00ff00"/><line x1="891" y1="450.5" x2="893" y2="450.5" stroke="#00ff00"/><line x1="894" y1="444.5" x2="896" y2="444.5" stroke="#00ff00"/><line x1="901.5" y1="435" x2="901.5" y2="447" stroke="#00ff00"/><line x1="899" y1="444.5" x2="901" y2="444.5" stroke="#00ff00"/><line x1="902" y1="443.5" x2="904" y2="443.5" stroke="#00ff00"/><line x1="909.5" y1="438" x2="909.5" y2="453" stroke="#00ff00"/><line x1="907" y1="443.5" x2="909" y2="443.5" stroke="#00ff00"/><line x1="910" y1="451.5" x2="912" y2="451.5" stroke="#00ff00"/><line x1="917.5" y1="443" x2="917.5" y2="458" stroke="#00ff00"/><line x1="915" y1="451.5" x2="917" y2="451.5" stroke="#00ff00"/><line x1="918" y1="450.5" x2="920" y2="450.5" stroke="#00ff00"/><line x1="925.5" y1="440" x2="925.5" y2="454" stroke="#00ff00"/><line x1="923" y1="450.5" x2="925" y2="450.5" stroke="#00ff00"/><line x1="926" y1="441.5" x2="928" y2="441.5" stroke="#00ff00"/><line x1="933.5" y1="441" x2="933.5" y2="455" stroke="#00ff00"/><line x1="931" y1="441.5" x2="933" y2="441.5" stroke="#00ff00"/><line x1="934" y1="447.5" x2="936" y2="447.5" stroke="#00ff00"/><line x1="941.5" y1="439" x2="941.5" y2="453" stroke="#00ff00"/><line x1="939" y1="447.5" x2="941" y2="447.5" stroke="#00ff00"/><line x1="942" y1="447.5" x2="944" y2="447.5" stroke="#00ff00"/><line x1="949.5" y1="432" x2="949.5" y2="445" stroke="#00ff00"/><line x1="947" y1="447.5" x2="949" y2="447.5" stroke="#00ff00"/><line x1="950" y1="437.5" x2="952" y2="437.5" stroke="#00ff00"/><line x1="957.5" y1="429" x2="957.5" y2="450" stroke="#00ff00"/><line x1="955" y1="437.5" x2="957" y2="437.5" stroke="#00ff00"/><line x1="958" y1="435.5" x2="960" y2="435.5" stroke="#00ff00"/><line x1="965.5" y1="434" x2="965.5" y2="454" stroke="#00ff00"/><line x1="963" y1="435.5" x2="965" y2="435.5" stroke="#00ff00"/><line x1="966" y1="442.5" x2="968" y2="442.5" stroke="#00ff00"/><line x1="973.5" y1="438" x2="973.5" y2="448" stroke="#00ff00"/><line x1="971" y1="442.5" x2="973" y2="442.5" stroke="#00ff00"/><line x1="974" y1="440.5" x2="976" y2="440.5" stroke="#00ff00"/><line x1="981.5" y1="436" x2="981.5" y2="452" stroke="#00ff00"/><line x1="979" y1="440.5" x2="981" y2="440.5" stroke="#00ff00"/><line x1="982" y1="447.5" x2="984" y2="447.5" stroke="#00ff00"/><line x1="989.5" y1="439" x2="989.5" y2="450" stroke="#00ff00"/><line x1="987" y1="447.5" x2="989" y2="447.5" stroke="#00ff00"/><line x1="990" y1="446.5" x2="992" y2="446.5" stroke="#00ff00"/><line x1="997.5" y1="434" x2="997.5" y2="448" stroke="#00ff00"/><line x1="995" y1="446.5" x2="997" y2="446.5" stroke="#00ff00"/><line x1="998" y1="437.5" x2="1000" y2="437.5" stroke="#00ff00"/><line x1="1005.5" y1="424" x2="1005.5" y2="440" stroke="#00ff00"/><line x1="1003" y1="437.5" x2="1005" y2="437.5" stroke="#00ff00"/><line x1="1006" y1="428.5" x2="1008" y2="428.5" stroke="#00ff00"/><line x1="1013.5" y1="416" x2="1013.5" y2="431" stroke="#00ff00"/><line x1="1011" y1="428.5" x2="1013" y2="428.5" stroke="#00ff00"/><line x1="1014" y1="420.5" x2="1016" y2="420.5" stroke="#00ff00"/><line x1="1021.5" y1="408" x2="1021.5" y2="422" stroke="#00ff00"/><line x1="1019" y1="420.5" x2="1021" y2="420.5" stroke="#00ff00"/><line x1="1022" y1="419.5" x2="1024" y2="419.5" stroke="#00ff00"/><line x1="1029.5" y1="412" x2="1029.5" y2="426" stroke="#00ff00"/><line x1="1027" y1="419.5" x2="1029" y2="419.5" stroke="#00ff00"/><line x1="1030" y1="414.5" x2="1032" y2="414.5" stroke="#00ff00"/><line x1="1037.5" y1="410" x2="1037.5" y2="422" stroke="#00ff00"/><line x1="1035" y1="414.5" x2="1037" y2="414.5" stroke="#00ff00"/><line x1="1038" y1="414.5" x2="1040" y2="414.5" stroke="#00ff00"/><line x1="1045.5" y1="389" x2="1045.5" y2="417" stroke="#00ff00"/><line x1="1043" y1="414.5" x2="1045" y2="414.5" stroke="#00ff00"/><line x1="1046" y1="390.5" x2="1048" y2="390.5" stroke="#00ff00"/><line x1="1053.5" y1="368" x2="1053.5" y2="392" stroke="#00ff00"/><line x1="1051" y1="390.5" x2="1053" y2="390.5" stroke="#00ff00"/><line x1="1054" y1="373.5" x2="1056" y2="373.5" stroke="#00ff00"/><line x1="1061.5" y1="368" x2="1061.5" y2="388" stroke="#00ff00"/><line x1="1059" y1="373.5" x2="1061" y2="373.5" stroke="#00ff00"/><line x1="1062" y1="387.5" x2="1064" y2="387.5" stroke="#00ff00"/><line x1="1069.5" y1="379" x2="1069.5" y2="393" stroke="#00ff00"/><line x1="1067" y1="387.5" x2="1069" y2="387.5" stroke="#00ff00"/><line x1="1070" y1="388.5" x2="1072" y2="388.5" stroke="#00ff00"/><line x1="1077.5" y1="381" x2="1077.5" y2="403" stroke="#00ff00"/><line x1="1075" y1="388.5" x2="1077" y2="388.5" stroke="#00ff00"/><line x1="1078" y1="396.5" x2="1080" y2="396.5" stroke="#00ff00"/><line x1="1085.5" y1="387" x2="1085.5" y2="399" stroke="#00ff00"/><line x1="1083" y1="396.5" x2="1085" y2="396.5" stroke="#00ff00"/><line x1="1086" y1="398.5" x2="1088" y2="398.5" stroke="#00ff00"/><line x1="1093.5" y1="393" x2="1093.5" y2="406" stroke="#00ff00"/><line x1="1091" y1="398.5" x2="1093" y2="398.5" stroke="#00ff00"/><line x1="1094" y1="396.5" x2="1096" y2="396.5" stroke="#00ff00"/><line x1="1101.5" y1="392" x2="1101.5" y2="412" stroke="#00ff00"/><line x1="1099" y1="396.5" x2="1101" y2="396.5" stroke="#00ff00"/><line x1="1102" y1="409.5" x2="1104" y2="409.5" stroke="#00ff00"/><line x1="1109.5" y1="408" x2="1109.5" y2="417" stroke="#00ff00"/><line x1="1107" y1="409.5" x2="1109" y2="409.5" stroke="#00ff00"/><line x1="1110" y1="415.5" x2="1112" y2="415.5" stroke="#00ff00"/><line x1="1117.5" y1="408" x2="1117.5" y2="426" stroke="#00ff00"/><line x1="1115" y1="415.5" x2="1117" y2="415.5" stroke="#00ff00"/><line x1="1118" y1="423.5" x2="1120" y2="423.5" stroke="#00ff00"/><line x1="1125.5" y1="419" x2="1125.5" y2="434" stroke="#00ff00"/><line x1="1123" y1="423.5" x2="1125" y2="423.5" stroke="#00ff00"/><line x1="1126" y1="429.5" x2="1128" y2="429.5" stroke="#00ff00"/><line x1="1133.5" y1="416" x2="1133.5" y2="435" stroke="#00ff00"/><line x1="1131" y1="429.5" x2="1133" y2="429.5" stroke="#00ff00"/><line x1="1134" y1="418.5" x2="1136" y2="418.5" stroke="#00ff00"/><line x1="1141.5" y1="403" x2="1141.5" y2="417" stroke="#00ff00"/><line x1="1139" y1="418.5" x2="1141" y2="418.5" stroke="#00ff00"/><line x1="1142" y1="410.5" x2="1144" y2="410.5" stroke="#00ff00"/><line x1="1149.5" y1="406" x2="1149.5" y2="428" stroke="#00ff00"/><line x1="1147" y1="410.5" x2="1149" y2="410.5" stroke="#00ff00"/><line x1="1150" y1="426.5" x2="1152" y2="426.5" stroke="#00ff00"/><line x1="1157.5" y1="419" x2="1157.5" y2="428" stroke="#00ff00"/><line x1="1155" y1="426.5" x2="1157" y2="426.5" stroke="#00ff00"/><line x1="1158" y1="426.5" x2="1160" y2="426.5" stroke="#00ff00"/><line x1="1165.5" y1="418" x2="1165.5" y2="430" stroke="#00ff00"/><line x1="1163" y1="426.5" x2="1165" y2="426.5" stroke="#00ff00"/><line x1="1166" y1="425.5" x2="1168" y2="425.5" stroke="#00ff00"/><line x1="1173.5" y1="424" x2="1173.5" y2="434" stroke="#00ff00"/><line x1="1171" y1="425.5" x2="1173" y2="425.5" stroke="#00ff00"/><line x1="1174" y1="425.5" x2="1176" y2="425.5" stroke="#00ff00"/><line x1="1181.5" y1="421" x2="1181.5" y2="443" stroke="#00ff00"/><line x1="1179" y1="425.5" x2="1181" y2="425.5" stroke="#00ff00"/><line x1="1182" y1="435.5" x2="1184" y2="435.5" stroke="#00ff00"/><line x1="1189.5" y1="425" x2="1189.5" y2="437" stroke="#00ff00"/><line x1="1187" y1="435.5" x2="1189" y2="435.5" stroke="#00ff00"/><line x1="1190" y1="430.5" x2="1192" y2="430.5" stroke="#00ff00"/><line x1="1197.5" y1="421" x2="1197.5" y2="433" stroke="#00ff00"/><line x1="1195" y1="430.5" x2="1197" y2="430.5" stroke="#00ff00"/><line x1="1198" y1="422.5" x2="1200" y2="422.5" stroke="#00ff00"/><line x1="1205.5" y1="410" x2="1205.5" y2="426" stroke="#00ff00"/><line x1="1203" y1="422.5" x2="1205" y2="422.5" stroke="#00ff00"/><line x1="1206" y1="416.5" x2="1208" y2="416.5" stroke="#00ff00"/><line x1="1213.5" y1="414" x2="1213.5" y2="433" stroke="#00ff00"/><line x1="1211" y1="416.5" x2="1213" y2="416.5" stroke="#00ff00"/><line x1="1214" y1="428.5" x2="1216" y2="428.5" stroke="#00ff00"/><line x1="1221.5" y1="418" x2="1221.5" y2="430" stroke="#00ff00"/><line x1="1219" y1="428.5" x2="1221" y2="428.5" stroke="#00ff00"/><line x1="1222" y1="420.5" x2="1224" y2="420.5" stroke="#00ff00"/><line x1="1229.5" y1="418" x2="1229.5" y2="431" stroke="#00ff00"/><line x1="1227" y1="420.5" x2="1229" y2="420.5" stroke="#00ff00"/><line x1="1230" y1="419.5" x2="1232" y2="419.5" stroke="#00ff00"/><line x1="1237.5" y1="412" x2="1237.5" y2="431" stroke="#00ff00"/><line x1="1235" y1="419.5" x2="1237" y2="419.5" stroke="#00ff00"/><line x1="1238" y1="423.5" x2="1240" y2="423.5" stroke="#00ff00"/><line x1="1245.5" y1="418" x2="1245.5" y2="433" stroke="#00ff00"/><line x1="1243" y1="423.5" x2="1245" y2="423.5" stroke="#00ff00"/><line x1="1246" y1="419.5" x2="1248" y2="419.5" stroke="#00ff00"/><line x1="1253.5" y1="419" x2="1253.5" y2="429" stroke="#00ff00"/><line x1="1251" y1="419.5" x2="1253" y2="419.5" stroke="#00ff00"/><line x1="1254" y1="420.5" x2="1256" y2="420.5" stroke="#00ff00"/><line x1="1261.5" y1="410" x2="1261.5" y2="425" stroke="#00ff00"/><line x1="1259" y1="420.5" x2="1261" y2="420.5" stroke="#00ff00"/><line x1="1262" y1="414.5" x2="1264" y2="414.5" stroke="#00ff00"/><line x1="1269.5" y1="408" x2="1269.5" y2="416" stroke="#00ff00"/><line x1="1267" y1="414.5" x2="1269" y2="414.5" stroke="#00ff00"/><line x1="1270" y1="413.5" x2="1272" y2="413.5" stroke="#00ff00"/><line x1="1277.5" y1="407" x2="1277.5" y2="417" stroke="#00ff00"/><line x1="1275" y1="413.5" x2="1277" y2="413.5" stroke="#00ff00"/><line x1="1278" y1="409.5" x2="1280" y2="409.5" stroke="#00ff00"/><line x1="1285.5" y1="405" x2="1285.5" y2="415" stroke="#00ff00"/><line x1="1283" y1="409.5" x2="1285" y2="409.5" stroke="#00ff00"/><line x1="1286" y1="408.5" x2="1288" y2="408.5" stroke="#00ff00"/></g><line x1="789.5" y1="491" x2="789.5" y2="516" stroke="#ff0000"/><line x1="797.5" y1="485" x2="797.5" y2="516" stroke="#008000"/><line x1="805.5" y1="498" x2="805.5" y2="516" stroke="#ff0000"/><line x1="813.5" y1="496" x2="813.5" y2="516" stroke="#008000"/><line x1="821.5" y1="484" x2="821.5" y2="516" stroke="#008000"/><line x1="829.5" y1="493" x2="829.5" y2="516" stroke="#ff0000"/><line x1="837.5" y1="481" x2="837.5" y2="516" stroke="#008000"/><line x1="845.5" y1="486" x2="845.5" y2="516" stroke="#ff0000"/><line x1="853.5" y1="494" x2="853.5" y2="516" stroke="#ff0000"/><line x1="861.5" y1="491" x2="861.5" y2="516" stroke="#008000"/><line x1="869.5" y1="487" x2="869.5" y2="516" stroke="#008000"/><line x1="877.5" y1="483" x2="877.5" y2="516" stroke="#008000"/><line x1="885.5" y1="489" x2="885.5" y2="516" stroke="#ff0000"/><line x1="893.5" y1="498" x2="893.5" y2="516" stroke="#ff0000"/><line x1="901.5" y1="489" x2="901.5" y2="516" stroke="#008000"/><line x1="909.5" y1="488" x2="909.5" y2="516" stroke="#008000"/><line x1="917.5" y1="493" x2="917.5" y2="516" stroke="#ff0000"/><line x1="925.5" y1="491" x2="925.5" y2="516" stroke="#008000"/><line x1="933.5" y1="488" x2="933.5" y2="516" stroke="#008000"/><line x1="941.5" y1="490" x2="941.5" y2="516" stroke="#ff0000"/><line x1="949.5" y1="495" x2="949.5" y2="516" stroke="#ff0000"/><line x1="957.5" y1="485" x2="957.5" y2="516" stroke="#008000"/><line x1="965.5" y1="486" x2="965.5" y2="516" stroke="#ff0000"/><line x1="973.5" y1="484" x2="973.5" y2="516" stroke="#008000"/><line x1="981.5" y1="490" x2="981.5" y2="516" stroke="#ff0000"/><line x1="989.5" y1="496" x2="989.5" y2="516" stroke="#ff0000"/><line x1="997.5" y1="494" x2="997.5" y2="516" stroke="#008000"/><line x1="1005.5" y1="489" x2="1005.5" y2="516" stroke="#008000"/><line x1="1013.5" y1="486" x2="1013.5" y2="516" stroke="#008000"/><line x1="1021.5" y1="490" x2="1021.5" y2="516" stroke="#ff0000"/><line x1="1029.5" y1="488" x2="1029.5" y2="516" stroke="#008000"/><line x1="1037.5" y1="491" x2="1037.5" y2="516" stroke="#ff0000"/><line x1="1045.5" y1="485" x2="1045.5" y2="516" stroke="#008000"/><line x1="1053.5" y1="484" x2="1053.5" y2="516" stroke="#008000"/><line x1="1061.5" y1="470" x2="1061.5" y2="516" stroke="#008000"/><line x1="1069.5" y1="486" x2="1069.5" y2="516" stroke="#ff0000"/><line x1="1077.5" y1="485" x2="1077.5" y2="516" stroke="#008000"/><line x1="1085.5" y1="483" x2="1085.5" y2="516" stroke="#008000"/><line x1="1093.5" y1="490" x2="1093.5" y2="516" stroke="#ff0000"/><line x1="1101.5" y1="491" x2="1101.5" y2="516" stroke="#ff0000"/><line x1="1109.5" y1="486" x2="1109.5" y2="516" stroke="#008000"/><line x1="1117.5" y1="488" x2="1117.5" y2="516" stroke="#ff0000"/><line x1="1125.5" y1="486" x2="1125.5" y2="516" stroke="#008000"/><line x1="1133.5" y1="480" x2="1133.5" y2="516" stroke="#008000"/><line x1="1141.5" y1="486" x2="1141.5" y2="516" stroke="#ff0000"/><line x1="1149.5" y1="490" x2="1149.5" y2="516" stroke="#ff0000"/><line x1="1157.5" y1="480" x2="1157.5" y2="516" stroke="#008000"/><line x1="1165.5" y1="489" x2="1165.5" y2="516" stroke="#ff0000"/><line x1="1173.5" y1="491" x2="1173.5" y2="516" stroke="#ff0000"/><line x1="1181.5" y1="488" x2="1181.5" y2="516" stroke="#008000"/><line x1="1189.5" y1="489" x2="1189.5" y2="516" stroke="#ff0000"/><line x1="1197.5" y1="494" x2="1197.5" y2="516" stroke="#ff0000"/><line x1="1205.5" y1="492" x2="1205.5" y2="516" stroke="#008000"/><line x1="1213.5" y1="490" x2="1213.5" y2="516" stroke="#008000"/><line x1="1221.5" y1="495" x2="1221.5" y2="516" stroke="#ff0000"/><line x1="1229.5" y1="491" x2="1229.5" y2="516" stroke="#008000"/><line x1="1237.5" y1="490" x2="1237.5" y2="516" stroke="#008000"/><line x1="1245.5" y1="490" x2="1245.5" y2="516" stroke="#ff0000"/><line x1="1253.5" y1="491" x2="1253.5" y2="516" stroke="#ff0000"/><line x1="1261.5" y1="503" x2="1261.5" y2="516" stroke="#ff0000"/><line x1="1269.5" y1="498" x2="1269.5" y2="516" stroke="#008000"/><line x1="1277.5" y1="499" x2="1277.5" y2="516" stroke="#008000"/><line x1="1285.5" y1="501" x2="1285.5" y2="516" stroke="#ff0000"/><polyline points="789.6,497.3 797.6,500.3 805.6,502.2 813.6,508.7 821.6,513.7 829.6,505.5 837.6,502.2 845.6,483.6 853.6,479.4 861.6,487.8 869.6,494.6 877.6,497.9 885.6,504.9 893.6,506.4 901.6,499.2 909.6,504.9 917.6,506.8 925.6,501.7 933.6,504.1 941.6,500.3 949.6,492.7 957.6,497.3 965.6,497.3 973.6,494.0 981.6,497.9 989.6,500.3 997.6,487.0 1005.6,471.8 1013.6,469.3 1021.6,473.1 1029.6,479.8 1037.6,484.5 1044.7,476.8 1053.1,473.1 1061.1,479.2 1068.8,485.2 1077.3,488.8 1093.0,493.7 1101.5,496.1 1110.0,502.1 1125.7,510.6 1141.4,503.4 1149.8,507.0 1165.6,506.3 1181.3,510.6 1189.7,508.7 1205.5,493.7 1213.9,499.7 1221.2,494.9 1229.6,493.7 1245.3,496.1 1252.6,492.5 1261.1,478.0 1269.0,473.1 1276.8,476.8 1284.8,479.9" fill="none" stroke="#20b2aa" stroke-width="1" shape-rendering="crispEdges"/><rect x="789.5" y="358.5" width="518" height="105" fill="none" stroke="#fff"/><rect x="789.5" y="466.5" width="518" height="50" fill="none" stroke="#fff"/><line x1="789.5" y1="517" x2="789.5" y2="521" stroke="#fff" stroke-width="1"/><text x="789" y="529" fill="#fff" stroke="#fff" stroke-width="0.25" font-family="Liberation Sans" font-size="9.3" letter-spacing="-0.05" style="white-space:pre" text-anchor="start" >12 Oct 2022</text><line x1="853.5" y1="517" x2="853.5" y2="521" stroke="#fff" stroke-width="1"/><text x="853" y="529" fill="#fff" stroke="#fff" stroke-width="0.25" font-family="Liberation Sans" font-size="9.3" letter-spacing="-0.05" style="white-space:pre" text-anchor="start" >12 Oct 12:04</text><line x1="917.5" y1="517" x2="917.5" y2="521" stroke="#fff" stroke-width="1"/><text x="917" y="529" fill="#fff" stroke="#fff" stroke-width="0.25" font-family="Liberation Sans" font-size="9.3" letter-spacing="-0.05" style="white-space:pre" text-anchor="start" >12 Oct 12:12</text><line x1="981.5" y1="517" x2="981.5" y2="521" stroke="#fff" stroke-width="1"/><text x="981" y="529" fill="#fff" stroke="#fff" stroke-width="0.25" font-family="Liberation Sans" font-size="9.3" letter-spacing="-0.05" style="white-space:pre" text-anchor="start" >12 Oct 12:20</text><line x1="1045.5" y1="517" x2="1045.5" y2="521" stroke="#fff" stroke-width="1"/><text x="1045" y="529" fill="#fff" stroke="#fff" stroke-width="0.25" font-family="Liberation Sans" font-size="9.3" letter-spacing="-0.05" style="white-space:pre" text-anchor="start" >12 Oct 12:28</text><line x1="1109.5" y1="517" x2="1109.5" y2="521" stroke="#fff" stroke-width="1"/><text x="1109" y="529" fill="#fff" stroke="#fff" stroke-width="0.25" font-family="Liberation Sans" font-size="9.3" letter-spacing="-0.05" style="white-space:pre" text-anchor="start" >12 Oct 12:36</text><line x1="1173.5" y1="517" x2="1173.5" y2="521" stroke="#fff" stroke-width="1"/><text x="1173" y="529" fill="#fff" stroke="#fff" stroke-width="0.25" font-family="Liberation Sans" font-size="9.3" letter-spacing="-0.05" style="white-space:pre" text-anchor="start" >12 Oct 12:44</text><line x1="1237.5" y1="517" x2="1237.5" y2="521" stroke="#fff" stroke-width="1"/><text x="1237" y="529" fill="#fff" stroke="#fff" stroke-width="0.25" font-family="Liberation Sans" font-size="9.3" letter-spacing="-0.05" style="white-space:pre" text-anchor="start" >12 Oct 12:52</text><line x1="1308" y1="392.5" x2="1311" y2="392.5" stroke="#fff"/><text x="1313" y="396" fill="#fff" stroke="#fff" stroke-width="0.25" font-family="Liberation Sans" font-size="9.3" letter-spacing="-0.05" style="white-space:pre" text-anchor="start" >0.62700</text><line x1="1308" y1="427.5" x2="1311" y2="427.5" stroke="#fff"/><text x="1313" y="431" fill="#fff" stroke="#fff" stroke-width="0.25" font-family="Liberation Sans" font-size="9.3" letter-spacing="-0.05" style="white-space:pre" text-anchor="start" >0.62635</text><line x1="1308" y1="460.5" x2="1311" y2="460.5" stroke="#fff"/><text x="1313" y="464" fill="#fff" stroke="#fff" stroke-width="0.25" font-family="Liberation Sans" font-size="9.3" letter-spacing="-0.05" style="white-space:pre" text-anchor="start" >0.62575</text><line x1="1308" y1="472.5" x2="1311" y2="472.5" stroke="#fff"/><text x="1313" y="476" fill="#fff" stroke="#fff" stroke-width="0.25" font-family="Liberation Sans" font-size="9.3" letter-spacing="-0.05" style="white-space:pre" text-anchor="start" >267.6574</text><line x1="1308" y1="486.5" x2="1311" y2="486.5" stroke="#fff"/><text x="1313" y="490" fill="#fff" stroke="#fff" stroke-width="0.25" font-family="Liberation Sans" font-size="9.3" letter-spacing="-0.05" style="white-space:pre" text-anchor="start" >100</text><line x1="1308" y1="497.5" x2="1311" y2="497.5" stroke="#fff"/><text x="1313" y="501" fill="#fff" stroke="#fff" stroke-width="0.25" font-family="Liberation Sans" font-size="9.3" letter-spacing="-0.05" style="white-space:pre" text-anchor="start" >0.00</text><line x1="1308" y1="509.5" x2="1311" y2="509.5" stroke="#fff"/><text x="1313" y="513" fill="#fff" stroke="#fff" stroke-width="0.25" font-family="Liberation Sans" font-size="9.3" letter-spacing="-0.05" style="white-space:pre" text-anchor="start" >-158.7364</text><rect x="1309" y="402" width="41" height="11" fill="#fff"/><text x="1313" y="411" fill="#000" stroke="#000" stroke-width="0.25" font-family="Liberation Sans" font-size="9.3" letter-spacing="-0.05" style="white-space:pre" text-anchor="start" >0.62673</text><path d="M792 364h7l-3.5 4z" fill="#fff"/><text x="804" y="370" fill="#fff" stroke="#fff" stroke-width="0.25" font-family="Liberation Sans" font-size="9.3" letter-spacing="-0.05" style="white-space:pre" text-anchor="start" >AUDUSD,M1  0.62668 0.62676 0.62661 0.62673</text><text x="793" y="478" fill="#fff" stroke="#fff" stroke-width="0.25" font-family="Liberation Sans" font-size="9.3" letter-spacing="-0.05" style="white-space:pre" text-anchor="start" >CCI(14) 147.1528  Volumes 58</text></svg><div style="left:188px;top:547px;width:1177px;height:22px;background:#f0f0f0"></div><div style="left:188px;top:549px;width:1177px;height:1px;background:#000"></div><div style="left:193px;top:549px;width:84px;height:19px;background:#fff;border:1px solid #000;border-top:none;border-bottom-width:2px"></div><div class="t" style="left:203px;top:550px;height:18px;line-height:18px;font-size:12.4px;color:#000;font-weight:normal;transform:scaleX(0.84);transform-origin:0 0">EURUSD,M1</div><div class="t" style="left:289px;top:550px;height:18px;line-height:18px;font-size:12.4px;color:#8d8d8d;font-weight:normal;transform:scaleX(0.84);transform-origin:0 0">GBPUSD,M1</div><div style="left:365px;top:552px;width:1px;height:13px;background:#8d8d8d"></div><div class="t" style="left:377px;top:550px;height:18px;line-height:18px;font-size:12.4px;color:#8d8d8d;font-weight:normal;transform:scaleX(0.84);transform-origin:0 0">USDJPY,M1</div><div style="left:449px;top:552px;width:1px;height:13px;background:#8d8d8d"></div><div class="t" style="left:460px;top:550px;height:18px;line-height:18px;font-size:12.4px;color:#8d8d8d;font-weight:normal;transform:scaleX(0.84);transform-origin:0 0">AUDUSD,M1</div><div style="left:536px;top:552px;width:1px;height:13px;background:#8d8d8d"></div><svg style="position:absolute;left:1332px;top:554px;" width="6" height="8" viewBox="0 0 6 8"><path d="M5 0v8l-5-4z" fill="#a0a0a0"/></svg><svg style="position:absolute;left:1353px;top:554px;" width="6" height="8" viewBox="0 0 6 8"><path d="M0 0v8l5-4z" fill="#a0a0a0"/></svg><div style="left:0px;top:569px;width:1365px;height:135px;background:#f0f0f0"></div><div style="left:0px;top:573px;width:1365px;height:1px;background:#b9b9b9"></div><svg style="position:absolute;left:3px;top:575px;" width="8" height="7" viewBox="0 0 8 7"><path d="M1 1l6 5M7 1l-6 5" stroke="#000" stroke-width="1.6"/></svg><div style="left:1px;top:587px;width:13px;height:114px;background:#c6d4e4"></div><div class="t" style="left:-17px;top:676px;width:50px;height:12px;line-height:12px;font-size:11.5px;color:#000;transform:rotate(-90deg);transform-origin:25px 6px;text-align:right">Terminal</div><div style="left:15px;top:574px;width:1350px;height:106px;background:#fff;border-left:1px solid #a0a0a0"></div><div class="t" style="left:22px;top:578px;height:16px;line-height:16px;font-size:12px;color:#000;font-weight:normal;">Headline</div><div style="left:747px;top:575px;width:1px;height:23px;background:#e5e5e5"></div><div style="left:1213px;top:575px;width:1px;height:23px;background:#e5e5e5"></div><div class="t" style="left:753px;top:578px;height:16px;line-height:16px;font-size:12px;color:#000;font-weight:normal;">From</div><div class="t" style="right:26px;top:578px;height:16px;line-height:16px;font-size:12px;color:#000;font-weight:normal;text-align:right;">Time</div><div style="left:16px;top:598px;width:1330px;height:20px;background:#e9e9e9;border-top:1px solid #c8c8c8"></div><div style="left:747px;top:598px;width:1px;height:20px;background:#c8c8c8"></div><div style="left:1213px;top:598px;width:1px;height:20px;background:#c8c8c8"></div><svg style="position:absolute;left:18px;top:603px;" width="13" height="10" viewBox="0 0 13 10"><rect x="0.5" y="0.5" width="12" height="9" rx="1" fill="#f7e6b0" stroke="#a8873a"/><path d="M1 1.5l5.5 4.5 5.5-4.5" stroke="#a8873a" fill="none"/></svg><div class="t" style="left:38px;top:599px;height:17px;line-height:17px;font-size:11.6px;color:#000;font-weight:bold;">New account registration</div><div class="t" style="left:752px;top:599px;height:17px;line-height:17px;font-size:11.6px;color:#000;font-weight:bold;">International Capital Markets Pty Ltd.</div><div class="t" style="right:24px;top:599px;height:17px;line-height:17px;font-size:12px;color:#000;font-weight:bold;text-align:right;">2022.10.12 12:32</div><div style="left:16px;top:618px;width:1330px;height:20px;background:#fff;border-top:1px solid #c8c8c8"></div><div style="left:747px;top:618px;width:1px;height:20px;background:#c8c8c8"></div><div style="left:1213px;top:618px;width:1px;height:20px;background:#c8c8c8"></div><svg style="position:absolute;left:18px;top:623px;" width="13" height="10" viewBox="0 0 13 10"><rect x="0.5" y="0.5" width="12" height="9" rx="1" fill="#f7e6b0" stroke="#a8873a"/><path d="M1 1.5l5.5 4.5 5.5-4.5" stroke="#a8873a" fill="none"/></svg><div class="t" style="left:38px;top:619px;height:17px;line-height:17px;font-size:11.6px;color:#000;font-weight:bold;">Welcome!</div><div class="t" style="left:752px;top:619px;height:17px;line-height:17px;font-size:11.6px;color:#000;font-weight:bold;">Trading Platform</div><div class="t" style="right:24px;top:619px;height:17px;line-height:17px;font-size:12px;color:#000;font-weight:bold;text-align:right;">2022.10.07 15:42</div><div style="left:16px;top:638px;width:1330px;height:20px;background:#e9e9e9;border-top:1px solid #c8c8c8"></div><div style="left:747px;top:638px;width:1px;height:20px;background:#c8c8c8"></div><div style="left:1213px;top:638px;width:1px;height:20px;background:#c8c8c8"></div><svg style="position:absolute;left:18px;top:643px;" width="13" height="10" viewBox="0 0 13 10"><rect x="0.5" y="0.5" width="12" height="9" rx="1" fill="#f7e6b0" stroke="#a8873a"/><path d="M1 1.5l5.5 4.5 5.5-4.5" stroke="#a8873a" fill="none"/></svg><div class="t" style="left:38px;top:639px;height:17px;line-height:17px;font-size:11.6px;color:#000;font-weight:bold;">Built-in Virtual Hosting — trading robots and signals now working 24/7</div><div class="t" style="left:752px;top:639px;height:17px;line-height:17px;font-size:11.6px;color:#000;font-weight:bold;">Trading Platform</div><div class="t" style="right:24px;top:639px;height:17px;line-height:17px;font-size:12px;color:#000;font-weight:bold;text-align:right;">2022.10.07 15:42</div><div style="left:16px;top:658px;width:1330px;height:20px;background:#fff;border-top:1px solid #c8c8c8"></div><div style="left:747px;top:658px;width:1px;height:20px;background:#c8c8c8"></div><div style="left:1213px;top:658px;width:1px;height:20px;background:#c8c8c8"></div><svg style="position:absolute;left:18px;top:663px;" width="13" height="10" viewBox="0 0 13 10"><rect x="0.5" y="0.5" width="12" height="9" rx="1" fill="#f7e6b0" stroke="#a8873a"/><path d="M1 1.5l5.5 4.5 5.5-4.5" stroke="#a8873a" fill="none"/></svg><div class="t" style="left:38px;top:659px;height:17px;line-height:17px;font-size:11.6px;color:#000;font-weight:bold;">Trading Signals and copy trading</div><div class="t" style="left:752px;top:659px;height:17px;line-height:17px;font-size:11.6px;color:#000;font-weight:bold;">Trading Platform</div><div class="t" style="right:24px;top:659px;height:17px;line-height:17px;font-size:12px;color:#000;font-weight:bold;text-align:right;">2022.10.07 15:42</div><div style="left:16px;top:678px;width:1330px;height:1px;background:#c8c8c8"></div><div style="left:1346px;top:575px;width:19px;height:104px;background:#f0f0f0"></div><svg style="position:absolute;left:1350px;top:580px;" width="10" height="7" viewBox="0 0 10 7"><path d="M1 6l4-4 4 4" stroke="#606060" stroke-width="1.5" fill="none"/></svg><div style="left:1347px;top:591px;width:17px;height:41px;background:#cdcdcd"></div><svg style="position:absolute;left:1350px;top:667px;" width="10" height="7" viewBox="0 0 10 7"><path d="M1 1l4 4 4-4" stroke="#606060" stroke-width="1.5" fill="none"/></svg><div style="left:15px;top:679px;width:1350px;height:1px;background:#000"></div><div class="t" style="left:28px;top:680px;height:18px;line-height:18px;font-size:12px;color:#8d8d8d;font-weight:normal;">Trade</div><div style="left:66px;top:683px;width:1px;height:13px;background:#8d8d8d"></div><div class="t" style="left:77px;top:680px;height:18px;line-height:18px;font-size:12px;color:#8d8d8d;font-weight:normal;">Exposure</div><div style="left:135px;top:683px;width:1px;height:13px;background:#8d8d8d"></div><div class="t" style="left:145px;top:680px;height:18px;line-height:18px;font-size:12px;color:#8d8d8d;font-weight:normal;">Account History</div><div style="left:241px;top:683px;width:1px;height:13px;background:#8d8d8d"></div><div class="t" style="left:251px;top:680px;height:18px;line-height:18px;font-size:12px;color:#8d8d8d;font-weight:normal;">News</div><div style="left:302px;top:683px;width:1px;height:13px;background:#8d8d8d"></div><div class="t" style="left:312px;top:680px;height:18px;line-height:18px;font-size:12px;color:#8d8d8d;font-weight:normal;">Alerts</div><div class="t" style="left:281px;top:686px;height:12px;line-height:12px;font-size:9px;color:#e00000;font-weight:bold;">99</div><div style="left:352px;top:679px;width:71px;height:22px;background:#fff;border:1px solid #000;border-top:none;border-bottom-width:2px"></div><div class="t" style="left:362px;top:680px;height:18px;line-height:18px;font-size:12px;color:#000;font-weight:normal;">Mailbox</div><div class="t" style="left:406px;top:686px;height:12px;line-height:12px;font-size:9px;color:#e00000;font-weight:bold;">7</div><div class="t" style="left:432px;top:680px;height:18px;line-height:18px;font-size:12px;color:#8d8d8d;font-weight:normal;">Market</div><div style="left:496px;top:683px;width:1px;height:13px;background:#8d8d8d"></div><div class="t" style="left:506px;top:680px;height:18px;line-height:18px;font-size:12px;color:#8d8d8d;font-weight:normal;">Signals</div><div style="left:553px;top:683px;width:1px;height:13px;background:#8d8d8d"></div><div class="t" style="left:563px;top:680px;height:18px;line-height:18px;font-size:12px;color:#8d8d8d;font-weight:normal;">Articles</div><div style="left:620px;top:683px;width:1px;height:13px;background:#8d8d8d"></div><div class="t" style="left:629px;top:680px;height:18px;line-height:18px;font-size:12px;color:#8d8d8d;font-weight:normal;">Code Base</div><div style="left:694px;top:683px;width:1px;height:13px;background:#8d8d8d"></div><div class="t" style="left:704px;top:680px;height:18px;line-height:18px;font-size:12px;color:#8d8d8d;font-weight:normal;">Experts</div><div style="left:752px;top:683px;width:1px;height:13px;background:#8d8d8d"></div><div class="t" style="left:762px;top:680px;height:18px;line-height:18px;font-size:12px;color:#8d8d8d;font-weight:normal;">Journal</div><div style="left:810px;top:683px;width:1px;height:13px;background:#8d8d8d"></div><div class="t" style="left:470px;top:686px;height:12px;line-height:12px;font-size:9px;color:#e00000;font-weight:bold;">104</div><div class="t" style="left:604px;top:686px;height:12px;line-height:12px;font-size:9px;color:#e00000;font-weight:bold;">3</div><div style="left:0px;top:704px;width:1365px;height:24px;background:#f0f0f0;border-top:1px solid #d0d0d0"></div><div class="t" style="left:3px;top:709px;height:16px;line-height:16px;font-size:11.2px;color:#000;font-weight:normal;">For Help, press F1</div><div style="left:671px;top:707px;width:1px;height:21px;background:#a0a0a0"></div><div style="left:788px;top:707px;width:1px;height:21px;background:#a0a0a0"></div><div style="left:889px;top:707px;width:1px;height:21px;background:#a0a0a0"></div><div style="left:960px;top:707px;width:1px;height:21px;background:#a0a0a0"></div><div style="left:1032px;top:707px;width:1px;height:21px;background:#a0a0a0"></div><div style="left:1100px;top:707px;width:1px;height:21px;background:#a0a0a0"></div><div style="left:1169px;top:707px;width:1px;height:21px;background:#a0a0a0"></div><div style="left:1236px;top:707px;width:1px;height:21px;background:#a0a0a0"></div><div class="t" style="left:678px;top:709px;height:16px;line-height:16px;font-size:11.2px;color:#000;font-weight:normal;">Default</div><svg style="position:absolute;left:1242px;top:710px;" width="23" height="14" viewBox="0 0 23 14"><rect x="0" y="0" width="2" height="14" fill="#1d3350"/><rect x="0" y="0" width="2" height="10.0" fill="#5a7a10"/><rect x="3" y="0" width="2" height="14" fill="#1d3350"/><rect x="3" y="0" width="2" height="8.8" fill="#5a7a10"/><rect x="6" y="0" width="2" height="14" fill="#1d3350"/><rect x="6" y="0" width="2" height="7.6" fill="#5a7a10"/><rect x="9" y="0" width="2" height="14" fill="#1d3350"/><rect x="9" y="0" width="2" height="6.4" fill="#5a7a10"/><rect x="12" y="0" width="2" height="14" fill="#1d3350"/><rect x="12" y="0" width="2" height="5.2" fill="#5a7a10"/><rect x="15" y="0" width="2" height="14" fill="#1d3350"/><rect x="15" y="0" width="2" height="4.0" fill="#5a7a10"/><rect x="18" y="0" width="2" height="14" fill="#1d3350"/><rect x="18" y="0" width="2" height="2.8" fill="#5a7a10"/><rect x="21" y="0" width="2" height="14" fill="#1d3350"/><rect x="21" y="0" width="2" height="1.6" fill="#5a7a10"/></svg><div class="t" style="left:1269px;top:709px;height:16px;line-height:16px;font-size:11.2px;color:#000;font-weight:normal;">2785/2 kb</div></body></html>
